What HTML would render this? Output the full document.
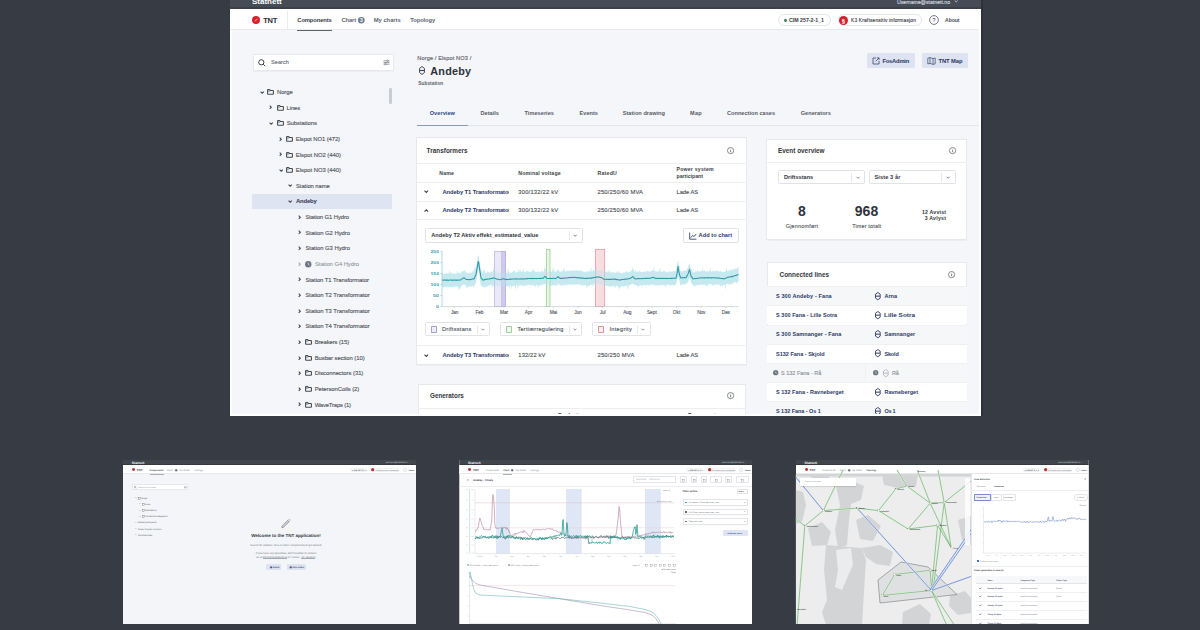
<!DOCTYPE html><html><head><meta charset="utf-8"><style>
html,body{margin:0;padding:0;}
body{width:1200px;height:630px;background:#373c44;position:relative;overflow:hidden;font-family:'Liberation Sans', sans-serif;}
.t{position:absolute;white-space:nowrap;line-height:1;}
.r{position:absolute;box-sizing:border-box;}
svg{overflow:visible}
</style></head><body>
<div class="r" style="left:981.00px;top:0.00px;width:2.00px;height:416.00px;background:#2d323a;"></div>
<div class="r" style="left:229.60px;top:0.00px;width:751.40px;height:416.00px;background:#ffffff;"></div>
<div style="position:absolute;left:0;top:0;width:979px;height:414px;overflow:hidden">
<div class="r" style="left:232.00px;top:8.70px;width:747.00px;height:405.30px;background:#f5f6f9;"></div>
</div>
<div class="r" style="left:229.60px;top:0.00px;width:751.40px;height:7.00px;background:#464c56;"></div>
<div class="r" style="left:229.60px;top:7.00px;width:751.40px;height:1.70px;background:#3c4149;"></div>
<div class="t" style="left:252.00px;top:-2.00px;font-size:8px;color:#ffffff;font-weight:700;">Statnett</div>
<div class="t" style="left:897.00px;top:0.00px;font-size:5.2px;color:#d8dbe0;font-weight:400;-webkit-text-stroke:0.13px #d8dbe0;letter-spacing:-0.021px;">Username@statnett.no</div>
<svg style="position:absolute;left:954.00px;top:0.00px;" width="4.4" height="3" viewBox="0 0 4.4 3"><path d="M0.7 0.5 L2.2 2 L3.7 0.5" fill="none" stroke="#d8dbe0" stroke-width="0.8"/></svg>
<div style="position:absolute;left:0;top:0;width:979px;height:414px;overflow:hidden">
<div class="r" style="left:229.60px;top:8.70px;width:751.40px;height:21.30px;background:#ffffff;border-bottom:0.6px solid #e9eaee"></div>
<svg style="position:absolute;left:252.00px;top:16.00px;" width="8" height="8" viewBox="0 0 8 8"><circle cx="4" cy="4" r="4" fill="#d9232e"/><path d="M3 5.2 L5.2 3" stroke="#fff" stroke-width="0.7"/></svg>
<div class="t" style="left:263.20px;top:17.00px;font-size:7.5px;color:#2a2e35;font-weight:700;letter-spacing:-0.198px;">TNT</div>
<div class="r" style="left:287.00px;top:11.00px;width:0.60px;height:19.00px;background:#ececef;"></div>
<div class="t" style="left:297.30px;top:18.00px;font-size:5.8px;color:#353a44;font-weight:700;letter-spacing:-0.104px;">Components</div>
<div class="r" style="left:297.00px;top:29.60px;width:35.00px;height:1.00px;background:#5c626c;"></div>
<div class="t" style="left:341.50px;top:18.00px;font-size:5.8px;color:#5e6470;font-weight:700;letter-spacing:-0.128px;">Chart</div>
<svg style="position:absolute;left:358.00px;top:16.70px;" width="6.6" height="6.6" viewBox="0 0 6.6 6.6"><circle cx="3.3" cy="3.3" r="3.3" fill="#6c7a8e"/><text x="3.3" y="5.2" font-size="5" fill="#fff" text-anchor="middle" font-family="Liberation Sans" font-weight="700">3</text></svg>
<div class="t" style="left:373.80px;top:18.00px;font-size:5.8px;color:#5e6470;font-weight:700;letter-spacing:-0.020px;">My charts</div>
<div class="t" style="left:410.30px;top:18.00px;font-size:5.8px;color:#5e6470;font-weight:700;letter-spacing:-0.107px;">Topology</div>
<div class="r" style="left:777.60px;top:14.00px;width:53.40px;height:12.00px;background:#ffffff;border:0.6px solid #e4e6ea;border-radius:6px"></div>
<svg style="position:absolute;left:783.50px;top:18.50px;" width="3" height="3" viewBox="0 0 3 3"><circle cx="1.5" cy="1.5" r="1.4" fill="#2f7a4f"/></svg>
<div class="t" style="left:789.00px;top:18.00px;font-size:5.2px;color:#343942;font-weight:700;letter-spacing:0.030px;">CIM 257-2-1_1</div>
<div class="r" style="left:837.60px;top:14.00px;width:84.90px;height:12.00px;background:#ffffff;border:0.6px solid #e4e6ea;border-radius:6px"></div>
<svg style="position:absolute;left:839.00px;top:15.50px;" width="9" height="9" viewBox="0 0 9 9"><circle cx="4.5" cy="4.5" r="4.5" fill="#d3202a"/><text x="4.5" y="6.6" font-size="6" fill="#fff" text-anchor="middle" font-family="Liberation Sans" font-weight="700">§</text></svg>
<div class="t" style="left:851.00px;top:19.00px;font-size:4.8px;color:#3b4049;font-weight:400;-webkit-text-stroke:0.13px #3b4049;letter-spacing:0.198px;">K3 Kraftsensitiv informasjon</div>
<svg style="position:absolute;left:929.00px;top:15.00px;" width="10" height="10" viewBox="0 0 10 10"><circle cx="5" cy="5" r="4.4" fill="none" stroke="#3f444c" stroke-width="0.7"/><text x="5" y="7" font-size="6" fill="#3f444c" text-anchor="middle" font-family="Liberation Sans">?</text></svg>
<div class="t" style="left:945.00px;top:18.00px;font-size:5.2px;color:#4a4f58;font-weight:700;letter-spacing:-0.097px;">About</div>
<div class="r" style="left:253.00px;top:54.00px;width:141.30px;height:16.70px;background:#ffffff;border:0.6px solid #e6e8ec;border-radius:1.5px;box-shadow:0 0.5px 1px rgba(0,0,0,0.04)"></div>
<svg style="position:absolute;left:258.00px;top:59.00px;" width="8" height="8" viewBox="0 0 8 8"><circle cx="3.3" cy="3.3" r="2.6" fill="none" stroke="#3c4149" stroke-width="1.0"/><path d="M5.2 5.2 L7.2 7.2" stroke="#3c4149" stroke-width="1.0"/></svg>
<div class="t" style="left:271.00px;top:60.00px;font-size:5.6px;color:#6b707a;font-weight:400;-webkit-text-stroke:0.13px #6b707a;letter-spacing:0.044px;">Search</div>
<svg style="position:absolute;left:382.50px;top:59.00px;" width="7" height="7" viewBox="0 0 7 7"><path d="M0.5 1.8H6.5M0.5 3.5H6.5M0.5 5.2H6.5" stroke="#555a63" stroke-width="0.6"/><circle cx="4.6" cy="1.8" r="0.8" fill="#fff" stroke="#555a63" stroke-width="0.5"/><circle cx="2.4" cy="5.2" r="0.8" fill="#fff" stroke="#555a63" stroke-width="0.5"/></svg>
<div class="r" style="left:389.30px;top:88.00px;width:2.50px;height:16.00px;background:#c9ccd2;border-radius:1.2px"></div>
<div class="r" style="left:252.40px;top:193.80px;width:139.30px;height:15.10px;background:#dfe4f3;"></div>
<svg style="position:absolute;left:259.50px;top:90.50px;" width="4.4" height="3" viewBox="0 0 4.4 3"><path d="M0.6 0.7 L2.2 2.3 L3.8 0.7" fill="none" stroke="#42474f" stroke-width="1.1"/></svg>
<svg style="position:absolute;left:267.20px;top:89.10px;" width="7" height="5.8" viewBox="0 0 7 5.8"><path d="M0.6 1.1 Q0.6 0.6 1.1 0.6 H2.6 L3.4 1.45 H5.9 Q6.4 1.45 6.4 1.95 V4.7 Q6.4 5.2 5.9 5.2 H1.1 Q0.6 5.2 0.6 4.7 Z" fill="none" stroke="#464b53" stroke-width="1.1" stroke-linejoin="round"/><path d="M0.7 2.3 H3.2" stroke="#464b53" stroke-width="0.5"/></svg>
<div class="t" style="left:277.00px;top:90.00px;font-size:5.9px;color:#50555d;font-weight:400;-webkit-text-stroke:0.13px #50555d;letter-spacing:-0.089px;">Norge</div>
<svg style="position:absolute;left:269.30px;top:105.43px;" width="3" height="4.4" viewBox="0 0 3 4.4"><path d="M0.7 0.6 L2.3 2.2 L0.7 3.8" fill="none" stroke="#42474f" stroke-width="1.1"/></svg>
<svg style="position:absolute;left:277.00px;top:104.73px;" width="7" height="5.8" viewBox="0 0 7 5.8"><path d="M0.6 1.1 Q0.6 0.6 1.1 0.6 H2.6 L3.4 1.45 H5.9 Q6.4 1.45 6.4 1.95 V4.7 Q6.4 5.2 5.9 5.2 H1.1 Q0.6 5.2 0.6 4.7 Z" fill="none" stroke="#464b53" stroke-width="1.1" stroke-linejoin="round"/><path d="M0.7 2.3 H3.2" stroke="#464b53" stroke-width="0.5"/></svg>
<div class="t" style="left:286.50px;top:106.00px;font-size:5.9px;color:#50555d;font-weight:400;-webkit-text-stroke:0.13px #50555d;letter-spacing:-0.099px;">Lines</div>
<svg style="position:absolute;left:268.80px;top:121.76px;" width="4.4" height="3" viewBox="0 0 4.4 3"><path d="M0.6 0.7 L2.2 2.3 L3.8 0.7" fill="none" stroke="#42474f" stroke-width="1.1"/></svg>
<svg style="position:absolute;left:277.00px;top:120.36px;" width="7" height="5.8" viewBox="0 0 7 5.8"><path d="M0.6 1.1 Q0.6 0.6 1.1 0.6 H2.6 L3.4 1.45 H5.9 Q6.4 1.45 6.4 1.95 V4.7 Q6.4 5.2 5.9 5.2 H1.1 Q0.6 5.2 0.6 4.7 Z" fill="none" stroke="#464b53" stroke-width="1.1" stroke-linejoin="round"/><path d="M0.7 2.3 H3.2" stroke="#464b53" stroke-width="0.5"/></svg>
<div class="t" style="left:286.70px;top:121.00px;font-size:5.9px;color:#50555d;font-weight:400;-webkit-text-stroke:0.13px #50555d;letter-spacing:-0.054px;">Substations</div>
<svg style="position:absolute;left:279.10px;top:136.69px;" width="3" height="4.4" viewBox="0 0 3 4.4"><path d="M0.7 0.6 L2.3 2.2 L0.7 3.8" fill="none" stroke="#42474f" stroke-width="1.1"/></svg>
<svg style="position:absolute;left:286.30px;top:135.99px;" width="7" height="5.8" viewBox="0 0 7 5.8"><path d="M0.6 1.1 Q0.6 0.6 1.1 0.6 H2.6 L3.4 1.45 H5.9 Q6.4 1.45 6.4 1.95 V4.7 Q6.4 5.2 5.9 5.2 H1.1 Q0.6 5.2 0.6 4.7 Z" fill="none" stroke="#464b53" stroke-width="1.1" stroke-linejoin="round"/><path d="M0.7 2.3 H3.2" stroke="#464b53" stroke-width="0.5"/></svg>
<div class="t" style="left:295.80px;top:137.00px;font-size:5.9px;color:#50555d;font-weight:400;-webkit-text-stroke:0.13px #50555d;letter-spacing:-0.082px;">Elspot NO1 (472)</div>
<svg style="position:absolute;left:279.10px;top:152.32px;" width="3" height="4.4" viewBox="0 0 3 4.4"><path d="M0.7 0.6 L2.3 2.2 L0.7 3.8" fill="none" stroke="#42474f" stroke-width="1.1"/></svg>
<svg style="position:absolute;left:286.30px;top:151.62px;" width="7" height="5.8" viewBox="0 0 7 5.8"><path d="M0.6 1.1 Q0.6 0.6 1.1 0.6 H2.6 L3.4 1.45 H5.9 Q6.4 1.45 6.4 1.95 V4.7 Q6.4 5.2 5.9 5.2 H1.1 Q0.6 5.2 0.6 4.7 Z" fill="none" stroke="#464b53" stroke-width="1.1" stroke-linejoin="round"/><path d="M0.7 2.3 H3.2" stroke="#464b53" stroke-width="0.5"/></svg>
<div class="t" style="left:295.80px;top:153.00px;font-size:5.9px;color:#50555d;font-weight:400;-webkit-text-stroke:0.13px #50555d;letter-spacing:-0.020px;">Elspot NO2 (440)</div>
<svg style="position:absolute;left:278.60px;top:168.65px;" width="4.4" height="3" viewBox="0 0 4.4 3"><path d="M0.6 0.7 L2.2 2.3 L3.8 0.7" fill="none" stroke="#42474f" stroke-width="1.1"/></svg>
<svg style="position:absolute;left:286.30px;top:167.25px;" width="7" height="5.8" viewBox="0 0 7 5.8"><path d="M0.6 1.1 Q0.6 0.6 1.1 0.6 H2.6 L3.4 1.45 H5.9 Q6.4 1.45 6.4 1.95 V4.7 Q6.4 5.2 5.9 5.2 H1.1 Q0.6 5.2 0.6 4.7 Z" fill="none" stroke="#464b53" stroke-width="1.1" stroke-linejoin="round"/><path d="M0.7 2.3 H3.2" stroke="#464b53" stroke-width="0.5"/></svg>
<div class="t" style="left:295.80px;top:168.00px;font-size:5.9px;color:#50555d;font-weight:400;-webkit-text-stroke:0.13px #50555d;letter-spacing:-0.020px;">Elspot NO3 (440)</div>
<svg style="position:absolute;left:288.30px;top:184.28px;" width="4.4" height="3" viewBox="0 0 4.4 3"><path d="M0.6 0.7 L2.2 2.3 L3.8 0.7" fill="none" stroke="#42474f" stroke-width="1.1"/></svg>
<div class="t" style="left:296.00px;top:184.00px;font-size:5.9px;color:#50555d;font-weight:400;-webkit-text-stroke:0.13px #50555d;letter-spacing:-0.077px;">Station name</div>
<svg style="position:absolute;left:288.30px;top:199.91px;" width="4.4" height="3" viewBox="0 0 4.4 3"><path d="M0.6 0.7 L2.2 2.3 L3.8 0.7" fill="none" stroke="#42474f" stroke-width="1.1"/></svg>
<div class="t" style="left:296.00px;top:199.00px;font-size:5.9px;color:#2c3550;font-weight:700;letter-spacing:-0.152px;">Andeby</div>
<svg style="position:absolute;left:298.40px;top:214.84px;" width="3" height="4.4" viewBox="0 0 3 4.4"><path d="M0.7 0.6 L2.3 2.2 L0.7 3.8" fill="none" stroke="#42474f" stroke-width="1.1"/></svg>
<div class="t" style="left:305.40px;top:215.00px;font-size:5.9px;color:#50555d;font-weight:400;-webkit-text-stroke:0.13px #50555d;letter-spacing:-0.099px;">Station G1 Hydro</div>
<svg style="position:absolute;left:298.40px;top:230.47px;" width="3" height="4.4" viewBox="0 0 3 4.4"><path d="M0.7 0.6 L2.3 2.2 L0.7 3.8" fill="none" stroke="#42474f" stroke-width="1.1"/></svg>
<div class="t" style="left:305.40px;top:231.00px;font-size:5.9px;color:#50555d;font-weight:400;-webkit-text-stroke:0.13px #50555d;letter-spacing:-0.037px;">Station G2 Hydro</div>
<svg style="position:absolute;left:298.40px;top:246.10px;" width="3" height="4.4" viewBox="0 0 3 4.4"><path d="M0.7 0.6 L2.3 2.2 L0.7 3.8" fill="none" stroke="#42474f" stroke-width="1.1"/></svg>
<div class="t" style="left:305.40px;top:246.00px;font-size:5.9px;color:#50555d;font-weight:400;-webkit-text-stroke:0.13px #50555d;letter-spacing:-0.037px;">Station G3 Hydro</div>
<svg style="position:absolute;left:298.40px;top:261.73px;" width="3" height="4.4" viewBox="0 0 3 4.4"><path d="M0.7 0.6 L2.3 2.2 L0.7 3.8" fill="none" stroke="#a3a7ae" stroke-width="1.1"/></svg>
<svg style="position:absolute;left:305.25px;top:260.68px;" width="6.5" height="6.5" viewBox="0 0 6.5 6.5"><circle cx="3.25" cy="3.25" r="3.2" fill="#6f7782"/><path d="M3.25 1.6V3.3L4.4 4.1" stroke="#fff" stroke-width="0.6" fill="none"/></svg>
<div class="t" style="left:315.00px;top:262.00px;font-size:5.9px;color:#9a9ea6;font-weight:400;-webkit-text-stroke:0.13px #9a9ea6;letter-spacing:-0.074px;">Station G4 Hydro</div>
<svg style="position:absolute;left:298.40px;top:277.36px;" width="3" height="4.4" viewBox="0 0 3 4.4"><path d="M0.7 0.6 L2.3 2.2 L0.7 3.8" fill="none" stroke="#42474f" stroke-width="1.1"/></svg>
<div class="t" style="left:305.40px;top:278.00px;font-size:5.9px;color:#50555d;font-weight:400;-webkit-text-stroke:0.13px #50555d;letter-spacing:-0.060px;">Station T1 Transformator</div>
<svg style="position:absolute;left:298.40px;top:292.99px;" width="3" height="4.4" viewBox="0 0 3 4.4"><path d="M0.7 0.6 L2.3 2.2 L0.7 3.8" fill="none" stroke="#42474f" stroke-width="1.1"/></svg>
<div class="t" style="left:305.40px;top:293.00px;font-size:5.9px;color:#50555d;font-weight:400;-webkit-text-stroke:0.13px #50555d;letter-spacing:-0.027px;">Station T2 Transformator</div>
<svg style="position:absolute;left:298.40px;top:308.62px;" width="3" height="4.4" viewBox="0 0 3 4.4"><path d="M0.7 0.6 L2.3 2.2 L0.7 3.8" fill="none" stroke="#42474f" stroke-width="1.1"/></svg>
<div class="t" style="left:305.40px;top:309.00px;font-size:5.9px;color:#50555d;font-weight:400;-webkit-text-stroke:0.13px #50555d;letter-spacing:-0.027px;">Station T3 Transformator</div>
<svg style="position:absolute;left:298.40px;top:324.25px;" width="3" height="4.4" viewBox="0 0 3 4.4"><path d="M0.7 0.6 L2.3 2.2 L0.7 3.8" fill="none" stroke="#42474f" stroke-width="1.1"/></svg>
<div class="t" style="left:305.40px;top:324.00px;font-size:5.9px;color:#50555d;font-weight:400;-webkit-text-stroke:0.13px #50555d;letter-spacing:-0.027px;">Station T4 Transformator</div>
<svg style="position:absolute;left:298.40px;top:339.88px;" width="3" height="4.4" viewBox="0 0 3 4.4"><path d="M0.7 0.6 L2.3 2.2 L0.7 3.8" fill="none" stroke="#42474f" stroke-width="1.1"/></svg>
<svg style="position:absolute;left:305.00px;top:339.18px;" width="7" height="5.8" viewBox="0 0 7 5.8"><path d="M0.6 1.1 Q0.6 0.6 1.1 0.6 H2.6 L3.4 1.45 H5.9 Q6.4 1.45 6.4 1.95 V4.7 Q6.4 5.2 5.9 5.2 H1.1 Q0.6 5.2 0.6 4.7 Z" fill="none" stroke="#464b53" stroke-width="1.1" stroke-linejoin="round"/><path d="M0.7 2.3 H3.2" stroke="#464b53" stroke-width="0.5"/></svg>
<div class="t" style="left:314.70px;top:340.00px;font-size:5.9px;color:#50555d;font-weight:400;-webkit-text-stroke:0.13px #50555d;letter-spacing:-0.107px;">Breakers (15)</div>
<svg style="position:absolute;left:298.40px;top:355.51px;" width="3" height="4.4" viewBox="0 0 3 4.4"><path d="M0.7 0.6 L2.3 2.2 L0.7 3.8" fill="none" stroke="#42474f" stroke-width="1.1"/></svg>
<svg style="position:absolute;left:305.00px;top:354.81px;" width="7" height="5.8" viewBox="0 0 7 5.8"><path d="M0.6 1.1 Q0.6 0.6 1.1 0.6 H2.6 L3.4 1.45 H5.9 Q6.4 1.45 6.4 1.95 V4.7 Q6.4 5.2 5.9 5.2 H1.1 Q0.6 5.2 0.6 4.7 Z" fill="none" stroke="#464b53" stroke-width="1.1" stroke-linejoin="round"/><path d="M0.7 2.3 H3.2" stroke="#464b53" stroke-width="0.5"/></svg>
<div class="t" style="left:314.70px;top:356.00px;font-size:5.9px;color:#50555d;font-weight:400;-webkit-text-stroke:0.13px #50555d;letter-spacing:-0.062px;">Busbar section (10)</div>
<svg style="position:absolute;left:298.40px;top:371.14px;" width="3" height="4.4" viewBox="0 0 3 4.4"><path d="M0.7 0.6 L2.3 2.2 L0.7 3.8" fill="none" stroke="#42474f" stroke-width="1.1"/></svg>
<svg style="position:absolute;left:305.00px;top:370.44px;" width="7" height="5.8" viewBox="0 0 7 5.8"><path d="M0.6 1.1 Q0.6 0.6 1.1 0.6 H2.6 L3.4 1.45 H5.9 Q6.4 1.45 6.4 1.95 V4.7 Q6.4 5.2 5.9 5.2 H1.1 Q0.6 5.2 0.6 4.7 Z" fill="none" stroke="#464b53" stroke-width="1.1" stroke-linejoin="round"/><path d="M0.7 2.3 H3.2" stroke="#464b53" stroke-width="0.5"/></svg>
<div class="t" style="left:314.70px;top:371.00px;font-size:5.9px;color:#50555d;font-weight:400;-webkit-text-stroke:0.13px #50555d;letter-spacing:-0.047px;">Disconnectors (31)</div>
<svg style="position:absolute;left:298.40px;top:386.77px;" width="3" height="4.4" viewBox="0 0 3 4.4"><path d="M0.7 0.6 L2.3 2.2 L0.7 3.8" fill="none" stroke="#42474f" stroke-width="1.1"/></svg>
<svg style="position:absolute;left:305.00px;top:386.07px;" width="7" height="5.8" viewBox="0 0 7 5.8"><path d="M0.6 1.1 Q0.6 0.6 1.1 0.6 H2.6 L3.4 1.45 H5.9 Q6.4 1.45 6.4 1.95 V4.7 Q6.4 5.2 5.9 5.2 H1.1 Q0.6 5.2 0.6 4.7 Z" fill="none" stroke="#464b53" stroke-width="1.1" stroke-linejoin="round"/><path d="M0.7 2.3 H3.2" stroke="#464b53" stroke-width="0.5"/></svg>
<div class="t" style="left:314.70px;top:387.00px;font-size:5.9px;color:#50555d;font-weight:400;-webkit-text-stroke:0.13px #50555d;letter-spacing:-0.060px;">PetersonCoils (2)</div>
<svg style="position:absolute;left:298.40px;top:402.40px;" width="3" height="4.4" viewBox="0 0 3 4.4"><path d="M0.7 0.6 L2.3 2.2 L0.7 3.8" fill="none" stroke="#42474f" stroke-width="1.1"/></svg>
<svg style="position:absolute;left:305.00px;top:401.70px;" width="7" height="5.8" viewBox="0 0 7 5.8"><path d="M0.6 1.1 Q0.6 0.6 1.1 0.6 H2.6 L3.4 1.45 H5.9 Q6.4 1.45 6.4 1.95 V4.7 Q6.4 5.2 5.9 5.2 H1.1 Q0.6 5.2 0.6 4.7 Z" fill="none" stroke="#464b53" stroke-width="1.1" stroke-linejoin="round"/><path d="M0.7 2.3 H3.2" stroke="#464b53" stroke-width="0.5"/></svg>
<div class="t" style="left:314.70px;top:403.00px;font-size:5.9px;color:#50555d;font-weight:400;-webkit-text-stroke:0.13px #50555d;letter-spacing:-0.178px;">WaveTraps (1)</div>
<div class="t" style="left:417.30px;top:56.00px;font-size:5.6px;color:#5b606a;font-weight:400;-webkit-text-stroke:0.13px #5b606a;letter-spacing:0.120px;">Norge / Elspot NO3 /</div>
<svg style="position:absolute;left:418.90px;top:66.20px;" width="6" height="9" viewBox="0 0 6 9"><path d="M3 0.55 L5.45 2.4 V6.6 L3 8.45 L0.55 6.6 V2.4 Z" fill="none" stroke="#3d424a" stroke-width="0.95" stroke-linejoin="round"/><path d="M0.9 4.5 H5.1" stroke="#3d424a" stroke-width="1.1"/></svg>
<div class="t" style="left:430.30px;top:66.00px;font-size:10.8px;color:#2f333b;font-weight:700;letter-spacing:0.234px;">Andeby</div>
<div class="t" style="left:418.30px;top:82.00px;font-size:4.8px;color:#5b606a;font-weight:700;letter-spacing:0.020px;">Substation</div>
<div class="r" style="left:866.50px;top:53.00px;width:48.50px;height:15.30px;background:#dde3f2;border-radius:1.5px"></div>
<svg style="position:absolute;left:872.00px;top:57.00px;" width="8" height="8" viewBox="0 0 8 8"><path d="M4.2 1 H1 V7 H7 V3.8" fill="none" stroke="#3a466a" stroke-width="0.8"/><path d="M3.6 4.4 L7 1 M5.2 0.9 H7.1 V2.8" fill="none" stroke="#3a466a" stroke-width="0.8"/></svg>
<div class="t" style="left:882.50px;top:59.00px;font-size:5.8px;color:#2a3660;font-weight:700;letter-spacing:-0.230px;">FosAdmin</div>
<div class="r" style="left:922.00px;top:53.00px;width:46.30px;height:15.30px;background:#dde3f2;border-radius:1.5px"></div>
<svg style="position:absolute;left:927.00px;top:57.00px;" width="9" height="8" viewBox="0 0 9 8"><path d="M0.8 1.2 L3 0.6 L6 1.6 L8.2 1 V6.8 L6 7.4 L3 6.4 L0.8 7 Z M3 0.6 V6.4 M6 1.6 V7.4" fill="none" stroke="#3a466a" stroke-width="0.7" stroke-linejoin="round"/></svg>
<div class="t" style="left:938.50px;top:59.00px;font-size:5.8px;color:#2a3660;font-weight:700;letter-spacing:-0.069px;">TNT Map</div>
<div class="r" style="left:417.00px;top:125.00px;width:562.00px;height:0.60px;background:#e4e6ea;"></div>
<div class="r" style="left:417.00px;top:124.80px;width:51.00px;height:1.20px;background:#8d9ab3;"></div>
<div class="t" style="left:429.70px;top:111.00px;font-size:5.6px;color:#2f4a86;font-weight:700;letter-spacing:0.051px;">Overview</div>
<div class="t" style="left:480.50px;top:111.00px;font-size:5.6px;color:#555b66;font-weight:700;letter-spacing:0.022px;">Details</div>
<div class="t" style="left:524.50px;top:111.00px;font-size:5.6px;color:#555b66;font-weight:700;letter-spacing:0.036px;">Timeseries</div>
<div class="t" style="left:579.50px;top:111.00px;font-size:5.6px;color:#555b66;font-weight:700;letter-spacing:0.026px;">Events</div>
<div class="t" style="left:622.70px;top:111.00px;font-size:5.6px;color:#555b66;font-weight:700;letter-spacing:0.023px;">Station drawing</div>
<div class="t" style="left:690.00px;top:111.00px;font-size:5.6px;color:#555b66;font-weight:700;letter-spacing:0.271px;">Map</div>
<div class="t" style="left:727.00px;top:111.00px;font-size:5.6px;color:#555b66;font-weight:700;letter-spacing:0.008px;">Connection cases</div>
<div class="t" style="left:800.70px;top:111.00px;font-size:5.6px;color:#555b66;font-weight:700;letter-spacing:0.044px;">Generators</div>
<div class="r" style="left:416.40px;top:137.30px;width:330.90px;height:227.40px;background:#ffffff;border:0.7px solid #e7e9ed;box-shadow:0 0.5px 1px rgba(20,30,50,0.04)"></div>
<div class="t" style="left:426.60px;top:148.00px;font-size:6.3px;color:#30343b;font-weight:700;letter-spacing:0.071px;">Transformers</div>
<svg style="position:absolute;left:727.00px;top:146.80px;" width="7.2" height="7.2" viewBox="0 0 7.2 7.2"><circle cx="3.6" cy="3.6" r="3.1" fill="none" stroke="#4a4f58" stroke-width="0.65"/><path d="M3.6 3.1 V5.3" stroke="#4a4f58" stroke-width="0.7"/><circle cx="3.6" cy="2.1" r="0.4" fill="#4a4f58"/></svg>
<div class="r" style="left:417.00px;top:162.50px;width:330.00px;height:0.60px;background:#eceef1;"></div>
<div class="t" style="left:439.20px;top:171.00px;font-size:5.2px;color:#3a3f48;font-weight:700;letter-spacing:0.215px;">Name</div>
<div class="t" style="left:518.30px;top:171.00px;font-size:5.2px;color:#3a3f48;font-weight:700;letter-spacing:0.161px;">Nominal voltage</div>
<div class="t" style="left:597.50px;top:171.00px;font-size:5.2px;color:#3a3f48;font-weight:700;letter-spacing:0.221px;">RatedU</div>
<div class="t" style="left:676.50px;top:167.00px;font-size:5.2px;color:#3a3f48;font-weight:700;letter-spacing:0.201px;">Power system</div>
<div class="t" style="left:676.50px;top:174.00px;font-size:5.2px;color:#3a3f48;font-weight:700;letter-spacing:-0.003px;">participant</div>
<div class="r" style="left:417.00px;top:182.30px;width:330.00px;height:0.60px;background:#eceef1;"></div>
<div class="r" style="left:417.00px;top:200.60px;width:330.00px;height:0.60px;background:#eceef1;"></div>
<div class="r" style="left:417.00px;top:219.30px;width:330.00px;height:0.60px;background:#eceef1;"></div>
<div class="r" style="left:417.00px;top:344.80px;width:330.00px;height:0.60px;background:#eceef1;"></div>
<svg style="position:absolute;left:424.30px;top:190.20px;" width="4.6" height="3.2" viewBox="0 0 4.6 3.2"><path d="M0.5 0.6 L2.3 2.4 L4.1 0.6" fill="none" stroke="#3f444c" stroke-width="1.05"/></svg>
<div class="r" style="left:0;top:0;width:509.3px;height:415px;overflow:hidden">
<div class="t" style="left:442.50px;top:190.00px;font-size:5.8px;color:#2b3866;font-weight:700;letter-spacing:-0.111px;">Andeby T1 Transformator</div>
</div>
<div class="t" style="left:518.30px;top:190.00px;font-size:5.8px;color:#4b5058;font-weight:400;-webkit-text-stroke:0.13px #4b5058;letter-spacing:0.201px;">300/132/22 kV</div>
<div class="t" style="left:597.50px;top:190.00px;font-size:5.8px;color:#4b5058;font-weight:400;-webkit-text-stroke:0.13px #4b5058;letter-spacing:0.210px;">250/250/60 MVA</div>
<div class="t" style="left:676.50px;top:190.00px;font-size:5.8px;color:#4b5058;font-weight:400;-webkit-text-stroke:0.13px #4b5058;letter-spacing:-0.060px;">Lade AS</div>
<svg style="position:absolute;left:424.30px;top:208.50px;" width="4.6" height="3.2" viewBox="0 0 4.6 3.2"><path d="M0.5 2.6 L2.3 0.8 L4.1 2.6" fill="none" stroke="#3f444c" stroke-width="1.05"/></svg>
<div class="r" style="left:0;top:0;width:509.3px;height:415px;overflow:hidden">
<div class="t" style="left:442.50px;top:208.00px;font-size:5.8px;color:#2b3866;font-weight:700;letter-spacing:-0.111px;">Andeby T2 Transformator</div>
</div>
<div class="t" style="left:518.30px;top:208.00px;font-size:5.8px;color:#4b5058;font-weight:400;-webkit-text-stroke:0.13px #4b5058;letter-spacing:0.201px;">300/132/22 kV</div>
<div class="t" style="left:597.50px;top:208.00px;font-size:5.8px;color:#4b5058;font-weight:400;-webkit-text-stroke:0.13px #4b5058;letter-spacing:0.210px;">250/250/60 MVA</div>
<div class="t" style="left:676.50px;top:208.00px;font-size:5.8px;color:#4b5058;font-weight:400;-webkit-text-stroke:0.13px #4b5058;letter-spacing:-0.060px;">Lade AS</div>
<svg style="position:absolute;left:424.30px;top:353.70px;" width="4.6" height="3.2" viewBox="0 0 4.6 3.2"><path d="M0.5 0.6 L2.3 2.4 L4.1 0.6" fill="none" stroke="#3f444c" stroke-width="1.05"/></svg>
<div class="r" style="left:0;top:0;width:509.3px;height:415px;overflow:hidden">
<div class="t" style="left:442.50px;top:353.00px;font-size:5.8px;color:#2b3866;font-weight:700;letter-spacing:-0.111px;">Andeby T3 Transformator</div>
</div>
<div class="t" style="left:518.30px;top:353.00px;font-size:5.8px;color:#4b5058;font-weight:400;-webkit-text-stroke:0.13px #4b5058;letter-spacing:0.121px;">132/22 kV</div>
<div class="t" style="left:597.50px;top:353.00px;font-size:5.8px;color:#4b5058;font-weight:400;-webkit-text-stroke:0.13px #4b5058;letter-spacing:0.209px;">250/250 MVA</div>
<div class="t" style="left:676.50px;top:353.00px;font-size:5.8px;color:#4b5058;font-weight:400;-webkit-text-stroke:0.13px #4b5058;letter-spacing:-0.060px;">Lade AS</div>
<div class="r" style="left:425.00px;top:227.70px;width:158.00px;height:15.30px;background:#ffffff;border:0.7px solid #dfe2e7;border-radius:1.5px"></div>
<div class="t" style="left:431.30px;top:233.00px;font-size:5.6px;color:#30353d;font-weight:700;letter-spacing:0.007px;">Andeby T2 Aktiv effekt_estimated_value</div>
<div class="r" style="left:568.50px;top:231.00px;width:0.50px;height:9.00px;background:#e6e8ec;"></div>
<svg style="position:absolute;left:572.80px;top:234.00px;" width="4.4" height="3" viewBox="0 0 4.4 3"><path d="M0.7 0.8 L2.2 2.3 L3.7 0.8" fill="none" stroke="#5a5f68" stroke-width="0.75"/></svg>
<div class="r" style="left:682.60px;top:227.70px;width:56.00px;height:15.30px;background:#ffffff;border:0.7px solid #dfe2e7;border-radius:1.5px"></div>
<svg style="position:absolute;left:688.50px;top:231.50px;" width="8" height="8" viewBox="0 0 8 8"><path d="M0.7 0.6 V7.2 H7.4" fill="none" stroke="#2b3866" stroke-width="0.85"/><path d="M1.8 5.6 L3.6 3.4 L5 4.6 L7.2 2" fill="none" stroke="#2b3866" stroke-width="0.85"/></svg>
<div class="t" style="left:698.60px;top:233.00px;font-size:5.6px;color:#2b3866;font-weight:700;letter-spacing:0.054px;">Add to chart</div>
<div class="r" style="left:417.50px;top:383.90px;width:328.00px;height:46.10px;background:#ffffff;border:0.7px solid #e7e9ed;box-shadow:0 0.5px 1px rgba(20,30,50,0.04)"></div>
<div class="t" style="left:430.00px;top:393.00px;font-size:6.3px;color:#30343b;font-weight:700;letter-spacing:0.029px;">Generators</div>
<svg style="position:absolute;left:726.50px;top:392.30px;" width="7.2" height="7.2" viewBox="0 0 7.2 7.2"><circle cx="3.6" cy="3.6" r="3.1" fill="none" stroke="#4a4f58" stroke-width="0.65"/><path d="M3.6 3.1 V5.3" stroke="#4a4f58" stroke-width="0.7"/><circle cx="3.6" cy="2.1" r="0.4" fill="#4a4f58"/></svg>
<div class="r" style="left:418.00px;top:407.50px;width:327.00px;height:0.60px;background:#eceef1;"></div>
<div class="t" style="left:558.00px;top:413.00px;font-size:5.2px;color:#3a3f48;font-weight:700;">Production</div>
<div class="t" style="left:688.00px;top:413.00px;font-size:5.2px;color:#3a3f48;font-weight:700;">Power system</div>
<div class="r" style="left:766.20px;top:139.30px;width:201.10px;height:101.10px;background:#ffffff;border:0.7px solid #e7e9ed;box-shadow:0 0.5px 1px rgba(20,30,50,0.04)"></div>
<div class="t" style="left:777.90px;top:148.00px;font-size:6.4px;color:#30343b;font-weight:700;letter-spacing:0.011px;">Event overview</div>
<svg style="position:absolute;left:949.00px;top:147.00px;" width="7.2" height="7.2" viewBox="0 0 7.2 7.2"><circle cx="3.6" cy="3.6" r="3.1" fill="none" stroke="#4a4f58" stroke-width="0.65"/><path d="M3.6 3.1 V5.3" stroke="#4a4f58" stroke-width="0.7"/><circle cx="3.6" cy="2.1" r="0.4" fill="#4a4f58"/></svg>
<div class="r" style="left:767.00px;top:162.40px;width:200.00px;height:0.60px;background:#eceef1;"></div>
<div class="r" style="left:778.20px;top:169.60px;width:86.80px;height:14.60px;background:#ffffff;border:0.7px solid #dfe2e7;border-radius:1.5px"></div>
<div class="t" style="left:784.00px;top:175.00px;font-size:5.6px;color:#30353d;font-weight:700;letter-spacing:-0.003px;">Driftsstans</div>
<div class="r" style="left:851.30px;top:172.50px;width:0.50px;height:9.00px;background:#e6e8ec;"></div>
<svg style="position:absolute;left:855.60px;top:175.90px;" width="4.4" height="3" viewBox="0 0 4.4 3"><path d="M0.7 0.8 L2.2 2.3 L3.7 0.8" fill="none" stroke="#5a5f68" stroke-width="0.75"/></svg>
<div class="r" style="left:868.50px;top:169.60px;width:87.30px;height:14.60px;background:#ffffff;border:0.7px solid #dfe2e7;border-radius:1.5px"></div>
<div class="t" style="left:874.50px;top:175.00px;font-size:5.6px;color:#30353d;font-weight:700;letter-spacing:0.111px;">Siste 3 år</div>
<div class="r" style="left:941.30px;top:172.50px;width:0.50px;height:9.00px;background:#e6e8ec;"></div>
<svg style="position:absolute;left:945.60px;top:175.90px;" width="4.4" height="3" viewBox="0 0 4.4 3"><path d="M0.7 0.8 L2.2 2.3 L3.7 0.8" fill="none" stroke="#5a5f68" stroke-width="0.75"/></svg>
<div class="t" style="left:601.65px;width:400px;text-align:center;top:204.00px;font-size:14px;color:#2f333b;font-weight:700;letter-spacing:-0.497px;">8</div>
<div class="t" style="left:602.00px;width:400px;text-align:center;top:224.00px;font-size:5.4px;color:#555a63;font-weight:400;-webkit-text-stroke:0.13px #555a63;letter-spacing:0.230px;">Gjennomført</div>
<div class="t" style="left:666.50px;width:400px;text-align:center;top:204.00px;font-size:14px;color:#2f333b;font-weight:700;letter-spacing:0.080px;">968</div>
<div class="t" style="left:666.70px;width:400px;text-align:center;top:224.00px;font-size:5.4px;color:#555a63;font-weight:400;-webkit-text-stroke:0.13px #555a63;letter-spacing:0.195px;">Timer totalt</div>
<div class="t" style="left:546.20px;width:400px;text-align:right;top:210.00px;font-size:5.2px;color:#2f333b;font-weight:700;letter-spacing:0.199px;">12 Avvist</div>
<div class="t" style="left:546.20px;width:400px;text-align:right;top:216.00px;font-size:5.2px;color:#2f333b;font-weight:700;letter-spacing:0.248px;">3 Avlyst</div>
<div class="r" style="left:766.50px;top:261.50px;width:200.50px;height:168.50px;background:#ffffff;border:0.7px solid #e7e9ed;box-shadow:0 0.5px 1px rgba(20,30,50,0.04)"></div>
<div class="t" style="left:779.50px;top:272.00px;font-size:6.4px;color:#30343b;font-weight:700;letter-spacing:0.016px;">Connected lines</div>
<svg style="position:absolute;left:948.00px;top:270.50px;" width="7.2" height="7.2" viewBox="0 0 7.2 7.2"><circle cx="3.6" cy="3.6" r="3.1" fill="none" stroke="#4a4f58" stroke-width="0.65"/><path d="M3.6 3.1 V5.3" stroke="#4a4f58" stroke-width="0.7"/><circle cx="3.6" cy="2.1" r="0.4" fill="#4a4f58"/></svg>
<div class="r" style="left:767.00px;top:286.20px;width:199.50px;height:19.15px;background:#f6f7f9;border-top:0.6px solid #eef0f3"></div>
<div class="t" style="left:776.00px;top:294.00px;font-size:5.5px;color:#2b3866;font-weight:700;letter-spacing:0.116px;">S 300 Andeby - Fana</div>
<svg style="position:absolute;left:874.90px;top:292.00px;" width="5.7" height="8.3" viewBox="0 0 5.7 8.3"><path d="M2.85 0.5 L5.2 2.2 V6.1 L2.85 7.8 L0.5 6.1 V2.2 Z" fill="none" stroke="#2b3660" stroke-width="0.9" stroke-linejoin="round"/><path d="M0.8 4.15 H4.9" stroke="#2b3660" stroke-width="1.0"/></svg>
<div class="t" style="left:884.40px;top:294.00px;font-size:5.5px;color:#2b3866;font-weight:700;letter-spacing:0.042px;">Arna</div>
<div class="r" style="left:767.00px;top:305.35px;width:199.50px;height:19.15px;background:#ffffff;border-top:0.6px solid #eef0f3"></div>
<div class="t" style="left:776.00px;top:313.00px;font-size:5.5px;color:#2b3866;font-weight:700;letter-spacing:0.041px;">S 300 Fana - Lille Sotra</div>
<svg style="position:absolute;left:874.90px;top:311.15px;" width="5.7" height="8.3" viewBox="0 0 5.7 8.3"><path d="M2.85 0.5 L5.2 2.2 V6.1 L2.85 7.8 L0.5 6.1 V2.2 Z" fill="none" stroke="#2b3660" stroke-width="0.9" stroke-linejoin="round"/><path d="M0.8 4.15 H4.9" stroke="#2b3660" stroke-width="1.0"/></svg>
<div class="t" style="left:884.40px;top:313.00px;font-size:5.5px;color:#2b3866;font-weight:700;transform:scaleX(1.1657);transform-origin:0 0;">Lille Sotra</div>
<div class="r" style="left:767.00px;top:324.50px;width:199.50px;height:19.15px;background:#f6f7f9;border-top:0.6px solid #eef0f3"></div>
<div class="t" style="left:776.00px;top:332.00px;font-size:5.5px;color:#2b3866;font-weight:700;letter-spacing:0.082px;">S 300 Samnanger - Fana</div>
<svg style="position:absolute;left:874.90px;top:330.30px;" width="5.7" height="8.3" viewBox="0 0 5.7 8.3"><path d="M2.85 0.5 L5.2 2.2 V6.1 L2.85 7.8 L0.5 6.1 V2.2 Z" fill="none" stroke="#2b3660" stroke-width="0.9" stroke-linejoin="round"/><path d="M0.8 4.15 H4.9" stroke="#2b3660" stroke-width="1.0"/></svg>
<div class="t" style="left:884.40px;top:332.00px;font-size:5.5px;color:#2b3866;font-weight:700;letter-spacing:0.115px;">Samnanger</div>
<div class="r" style="left:767.00px;top:343.65px;width:199.50px;height:19.15px;background:#ffffff;border-top:0.6px solid #eef0f3"></div>
<div class="t" style="left:776.00px;top:352.00px;font-size:5.5px;color:#2b3866;font-weight:700;letter-spacing:0.005px;">S132 Fana - Skjold</div>
<svg style="position:absolute;left:874.90px;top:349.45px;" width="5.7" height="8.3" viewBox="0 0 5.7 8.3"><path d="M2.85 0.5 L5.2 2.2 V6.1 L2.85 7.8 L0.5 6.1 V2.2 Z" fill="none" stroke="#2b3660" stroke-width="0.9" stroke-linejoin="round"/><path d="M0.8 4.15 H4.9" stroke="#2b3660" stroke-width="1.0"/></svg>
<div class="t" style="left:884.40px;top:352.00px;font-size:5.5px;color:#2b3866;font-weight:700;letter-spacing:-0.137px;">Skold</div>
<div class="r" style="left:767.00px;top:362.80px;width:199.50px;height:19.15px;background:#f6f7f9;border-top:0.6px solid #eef0f3"></div>
<svg style="position:absolute;left:773.30px;top:370.05px;" width="5.4" height="5.4" viewBox="0 0 5.4 5.4"><circle cx="2.7" cy="2.7" r="2.65" fill="#6f7782"/><path d="M2.7 1.3V2.8L3.7 3.5" stroke="#fff" stroke-width="0.55" fill="none"/></svg>
<div class="t" style="left:781.00px;top:371.00px;font-size:5.5px;color:#8d929a;font-weight:400;-webkit-text-stroke:0.13px #8d929a;letter-spacing:-0.004px;">S 132 Fana - Rå</div>
<div class="r" style="left:865.10px;top:363.80px;width:0.50px;height:17.00px;background:#eef0f3;"></div>
<svg style="position:absolute;left:873.00px;top:370.05px;" width="5.4" height="5.4" viewBox="0 0 5.4 5.4"><circle cx="2.7" cy="2.7" r="2.65" fill="#6f7782"/><path d="M2.7 1.3V2.8L3.7 3.5" stroke="#fff" stroke-width="0.55" fill="none"/></svg>
<svg style="position:absolute;left:883.00px;top:368.60px;" width="5.7" height="8.3" viewBox="0 0 5.7 8.3"><path d="M2.85 0.5 L5.2 2.2 V6.1 L2.85 7.8 L0.5 6.1 V2.2 Z" fill="none" stroke="#a3a7ae" stroke-width="0.7" stroke-linejoin="round"/><path d="M0.8 4.15 H4.9" stroke="#a3a7ae" stroke-width="0.8"/></svg>
<div class="t" style="left:892.00px;top:371.00px;font-size:5.5px;color:#8d929a;font-weight:400;-webkit-text-stroke:0.13px #8d929a;letter-spacing:-0.166px;">Rå</div>
<div class="r" style="left:767.00px;top:381.95px;width:199.50px;height:19.15px;background:#ffffff;border-top:0.6px solid #eef0f3"></div>
<div class="t" style="left:776.00px;top:390.00px;font-size:5.5px;color:#2b3866;font-weight:700;letter-spacing:0.027px;">S 132 Fana - Ravneberget</div>
<svg style="position:absolute;left:874.90px;top:387.75px;" width="5.7" height="8.3" viewBox="0 0 5.7 8.3"><path d="M2.85 0.5 L5.2 2.2 V6.1 L2.85 7.8 L0.5 6.1 V2.2 Z" fill="none" stroke="#2b3660" stroke-width="0.9" stroke-linejoin="round"/><path d="M0.8 4.15 H4.9" stroke="#2b3660" stroke-width="1.0"/></svg>
<div class="t" style="left:884.40px;top:390.00px;font-size:5.5px;color:#2b3866;font-weight:700;letter-spacing:0.025px;">Ravneberget</div>
<div class="r" style="left:767.00px;top:401.10px;width:199.50px;height:19.15px;background:#f6f7f9;border-top:0.6px solid #eef0f3"></div>
<div class="t" style="left:776.00px;top:409.00px;font-size:5.5px;color:#2b3866;font-weight:700;letter-spacing:-0.039px;">S 132 Fana - Os 1</div>
<svg style="position:absolute;left:874.90px;top:406.90px;" width="5.7" height="8.3" viewBox="0 0 5.7 8.3"><path d="M2.85 0.5 L5.2 2.2 V6.1 L2.85 7.8 L0.5 6.1 V2.2 Z" fill="none" stroke="#2b3660" stroke-width="0.9" stroke-linejoin="round"/><path d="M0.8 4.15 H4.9" stroke="#2b3660" stroke-width="1.0"/></svg>
<div class="t" style="left:884.40px;top:409.00px;font-size:5.5px;color:#2b3866;font-weight:700;letter-spacing:-0.259px;">Os 1</div>
<svg style="position:absolute;left:0;top:0" width="981" height="415" viewBox="0 0 981 415"><path d="M442.0 273.9 L442.5 270.0 L443.0 273.8 L443.5 273.7 L444.0 273.9 L444.5 273.8 L445.0 273.5 L445.5 273.9 L446.0 273.3 L446.5 272.8 L447.0 273.7 L447.5 273.2 L448.0 273.5 L448.5 273.6 L449.0 272.6 L449.5 269.5 L450.0 273.9 L450.5 273.6 L451.0 272.1 L451.5 273.1 L452.0 273.9 L452.5 273.8 L453.0 272.6 L453.5 273.9 L454.0 273.4 L454.5 274.1 L455.0 273.6 L455.5 273.9 L456.0 273.8 L456.5 274.0 L457.0 270.0 L457.5 274.1 L458.0 273.1 L458.5 272.6 L459.0 273.0 L459.5 272.6 L460.0 273.3 L460.5 273.6 L461.0 273.4 L461.5 271.6 L462.0 271.5 L462.5 271.4 L463.0 271.3 L463.5 271.4 L464.0 270.6 L464.5 271.1 L465.0 270.0 L465.5 272.3 L466.0 273.3 L466.5 272.4 L467.0 272.1 L467.5 273.2 L468.0 273.3 L468.5 273.0 L469.0 273.5 L469.5 273.1 L470.0 272.5 L470.5 271.5 L471.0 273.2 L471.5 273.1 L472.0 272.4 L472.5 271.3 L473.0 271.0 L473.5 272.9 L474.0 267.8 L474.5 270.9 L475.0 266.2 L475.5 269.2 L476.0 267.3 L476.5 265.1 L477.0 262.2 L477.5 259.3 L478.0 255.9 L478.5 255.1 L479.0 258.3 L479.5 261.5 L480.0 264.8 L480.5 267.7 L481.0 270.8 L481.5 271.1 L482.0 271.5 L482.5 272.6 L483.0 273.9 L483.5 271.3 L484.0 269.6 L484.5 269.6 L485.0 272.7 L485.5 272.7 L486.0 272.9 L486.5 273.2 L487.0 272.0 L487.5 272.1 L488.0 271.1 L488.5 272.8 L489.0 271.6 L489.5 273.0 L490.0 272.7 L490.5 272.4 L491.0 271.6 L491.5 271.1 L492.0 272.4 L492.5 272.0 L493.0 271.0 L493.5 267.7 L494.0 270.8 L494.5 269.7 L495.0 271.9 L495.5 271.6 L496.0 271.6 L496.5 268.4 L497.0 273.0 L497.5 272.9 L498.0 272.7 L498.5 272.3 L499.0 272.9 L499.5 272.4 L500.0 273.7 L500.5 272.0 L501.0 272.4 L501.5 273.1 L502.0 272.7 L502.5 272.9 L503.0 272.5 L503.5 272.0 L504.0 271.8 L504.5 272.8 L505.0 272.8 L505.5 272.7 L506.0 271.9 L506.5 273.5 L507.0 272.7 L507.5 273.2 L508.0 268.1 L508.5 270.9 L509.0 272.2 L509.5 273.1 L510.0 272.9 L510.5 272.4 L511.0 273.1 L511.5 272.7 L512.0 272.5 L512.5 271.4 L513.0 272.8 L513.5 270.5 L514.0 271.7 L514.5 270.2 L515.0 271.2 L515.5 272.6 L516.0 272.5 L516.5 272.9 L517.0 272.3 L517.5 271.9 L518.0 272.6 L518.5 267.9 L519.0 272.2 L519.5 272.2 L520.0 268.6 L520.5 272.1 L521.0 270.3 L521.5 272.3 L522.0 272.0 L522.5 271.9 L523.0 268.9 L523.5 270.1 L524.0 271.8 L524.5 271.7 L525.0 272.5 L525.5 272.4 L526.0 271.5 L526.5 270.7 L527.0 272.2 L527.5 270.7 L528.0 271.3 L528.5 271.8 L529.0 271.4 L529.5 272.1 L530.0 271.7 L530.5 272.0 L531.0 271.6 L531.5 271.2 L532.0 272.1 L532.5 269.8 L533.0 270.3 L533.5 267.4 L534.0 271.1 L534.5 271.7 L535.0 271.6 L535.5 272.0 L536.0 271.6 L536.5 272.0 L537.0 272.2 L537.5 272.4 L538.0 271.2 L538.5 272.1 L539.0 271.3 L539.5 272.1 L540.0 272.4 L540.5 272.4 L541.0 272.2 L541.5 270.6 L542.0 271.9 L542.5 270.5 L543.0 271.9 L543.5 271.6 L544.0 271.2 L544.5 266.2 L545.0 269.1 L545.5 269.3 L546.0 270.5 L546.5 269.9 L547.0 271.0 L547.5 272.2 L548.0 270.4 L548.5 272.4 L549.0 270.1 L549.5 272.3 L550.0 272.2 L550.5 271.6 L551.0 271.2 L551.5 272.0 L552.0 271.7 L552.5 270.1 L553.0 266.7 L553.5 272.2 L554.0 272.2 L554.5 267.8 L555.0 272.4 L555.5 271.9 L556.0 271.7 L556.5 271.6 L557.0 270.7 L557.5 270.2 L558.0 269.8 L558.5 269.7 L559.0 270.8 L559.5 271.6 L560.0 272.3 L560.5 271.9 L561.0 271.8 L561.5 270.8 L562.0 270.0 L562.5 272.1 L563.0 271.6 L563.5 267.5 L564.0 271.8 L564.5 267.9 L565.0 270.4 L565.5 271.9 L566.0 271.3 L566.5 271.9 L567.0 270.8 L567.5 271.2 L568.0 270.2 L568.5 271.1 L569.0 271.6 L569.5 271.0 L570.0 269.9 L570.5 270.9 L571.0 271.0 L571.5 270.7 L572.0 270.9 L572.5 270.5 L573.0 269.7 L573.5 270.8 L574.0 270.8 L574.5 271.2 L575.0 270.6 L575.5 270.5 L576.0 270.9 L576.5 270.0 L577.0 271.1 L577.5 270.0 L578.0 271.0 L578.5 270.4 L579.0 270.6 L579.5 271.5 L580.0 270.5 L580.5 270.7 L581.0 269.9 L581.5 271.1 L582.0 271.7 L582.5 271.8 L583.0 271.0 L583.5 272.1 L584.0 271.6 L584.5 272.3 L585.0 272.0 L585.5 272.6 L586.0 271.3 L586.5 271.7 L587.0 271.3 L587.5 272.3 L588.0 272.3 L588.5 271.3 L589.0 271.2 L589.5 270.7 L590.0 271.4 L590.5 272.1 L591.0 266.0 L591.5 271.7 L592.0 271.5 L592.5 271.6 L593.0 270.5 L593.5 270.2 L594.0 269.7 L594.5 270.8 L595.0 270.5 L595.5 269.7 L596.0 270.0 L596.5 266.3 L597.0 269.8 L597.5 270.2 L598.0 270.6 L598.5 270.5 L599.0 270.6 L599.5 270.9 L600.0 269.8 L600.5 271.3 L601.0 270.5 L601.5 271.7 L602.0 268.1 L602.5 270.5 L603.0 272.6 L603.5 272.5 L604.0 272.1 L604.5 266.6 L605.0 273.2 L605.5 271.5 L606.0 271.8 L606.5 272.1 L607.0 271.5 L607.5 272.2 L608.0 271.3 L608.5 272.3 L609.0 269.1 L609.5 272.7 L610.0 272.5 L610.5 271.7 L611.0 271.5 L611.5 273.0 L612.0 273.3 L612.5 272.3 L613.0 272.3 L613.5 272.7 L614.0 272.3 L614.5 273.3 L615.0 272.5 L615.5 272.7 L616.0 273.3 L616.5 271.0 L617.0 273.3 L617.5 273.0 L618.0 271.7 L618.5 271.7 L619.0 270.5 L619.5 272.9 L620.0 273.6 L620.5 273.7 L621.0 272.3 L621.5 273.2 L622.0 273.7 L622.5 273.1 L623.0 272.8 L623.5 272.2 L624.0 273.0 L624.5 272.0 L625.0 272.9 L625.5 272.2 L626.0 271.0 L626.5 273.0 L627.0 270.6 L627.5 272.8 L628.0 272.6 L628.5 271.7 L629.0 272.3 L629.5 272.0 L630.0 272.6 L630.5 271.0 L631.0 272.0 L631.5 269.9 L632.0 270.8 L632.5 266.6 L633.0 269.5 L633.5 269.2 L634.0 269.7 L634.5 272.2 L635.0 272.7 L635.5 268.8 L636.0 271.7 L636.5 271.6 L637.0 272.7 L637.5 271.6 L638.0 271.6 L638.5 271.6 L639.0 272.7 L639.5 270.4 L640.0 270.2 L640.5 271.9 L641.0 272.0 L641.5 272.0 L642.0 272.1 L642.5 271.9 L643.0 271.7 L643.5 271.5 L644.0 271.9 L644.5 271.4 L645.0 271.7 L645.5 270.8 L646.0 272.1 L646.5 271.4 L647.0 271.2 L647.5 270.5 L648.0 271.3 L648.5 271.8 L649.0 271.3 L649.5 271.1 L650.0 271.9 L650.5 272.0 L651.0 270.9 L651.5 271.1 L652.0 270.6 L652.5 269.4 L653.0 270.5 L653.5 271.1 L654.0 265.6 L654.5 271.4 L655.0 270.8 L655.5 271.1 L656.0 271.6 L656.5 271.4 L657.0 271.5 L657.5 271.6 L658.0 271.1 L658.5 271.7 L659.0 272.2 L659.5 269.7 L660.0 267.9 L660.5 271.2 L661.0 272.3 L661.5 272.0 L662.0 271.9 L662.5 271.2 L663.0 272.2 L663.5 271.1 L664.0 270.3 L664.5 271.9 L665.0 271.5 L665.5 270.8 L666.0 272.3 L666.5 272.3 L667.0 271.6 L667.5 272.2 L668.0 272.0 L668.5 272.2 L669.0 271.7 L669.5 271.7 L670.0 270.4 L670.5 272.4 L671.0 271.2 L671.5 271.9 L672.0 272.1 L672.5 271.9 L673.0 271.6 L673.5 271.3 L674.0 271.1 L674.5 271.3 L675.0 270.6 L675.5 271.4 L676.0 271.8 L676.5 268.3 L677.0 263.5 L677.5 264.2 L678.0 259.9 L678.5 262.9 L679.0 265.8 L679.5 266.2 L680.0 270.2 L680.5 271.4 L681.0 271.0 L681.5 271.2 L682.0 271.2 L682.5 271.5 L683.0 271.2 L683.5 270.2 L684.0 270.9 L684.5 270.7 L685.0 271.0 L685.5 269.7 L686.0 271.0 L686.5 270.7 L687.0 269.8 L687.5 268.1 L688.0 267.4 L688.5 265.9 L689.0 264.5 L689.5 263.0 L690.0 265.1 L690.5 267.2 L691.0 268.4 L691.5 270.0 L692.0 270.1 L692.5 271.9 L693.0 272.6 L693.5 272.8 L694.0 272.4 L694.5 271.7 L695.0 272.3 L695.5 272.2 L696.0 270.6 L696.5 272.1 L697.0 271.2 L697.5 270.4 L698.0 270.9 L698.5 271.5 L699.0 271.1 L699.5 271.6 L700.0 271.8 L700.5 271.8 L701.0 270.4 L701.5 271.9 L702.0 270.6 L702.5 267.7 L703.0 271.8 L703.5 271.0 L704.0 271.1 L704.5 270.1 L705.0 271.9 L705.5 271.3 L706.0 271.5 L706.5 271.8 L707.0 271.5 L707.5 271.0 L708.0 271.6 L708.5 271.6 L709.0 271.3 L709.5 270.8 L710.0 271.6 L710.5 267.6 L711.0 271.7 L711.5 271.7 L712.0 271.7 L712.5 271.8 L713.0 270.8 L713.5 269.7 L714.0 271.7 L714.5 271.5 L715.0 270.8 L715.5 271.4 L716.0 271.0 L716.5 271.0 L717.0 270.7 L717.5 270.4 L718.0 270.9 L718.5 271.9 L719.0 271.6 L719.5 271.6 L720.0 271.4 L720.5 271.1 L721.0 271.6 L721.5 271.6 L722.0 271.9 L722.5 272.6 L723.0 271.4 L723.5 272.3 L724.0 271.5 L724.5 272.1 L725.0 272.4 L725.5 272.1 L726.0 270.5 L726.5 267.9 L727.0 270.5 L727.5 271.2 L728.0 271.2 L728.5 271.1 L729.0 270.1 L729.5 270.5 L730.0 269.0 L730.5 270.1 L731.0 270.8 L731.5 269.4 L732.0 270.7 L732.5 270.3 L733.0 268.4 L733.5 268.8 L734.0 270.0 L734.5 269.8 L735.0 269.6 L735.5 267.4 L736.0 269.4 L736.5 269.1 L737.0 268.3 L737.5 267.5 L738.0 268.1 L738.5 265.9 L738.5 281.9 L738.0 281.8 L737.5 282.0 L737.0 281.9 L736.5 284.5 L736.0 281.6 L735.5 281.8 L735.0 282.1 L734.5 282.8 L734.0 282.2 L733.5 282.6 L733.0 283.3 L732.5 283.3 L732.0 284.6 L731.5 283.9 L731.0 284.3 L730.5 282.9 L730.0 284.2 L729.5 284.8 L729.0 285.2 L728.5 283.8 L728.0 283.4 L727.5 283.8 L727.0 284.1 L726.5 283.8 L726.0 284.2 L725.5 290.3 L725.0 285.3 L724.5 284.6 L724.0 285.1 L723.5 284.7 L723.0 285.8 L722.5 285.8 L722.0 285.5 L721.5 285.4 L721.0 285.9 L720.5 285.3 L720.0 286.2 L719.5 284.3 L719.0 284.4 L718.5 284.4 L718.0 284.4 L717.5 285.1 L717.0 284.5 L716.5 284.0 L716.0 284.1 L715.5 285.9 L715.0 283.8 L714.5 284.6 L714.0 285.0 L713.5 285.2 L713.0 284.8 L712.5 285.4 L712.0 285.1 L711.5 284.1 L711.0 283.9 L710.5 284.5 L710.0 283.9 L709.5 284.6 L709.0 283.8 L708.5 284.6 L708.0 284.3 L707.5 288.0 L707.0 285.4 L706.5 285.3 L706.0 284.9 L705.5 285.7 L705.0 284.1 L704.5 284.6 L704.0 285.4 L703.5 284.8 L703.0 284.7 L702.5 283.9 L702.0 284.2 L701.5 285.5 L701.0 284.4 L700.5 284.2 L700.0 285.3 L699.5 284.8 L699.0 284.9 L698.5 285.1 L698.0 285.0 L697.5 284.9 L697.0 284.6 L696.5 285.0 L696.0 286.6 L695.5 285.0 L695.0 285.6 L694.5 285.6 L694.0 286.2 L693.5 285.9 L693.0 284.9 L692.5 284.2 L692.0 283.3 L691.5 283.2 L691.0 283.2 L690.5 280.1 L690.0 279.3 L689.5 277.3 L689.0 278.8 L688.5 280.2 L688.0 283.7 L687.5 282.3 L687.0 281.9 L686.5 283.3 L686.0 284.0 L685.5 284.3 L685.0 285.1 L684.5 284.7 L684.0 284.1 L683.5 283.7 L683.0 284.0 L682.5 284.5 L682.0 285.6 L681.5 284.2 L681.0 284.5 L680.5 285.2 L680.0 284.1 L679.5 280.5 L679.0 280.1 L678.5 277.1 L678.0 276.6 L677.5 278.5 L677.0 280.7 L676.5 282.2 L676.0 284.6 L675.5 284.4 L675.0 284.4 L674.5 285.8 L674.0 285.4 L673.5 284.3 L673.0 285.6 L672.5 284.6 L672.0 286.1 L671.5 284.6 L671.0 285.1 L670.5 284.8 L670.0 286.2 L669.5 284.5 L669.0 284.8 L668.5 284.8 L668.0 285.0 L667.5 284.7 L667.0 284.5 L666.5 284.3 L666.0 285.1 L665.5 287.0 L665.0 286.5 L664.5 284.3 L664.0 285.1 L663.5 285.2 L663.0 285.3 L662.5 284.5 L662.0 284.7 L661.5 284.8 L661.0 285.9 L660.5 284.7 L660.0 285.9 L659.5 284.5 L659.0 285.0 L658.5 284.8 L658.0 285.4 L657.5 286.4 L657.0 284.3 L656.5 285.6 L656.0 284.9 L655.5 285.7 L655.0 284.1 L654.5 285.4 L654.0 284.7 L653.5 284.6 L653.0 284.4 L652.5 284.6 L652.0 284.4 L651.5 284.8 L651.0 284.3 L650.5 284.1 L650.0 285.8 L649.5 284.3 L649.0 285.5 L648.5 285.9 L648.0 284.6 L647.5 284.4 L647.0 284.7 L646.5 285.3 L646.0 285.0 L645.5 285.6 L645.0 285.6 L644.5 284.5 L644.0 284.5 L643.5 285.7 L643.0 284.7 L642.5 285.0 L642.0 285.1 L641.5 288.8 L641.0 284.6 L640.5 284.9 L640.0 285.2 L639.5 285.4 L639.0 285.6 L638.5 286.7 L638.0 286.9 L637.5 285.5 L637.0 285.2 L636.5 285.2 L636.0 285.3 L635.5 285.0 L635.0 285.2 L634.5 284.4 L634.0 284.5 L633.5 283.9 L633.0 283.0 L632.5 283.9 L632.0 283.8 L631.5 283.7 L631.0 284.2 L630.5 284.3 L630.0 285.3 L629.5 285.0 L629.0 284.9 L628.5 285.2 L628.0 289.3 L627.5 288.5 L627.0 285.0 L626.5 285.0 L626.0 285.9 L625.5 286.1 L625.0 285.9 L624.5 286.6 L624.0 285.8 L623.5 286.4 L623.0 286.4 L622.5 286.0 L622.0 285.8 L621.5 286.3 L621.0 286.7 L620.5 285.9 L620.0 287.5 L619.5 287.7 L619.0 290.0 L618.5 286.2 L618.0 287.5 L617.5 285.9 L617.0 285.6 L616.5 285.4 L616.0 286.5 L615.5 286.1 L615.0 289.3 L614.5 286.4 L614.0 286.0 L613.5 285.9 L613.0 286.1 L612.5 285.3 L612.0 287.0 L611.5 286.5 L611.0 285.8 L610.5 286.2 L610.0 287.2 L609.5 286.1 L609.0 286.0 L608.5 286.4 L608.0 285.5 L607.5 285.8 L607.0 285.9 L606.5 286.0 L606.0 285.8 L605.5 285.6 L605.0 285.6 L604.5 285.2 L604.0 286.4 L603.5 285.4 L603.0 285.4 L602.5 289.7 L602.0 284.2 L601.5 284.2 L601.0 283.5 L600.5 283.9 L600.0 285.2 L599.5 283.5 L599.0 283.9 L598.5 283.0 L598.0 283.5 L597.5 284.0 L597.0 283.7 L596.5 283.9 L596.0 284.6 L595.5 283.7 L595.0 283.3 L594.5 283.8 L594.0 283.7 L593.5 284.7 L593.0 287.2 L592.5 284.7 L592.0 283.9 L591.5 284.9 L591.0 284.5 L590.5 284.6 L590.0 284.4 L589.5 285.9 L589.0 286.2 L588.5 285.4 L588.0 286.2 L587.5 284.8 L587.0 289.5 L586.5 286.4 L586.0 285.2 L585.5 284.6 L585.0 285.0 L584.5 284.9 L584.0 286.2 L583.5 284.7 L583.0 285.6 L582.5 284.5 L582.0 284.8 L581.5 285.2 L581.0 286.2 L580.5 284.3 L580.0 284.0 L579.5 285.0 L579.0 284.1 L578.5 283.9 L578.0 284.4 L577.5 284.2 L577.0 285.0 L576.5 284.5 L576.0 283.8 L575.5 284.4 L575.0 284.2 L574.5 284.8 L574.0 284.7 L573.5 285.2 L573.0 283.6 L572.5 284.0 L572.0 285.4 L571.5 284.0 L571.0 284.5 L570.5 284.7 L570.0 283.9 L569.5 285.2 L569.0 283.8 L568.5 284.6 L568.0 284.7 L567.5 284.2 L567.0 285.5 L566.5 285.8 L566.0 283.9 L565.5 284.2 L565.0 284.7 L564.5 284.9 L564.0 285.7 L563.5 284.5 L563.0 284.8 L562.5 285.3 L562.0 285.5 L561.5 285.2 L561.0 285.9 L560.5 284.6 L560.0 284.5 L559.5 284.2 L559.0 285.4 L558.5 284.4 L558.0 283.0 L557.5 282.9 L557.0 287.0 L556.5 284.1 L556.0 286.3 L555.5 284.4 L555.0 285.5 L554.5 284.7 L554.0 284.9 L553.5 284.8 L553.0 285.0 L552.5 285.6 L552.0 285.3 L551.5 285.9 L551.0 285.2 L550.5 286.0 L550.0 285.8 L549.5 285.3 L549.0 284.5 L548.5 284.9 L548.0 286.7 L547.5 284.3 L547.0 284.4 L546.5 284.6 L546.0 284.3 L545.5 283.9 L545.0 284.5 L544.5 283.8 L544.0 283.9 L543.5 283.9 L543.0 284.7 L542.5 285.4 L542.0 284.5 L541.5 284.7 L541.0 284.4 L540.5 285.2 L540.0 286.3 L539.5 285.9 L539.0 285.1 L538.5 285.5 L538.0 288.3 L537.5 285.0 L537.0 285.0 L536.5 284.6 L536.0 284.9 L535.5 287.2 L535.0 285.3 L534.5 285.0 L534.0 286.3 L533.5 285.1 L533.0 284.6 L532.5 285.0 L532.0 285.8 L531.5 285.3 L531.0 285.4 L530.5 284.9 L530.0 284.6 L529.5 284.6 L529.0 285.4 L528.5 284.7 L528.0 284.8 L527.5 285.5 L527.0 284.6 L526.5 285.4 L526.0 286.5 L525.5 284.7 L525.0 285.1 L524.5 285.9 L524.0 285.4 L523.5 287.1 L523.0 285.1 L522.5 284.8 L522.0 286.4 L521.5 285.4 L521.0 285.5 L520.5 285.0 L520.0 285.6 L519.5 286.3 L519.0 285.2 L518.5 284.9 L518.0 289.3 L517.5 286.0 L517.0 285.0 L516.5 285.1 L516.0 285.8 L515.5 289.4 L515.0 286.3 L514.5 285.1 L514.0 287.2 L513.5 285.6 L513.0 285.7 L512.5 285.7 L512.0 286.0 L511.5 289.8 L511.0 285.3 L510.5 285.2 L510.0 286.3 L509.5 289.3 L509.0 286.5 L508.5 285.8 L508.0 285.6 L507.5 286.9 L507.0 285.5 L506.5 287.3 L506.0 285.8 L505.5 290.8 L505.0 285.7 L504.5 285.5 L504.0 285.5 L503.5 286.8 L503.0 285.0 L502.5 287.8 L502.0 285.5 L501.5 285.6 L501.0 285.4 L500.5 285.5 L500.0 286.0 L499.5 287.2 L499.0 285.5 L498.5 286.0 L498.0 286.2 L497.5 286.0 L497.0 285.7 L496.5 285.8 L496.0 284.8 L495.5 288.3 L495.0 284.5 L494.5 284.5 L494.0 286.5 L493.5 286.5 L493.0 284.2 L492.5 285.0 L492.0 288.8 L491.5 284.7 L491.0 284.6 L490.5 284.7 L490.0 285.1 L489.5 285.4 L489.0 285.4 L488.5 285.6 L488.0 286.1 L487.5 287.1 L487.0 286.1 L486.5 285.4 L486.0 287.4 L485.5 286.5 L485.0 289.6 L484.5 286.0 L484.0 286.7 L483.5 287.3 L483.0 287.3 L482.5 286.7 L482.0 285.8 L481.5 285.3 L481.0 286.8 L480.5 282.7 L480.0 279.1 L479.5 275.8 L479.0 272.6 L478.5 269.4 L478.0 270.1 L477.5 273.6 L477.0 276.5 L476.5 279.4 L476.0 282.6 L475.5 283.8 L475.0 283.2 L474.5 286.6 L474.0 285.2 L473.5 288.7 L473.0 285.1 L472.5 285.6 L472.0 286.6 L471.5 286.8 L471.0 285.9 L470.5 286.3 L470.0 286.0 L469.5 286.6 L469.0 286.8 L468.5 286.6 L468.0 286.8 L467.5 287.3 L467.0 288.8 L466.5 287.3 L466.0 286.3 L465.5 284.8 L465.0 284.9 L464.5 284.2 L464.0 285.3 L463.5 284.4 L463.0 284.4 L462.5 285.3 L462.0 285.6 L461.5 285.8 L461.0 286.2 L460.5 288.8 L460.0 286.2 L459.5 289.8 L459.0 289.0 L458.5 287.9 L458.0 287.4 L457.5 286.3 L457.0 286.7 L456.5 286.5 L456.0 286.5 L455.5 286.5 L455.0 286.1 L454.5 286.2 L454.0 286.8 L453.5 287.6 L453.0 286.6 L452.5 287.2 L452.0 286.8 L451.5 287.5 L451.0 286.8 L450.5 287.8 L450.0 286.6 L449.5 287.3 L449.0 286.7 L448.5 287.5 L448.0 286.7 L447.5 287.7 L447.0 286.1 L446.5 288.3 L446.0 286.3 L445.5 286.6 L445.0 286.9 L444.5 286.8 L444.0 286.1 L443.5 287.9 L443.0 286.3 L442.5 287.3 L442.0 286.6 Z" fill="#d0eef2" /><rect x="494.6" y="251.7" width="10.9" height="54.8" fill="#ebe9f8" stroke="#aaa4d8" stroke-width="0.6"/><rect x="501.8" y="251.7" width="3.7" height="54.8" fill="#cfcbee" stroke="#aaa4d8" stroke-width="0.5"/><rect x="546.4" y="249.6" width="3.6" height="56.9" fill="#e9f6e6" stroke="#93c98c" stroke-width="0.7"/><rect x="595.5" y="249.6" width="9.2" height="56.9" fill="#f9dde0" stroke="#d98f98" stroke-width="0.7"/><path d="M442.0 273.9 L442.5 270.0 L443.0 273.8 L443.5 273.7 L444.0 273.9 L444.5 273.8 L445.0 273.5 L445.5 273.9 L446.0 273.3 L446.5 272.8 L447.0 273.7 L447.5 273.2 L448.0 273.5 L448.5 273.6 L449.0 272.6 L449.5 269.5 L450.0 273.9 L450.5 273.6 L451.0 272.1 L451.5 273.1 L452.0 273.9 L452.5 273.8 L453.0 272.6 L453.5 273.9 L454.0 273.4 L454.5 274.1 L455.0 273.6 L455.5 273.9 L456.0 273.8 L456.5 274.0 L457.0 270.0 L457.5 274.1 L458.0 273.1 L458.5 272.6 L459.0 273.0 L459.5 272.6 L460.0 273.3 L460.5 273.6 L461.0 273.4 L461.5 271.6 L462.0 271.5 L462.5 271.4 L463.0 271.3 L463.5 271.4 L464.0 270.6 L464.5 271.1 L465.0 270.0 L465.5 272.3 L466.0 273.3 L466.5 272.4 L467.0 272.1 L467.5 273.2 L468.0 273.3 L468.5 273.0 L469.0 273.5 L469.5 273.1 L470.0 272.5 L470.5 271.5 L471.0 273.2 L471.5 273.1 L472.0 272.4 L472.5 271.3 L473.0 271.0 L473.5 272.9 L474.0 267.8 L474.5 270.9 L475.0 266.2 L475.5 269.2 L476.0 267.3 L476.5 265.1 L477.0 262.2 L477.5 259.3 L478.0 255.9 L478.5 255.1 L479.0 258.3 L479.5 261.5 L480.0 264.8 L480.5 267.7 L481.0 270.8 L481.5 271.1 L482.0 271.5 L482.5 272.6 L483.0 273.9 L483.5 271.3 L484.0 269.6 L484.5 269.6 L485.0 272.7 L485.5 272.7 L486.0 272.9 L486.5 273.2 L487.0 272.0 L487.5 272.1 L488.0 271.1 L488.5 272.8 L489.0 271.6 L489.5 273.0 L490.0 272.7 L490.5 272.4 L491.0 271.6 L491.5 271.1 L492.0 272.4 L492.5 272.0 L493.0 271.0 L493.5 267.7 L494.0 270.8 L494.5 269.7 L495.0 271.9 L495.5 271.6 L496.0 271.6 L496.5 268.4 L497.0 273.0 L497.5 272.9 L498.0 272.7 L498.5 272.3 L499.0 272.9 L499.5 272.4 L500.0 273.7 L500.5 272.0 L501.0 272.4 L501.5 273.1 L502.0 272.7 L502.5 272.9 L503.0 272.5 L503.5 272.0 L504.0 271.8 L504.5 272.8 L505.0 272.8 L505.5 272.7 L506.0 271.9 L506.5 273.5 L507.0 272.7 L507.5 273.2 L508.0 268.1 L508.5 270.9 L509.0 272.2 L509.5 273.1 L510.0 272.9 L510.5 272.4 L511.0 273.1 L511.5 272.7 L512.0 272.5 L512.5 271.4 L513.0 272.8 L513.5 270.5 L514.0 271.7 L514.5 270.2 L515.0 271.2 L515.5 272.6 L516.0 272.5 L516.5 272.9 L517.0 272.3 L517.5 271.9 L518.0 272.6 L518.5 267.9 L519.0 272.2 L519.5 272.2 L520.0 268.6 L520.5 272.1 L521.0 270.3 L521.5 272.3 L522.0 272.0 L522.5 271.9 L523.0 268.9 L523.5 270.1 L524.0 271.8 L524.5 271.7 L525.0 272.5 L525.5 272.4 L526.0 271.5 L526.5 270.7 L527.0 272.2 L527.5 270.7 L528.0 271.3 L528.5 271.8 L529.0 271.4 L529.5 272.1 L530.0 271.7 L530.5 272.0 L531.0 271.6 L531.5 271.2 L532.0 272.1 L532.5 269.8 L533.0 270.3 L533.5 267.4 L534.0 271.1 L534.5 271.7 L535.0 271.6 L535.5 272.0 L536.0 271.6 L536.5 272.0 L537.0 272.2 L537.5 272.4 L538.0 271.2 L538.5 272.1 L539.0 271.3 L539.5 272.1 L540.0 272.4 L540.5 272.4 L541.0 272.2 L541.5 270.6 L542.0 271.9 L542.5 270.5 L543.0 271.9 L543.5 271.6 L544.0 271.2 L544.5 266.2 L545.0 269.1 L545.5 269.3 L546.0 270.5 L546.5 269.9 L547.0 271.0 L547.5 272.2 L548.0 270.4 L548.5 272.4 L549.0 270.1 L549.5 272.3 L550.0 272.2 L550.5 271.6 L551.0 271.2 L551.5 272.0 L552.0 271.7 L552.5 270.1 L553.0 266.7 L553.5 272.2 L554.0 272.2 L554.5 267.8 L555.0 272.4 L555.5 271.9 L556.0 271.7 L556.5 271.6 L557.0 270.7 L557.5 270.2 L558.0 269.8 L558.5 269.7 L559.0 270.8 L559.5 271.6 L560.0 272.3 L560.5 271.9 L561.0 271.8 L561.5 270.8 L562.0 270.0 L562.5 272.1 L563.0 271.6 L563.5 267.5 L564.0 271.8 L564.5 267.9 L565.0 270.4 L565.5 271.9 L566.0 271.3 L566.5 271.9 L567.0 270.8 L567.5 271.2 L568.0 270.2 L568.5 271.1 L569.0 271.6 L569.5 271.0 L570.0 269.9 L570.5 270.9 L571.0 271.0 L571.5 270.7 L572.0 270.9 L572.5 270.5 L573.0 269.7 L573.5 270.8 L574.0 270.8 L574.5 271.2 L575.0 270.6 L575.5 270.5 L576.0 270.9 L576.5 270.0 L577.0 271.1 L577.5 270.0 L578.0 271.0 L578.5 270.4 L579.0 270.6 L579.5 271.5 L580.0 270.5 L580.5 270.7 L581.0 269.9 L581.5 271.1 L582.0 271.7 L582.5 271.8 L583.0 271.0 L583.5 272.1 L584.0 271.6 L584.5 272.3 L585.0 272.0 L585.5 272.6 L586.0 271.3 L586.5 271.7 L587.0 271.3 L587.5 272.3 L588.0 272.3 L588.5 271.3 L589.0 271.2 L589.5 270.7 L590.0 271.4 L590.5 272.1 L591.0 266.0 L591.5 271.7 L592.0 271.5 L592.5 271.6 L593.0 270.5 L593.5 270.2 L594.0 269.7 L594.5 270.8 L595.0 270.5 L595.5 269.7 L596.0 270.0 L596.5 266.3 L597.0 269.8 L597.5 270.2 L598.0 270.6 L598.5 270.5 L599.0 270.6 L599.5 270.9 L600.0 269.8 L600.5 271.3 L601.0 270.5 L601.5 271.7 L602.0 268.1 L602.5 270.5 L603.0 272.6 L603.5 272.5 L604.0 272.1 L604.5 266.6 L605.0 273.2 L605.5 271.5 L606.0 271.8 L606.5 272.1 L607.0 271.5 L607.5 272.2 L608.0 271.3 L608.5 272.3 L609.0 269.1 L609.5 272.7 L610.0 272.5 L610.5 271.7 L611.0 271.5 L611.5 273.0 L612.0 273.3 L612.5 272.3 L613.0 272.3 L613.5 272.7 L614.0 272.3 L614.5 273.3 L615.0 272.5 L615.5 272.7 L616.0 273.3 L616.5 271.0 L617.0 273.3 L617.5 273.0 L618.0 271.7 L618.5 271.7 L619.0 270.5 L619.5 272.9 L620.0 273.6 L620.5 273.7 L621.0 272.3 L621.5 273.2 L622.0 273.7 L622.5 273.1 L623.0 272.8 L623.5 272.2 L624.0 273.0 L624.5 272.0 L625.0 272.9 L625.5 272.2 L626.0 271.0 L626.5 273.0 L627.0 270.6 L627.5 272.8 L628.0 272.6 L628.5 271.7 L629.0 272.3 L629.5 272.0 L630.0 272.6 L630.5 271.0 L631.0 272.0 L631.5 269.9 L632.0 270.8 L632.5 266.6 L633.0 269.5 L633.5 269.2 L634.0 269.7 L634.5 272.2 L635.0 272.7 L635.5 268.8 L636.0 271.7 L636.5 271.6 L637.0 272.7 L637.5 271.6 L638.0 271.6 L638.5 271.6 L639.0 272.7 L639.5 270.4 L640.0 270.2 L640.5 271.9 L641.0 272.0 L641.5 272.0 L642.0 272.1 L642.5 271.9 L643.0 271.7 L643.5 271.5 L644.0 271.9 L644.5 271.4 L645.0 271.7 L645.5 270.8 L646.0 272.1 L646.5 271.4 L647.0 271.2 L647.5 270.5 L648.0 271.3 L648.5 271.8 L649.0 271.3 L649.5 271.1 L650.0 271.9 L650.5 272.0 L651.0 270.9 L651.5 271.1 L652.0 270.6 L652.5 269.4 L653.0 270.5 L653.5 271.1 L654.0 265.6 L654.5 271.4 L655.0 270.8 L655.5 271.1 L656.0 271.6 L656.5 271.4 L657.0 271.5 L657.5 271.6 L658.0 271.1 L658.5 271.7 L659.0 272.2 L659.5 269.7 L660.0 267.9 L660.5 271.2 L661.0 272.3 L661.5 272.0 L662.0 271.9 L662.5 271.2 L663.0 272.2 L663.5 271.1 L664.0 270.3 L664.5 271.9 L665.0 271.5 L665.5 270.8 L666.0 272.3 L666.5 272.3 L667.0 271.6 L667.5 272.2 L668.0 272.0 L668.5 272.2 L669.0 271.7 L669.5 271.7 L670.0 270.4 L670.5 272.4 L671.0 271.2 L671.5 271.9 L672.0 272.1 L672.5 271.9 L673.0 271.6 L673.5 271.3 L674.0 271.1 L674.5 271.3 L675.0 270.6 L675.5 271.4 L676.0 271.8 L676.5 268.3 L677.0 263.5 L677.5 264.2 L678.0 259.9 L678.5 262.9 L679.0 265.8 L679.5 266.2 L680.0 270.2 L680.5 271.4 L681.0 271.0 L681.5 271.2 L682.0 271.2 L682.5 271.5 L683.0 271.2 L683.5 270.2 L684.0 270.9 L684.5 270.7 L685.0 271.0 L685.5 269.7 L686.0 271.0 L686.5 270.7 L687.0 269.8 L687.5 268.1 L688.0 267.4 L688.5 265.9 L689.0 264.5 L689.5 263.0 L690.0 265.1 L690.5 267.2 L691.0 268.4 L691.5 270.0 L692.0 270.1 L692.5 271.9 L693.0 272.6 L693.5 272.8 L694.0 272.4 L694.5 271.7 L695.0 272.3 L695.5 272.2 L696.0 270.6 L696.5 272.1 L697.0 271.2 L697.5 270.4 L698.0 270.9 L698.5 271.5 L699.0 271.1 L699.5 271.6 L700.0 271.8 L700.5 271.8 L701.0 270.4 L701.5 271.9 L702.0 270.6 L702.5 267.7 L703.0 271.8 L703.5 271.0 L704.0 271.1 L704.5 270.1 L705.0 271.9 L705.5 271.3 L706.0 271.5 L706.5 271.8 L707.0 271.5 L707.5 271.0 L708.0 271.6 L708.5 271.6 L709.0 271.3 L709.5 270.8 L710.0 271.6 L710.5 267.6 L711.0 271.7 L711.5 271.7 L712.0 271.7 L712.5 271.8 L713.0 270.8 L713.5 269.7 L714.0 271.7 L714.5 271.5 L715.0 270.8 L715.5 271.4 L716.0 271.0 L716.5 271.0 L717.0 270.7 L717.5 270.4 L718.0 270.9 L718.5 271.9 L719.0 271.6 L719.5 271.6 L720.0 271.4 L720.5 271.1 L721.0 271.6 L721.5 271.6 L722.0 271.9 L722.5 272.6 L723.0 271.4 L723.5 272.3 L724.0 271.5 L724.5 272.1 L725.0 272.4 L725.5 272.1 L726.0 270.5 L726.5 267.9 L727.0 270.5 L727.5 271.2 L728.0 271.2 L728.5 271.1 L729.0 270.1 L729.5 270.5 L730.0 269.0 L730.5 270.1 L731.0 270.8 L731.5 269.4 L732.0 270.7 L732.5 270.3 L733.0 268.4 L733.5 268.8 L734.0 270.0 L734.5 269.8 L735.0 269.6 L735.5 267.4 L736.0 269.4 L736.5 269.1 L737.0 268.3 L737.5 267.5 L738.0 268.1 L738.5 265.9 L738.5 281.9 L738.0 281.8 L737.5 282.0 L737.0 281.9 L736.5 284.5 L736.0 281.6 L735.5 281.8 L735.0 282.1 L734.5 282.8 L734.0 282.2 L733.5 282.6 L733.0 283.3 L732.5 283.3 L732.0 284.6 L731.5 283.9 L731.0 284.3 L730.5 282.9 L730.0 284.2 L729.5 284.8 L729.0 285.2 L728.5 283.8 L728.0 283.4 L727.5 283.8 L727.0 284.1 L726.5 283.8 L726.0 284.2 L725.5 290.3 L725.0 285.3 L724.5 284.6 L724.0 285.1 L723.5 284.7 L723.0 285.8 L722.5 285.8 L722.0 285.5 L721.5 285.4 L721.0 285.9 L720.5 285.3 L720.0 286.2 L719.5 284.3 L719.0 284.4 L718.5 284.4 L718.0 284.4 L717.5 285.1 L717.0 284.5 L716.5 284.0 L716.0 284.1 L715.5 285.9 L715.0 283.8 L714.5 284.6 L714.0 285.0 L713.5 285.2 L713.0 284.8 L712.5 285.4 L712.0 285.1 L711.5 284.1 L711.0 283.9 L710.5 284.5 L710.0 283.9 L709.5 284.6 L709.0 283.8 L708.5 284.6 L708.0 284.3 L707.5 288.0 L707.0 285.4 L706.5 285.3 L706.0 284.9 L705.5 285.7 L705.0 284.1 L704.5 284.6 L704.0 285.4 L703.5 284.8 L703.0 284.7 L702.5 283.9 L702.0 284.2 L701.5 285.5 L701.0 284.4 L700.5 284.2 L700.0 285.3 L699.5 284.8 L699.0 284.9 L698.5 285.1 L698.0 285.0 L697.5 284.9 L697.0 284.6 L696.5 285.0 L696.0 286.6 L695.5 285.0 L695.0 285.6 L694.5 285.6 L694.0 286.2 L693.5 285.9 L693.0 284.9 L692.5 284.2 L692.0 283.3 L691.5 283.2 L691.0 283.2 L690.5 280.1 L690.0 279.3 L689.5 277.3 L689.0 278.8 L688.5 280.2 L688.0 283.7 L687.5 282.3 L687.0 281.9 L686.5 283.3 L686.0 284.0 L685.5 284.3 L685.0 285.1 L684.5 284.7 L684.0 284.1 L683.5 283.7 L683.0 284.0 L682.5 284.5 L682.0 285.6 L681.5 284.2 L681.0 284.5 L680.5 285.2 L680.0 284.1 L679.5 280.5 L679.0 280.1 L678.5 277.1 L678.0 276.6 L677.5 278.5 L677.0 280.7 L676.5 282.2 L676.0 284.6 L675.5 284.4 L675.0 284.4 L674.5 285.8 L674.0 285.4 L673.5 284.3 L673.0 285.6 L672.5 284.6 L672.0 286.1 L671.5 284.6 L671.0 285.1 L670.5 284.8 L670.0 286.2 L669.5 284.5 L669.0 284.8 L668.5 284.8 L668.0 285.0 L667.5 284.7 L667.0 284.5 L666.5 284.3 L666.0 285.1 L665.5 287.0 L665.0 286.5 L664.5 284.3 L664.0 285.1 L663.5 285.2 L663.0 285.3 L662.5 284.5 L662.0 284.7 L661.5 284.8 L661.0 285.9 L660.5 284.7 L660.0 285.9 L659.5 284.5 L659.0 285.0 L658.5 284.8 L658.0 285.4 L657.5 286.4 L657.0 284.3 L656.5 285.6 L656.0 284.9 L655.5 285.7 L655.0 284.1 L654.5 285.4 L654.0 284.7 L653.5 284.6 L653.0 284.4 L652.5 284.6 L652.0 284.4 L651.5 284.8 L651.0 284.3 L650.5 284.1 L650.0 285.8 L649.5 284.3 L649.0 285.5 L648.5 285.9 L648.0 284.6 L647.5 284.4 L647.0 284.7 L646.5 285.3 L646.0 285.0 L645.5 285.6 L645.0 285.6 L644.5 284.5 L644.0 284.5 L643.5 285.7 L643.0 284.7 L642.5 285.0 L642.0 285.1 L641.5 288.8 L641.0 284.6 L640.5 284.9 L640.0 285.2 L639.5 285.4 L639.0 285.6 L638.5 286.7 L638.0 286.9 L637.5 285.5 L637.0 285.2 L636.5 285.2 L636.0 285.3 L635.5 285.0 L635.0 285.2 L634.5 284.4 L634.0 284.5 L633.5 283.9 L633.0 283.0 L632.5 283.9 L632.0 283.8 L631.5 283.7 L631.0 284.2 L630.5 284.3 L630.0 285.3 L629.5 285.0 L629.0 284.9 L628.5 285.2 L628.0 289.3 L627.5 288.5 L627.0 285.0 L626.5 285.0 L626.0 285.9 L625.5 286.1 L625.0 285.9 L624.5 286.6 L624.0 285.8 L623.5 286.4 L623.0 286.4 L622.5 286.0 L622.0 285.8 L621.5 286.3 L621.0 286.7 L620.5 285.9 L620.0 287.5 L619.5 287.7 L619.0 290.0 L618.5 286.2 L618.0 287.5 L617.5 285.9 L617.0 285.6 L616.5 285.4 L616.0 286.5 L615.5 286.1 L615.0 289.3 L614.5 286.4 L614.0 286.0 L613.5 285.9 L613.0 286.1 L612.5 285.3 L612.0 287.0 L611.5 286.5 L611.0 285.8 L610.5 286.2 L610.0 287.2 L609.5 286.1 L609.0 286.0 L608.5 286.4 L608.0 285.5 L607.5 285.8 L607.0 285.9 L606.5 286.0 L606.0 285.8 L605.5 285.6 L605.0 285.6 L604.5 285.2 L604.0 286.4 L603.5 285.4 L603.0 285.4 L602.5 289.7 L602.0 284.2 L601.5 284.2 L601.0 283.5 L600.5 283.9 L600.0 285.2 L599.5 283.5 L599.0 283.9 L598.5 283.0 L598.0 283.5 L597.5 284.0 L597.0 283.7 L596.5 283.9 L596.0 284.6 L595.5 283.7 L595.0 283.3 L594.5 283.8 L594.0 283.7 L593.5 284.7 L593.0 287.2 L592.5 284.7 L592.0 283.9 L591.5 284.9 L591.0 284.5 L590.5 284.6 L590.0 284.4 L589.5 285.9 L589.0 286.2 L588.5 285.4 L588.0 286.2 L587.5 284.8 L587.0 289.5 L586.5 286.4 L586.0 285.2 L585.5 284.6 L585.0 285.0 L584.5 284.9 L584.0 286.2 L583.5 284.7 L583.0 285.6 L582.5 284.5 L582.0 284.8 L581.5 285.2 L581.0 286.2 L580.5 284.3 L580.0 284.0 L579.5 285.0 L579.0 284.1 L578.5 283.9 L578.0 284.4 L577.5 284.2 L577.0 285.0 L576.5 284.5 L576.0 283.8 L575.5 284.4 L575.0 284.2 L574.5 284.8 L574.0 284.7 L573.5 285.2 L573.0 283.6 L572.5 284.0 L572.0 285.4 L571.5 284.0 L571.0 284.5 L570.5 284.7 L570.0 283.9 L569.5 285.2 L569.0 283.8 L568.5 284.6 L568.0 284.7 L567.5 284.2 L567.0 285.5 L566.5 285.8 L566.0 283.9 L565.5 284.2 L565.0 284.7 L564.5 284.9 L564.0 285.7 L563.5 284.5 L563.0 284.8 L562.5 285.3 L562.0 285.5 L561.5 285.2 L561.0 285.9 L560.5 284.6 L560.0 284.5 L559.5 284.2 L559.0 285.4 L558.5 284.4 L558.0 283.0 L557.5 282.9 L557.0 287.0 L556.5 284.1 L556.0 286.3 L555.5 284.4 L555.0 285.5 L554.5 284.7 L554.0 284.9 L553.5 284.8 L553.0 285.0 L552.5 285.6 L552.0 285.3 L551.5 285.9 L551.0 285.2 L550.5 286.0 L550.0 285.8 L549.5 285.3 L549.0 284.5 L548.5 284.9 L548.0 286.7 L547.5 284.3 L547.0 284.4 L546.5 284.6 L546.0 284.3 L545.5 283.9 L545.0 284.5 L544.5 283.8 L544.0 283.9 L543.5 283.9 L543.0 284.7 L542.5 285.4 L542.0 284.5 L541.5 284.7 L541.0 284.4 L540.5 285.2 L540.0 286.3 L539.5 285.9 L539.0 285.1 L538.5 285.5 L538.0 288.3 L537.5 285.0 L537.0 285.0 L536.5 284.6 L536.0 284.9 L535.5 287.2 L535.0 285.3 L534.5 285.0 L534.0 286.3 L533.5 285.1 L533.0 284.6 L532.5 285.0 L532.0 285.8 L531.5 285.3 L531.0 285.4 L530.5 284.9 L530.0 284.6 L529.5 284.6 L529.0 285.4 L528.5 284.7 L528.0 284.8 L527.5 285.5 L527.0 284.6 L526.5 285.4 L526.0 286.5 L525.5 284.7 L525.0 285.1 L524.5 285.9 L524.0 285.4 L523.5 287.1 L523.0 285.1 L522.5 284.8 L522.0 286.4 L521.5 285.4 L521.0 285.5 L520.5 285.0 L520.0 285.6 L519.5 286.3 L519.0 285.2 L518.5 284.9 L518.0 289.3 L517.5 286.0 L517.0 285.0 L516.5 285.1 L516.0 285.8 L515.5 289.4 L515.0 286.3 L514.5 285.1 L514.0 287.2 L513.5 285.6 L513.0 285.7 L512.5 285.7 L512.0 286.0 L511.5 289.8 L511.0 285.3 L510.5 285.2 L510.0 286.3 L509.5 289.3 L509.0 286.5 L508.5 285.8 L508.0 285.6 L507.5 286.9 L507.0 285.5 L506.5 287.3 L506.0 285.8 L505.5 290.8 L505.0 285.7 L504.5 285.5 L504.0 285.5 L503.5 286.8 L503.0 285.0 L502.5 287.8 L502.0 285.5 L501.5 285.6 L501.0 285.4 L500.5 285.5 L500.0 286.0 L499.5 287.2 L499.0 285.5 L498.5 286.0 L498.0 286.2 L497.5 286.0 L497.0 285.7 L496.5 285.8 L496.0 284.8 L495.5 288.3 L495.0 284.5 L494.5 284.5 L494.0 286.5 L493.5 286.5 L493.0 284.2 L492.5 285.0 L492.0 288.8 L491.5 284.7 L491.0 284.6 L490.5 284.7 L490.0 285.1 L489.5 285.4 L489.0 285.4 L488.5 285.6 L488.0 286.1 L487.5 287.1 L487.0 286.1 L486.5 285.4 L486.0 287.4 L485.5 286.5 L485.0 289.6 L484.5 286.0 L484.0 286.7 L483.5 287.3 L483.0 287.3 L482.5 286.7 L482.0 285.8 L481.5 285.3 L481.0 286.8 L480.5 282.7 L480.0 279.1 L479.5 275.8 L479.0 272.6 L478.5 269.4 L478.0 270.1 L477.5 273.6 L477.0 276.5 L476.5 279.4 L476.0 282.6 L475.5 283.8 L475.0 283.2 L474.5 286.6 L474.0 285.2 L473.5 288.7 L473.0 285.1 L472.5 285.6 L472.0 286.6 L471.5 286.8 L471.0 285.9 L470.5 286.3 L470.0 286.0 L469.5 286.6 L469.0 286.8 L468.5 286.6 L468.0 286.8 L467.5 287.3 L467.0 288.8 L466.5 287.3 L466.0 286.3 L465.5 284.8 L465.0 284.9 L464.5 284.2 L464.0 285.3 L463.5 284.4 L463.0 284.4 L462.5 285.3 L462.0 285.6 L461.5 285.8 L461.0 286.2 L460.5 288.8 L460.0 286.2 L459.5 289.8 L459.0 289.0 L458.5 287.9 L458.0 287.4 L457.5 286.3 L457.0 286.7 L456.5 286.5 L456.0 286.5 L455.5 286.5 L455.0 286.1 L454.5 286.2 L454.0 286.8 L453.5 287.6 L453.0 286.6 L452.5 287.2 L452.0 286.8 L451.5 287.5 L451.0 286.8 L450.5 287.8 L450.0 286.6 L449.5 287.3 L449.0 286.7 L448.5 287.5 L448.0 286.7 L447.5 287.7 L447.0 286.1 L446.5 288.3 L446.0 286.3 L445.5 286.6 L445.0 286.9 L444.5 286.8 L444.0 286.1 L443.5 287.9 L443.0 286.3 L442.5 287.3 L442.0 286.6 Z" fill="#b8e3ea" opacity="0.45"/><path d="M442.0 280.3 L442.5 280.1 L443.0 280.1 L443.5 280.3 L444.0 280.1 L444.5 280.0 L445.0 280.1 L445.5 280.3 L446.0 280.1 L446.5 280.2 L447.0 280.1 L447.5 280.1 L448.0 280.3 L448.5 280.4 L449.0 280.1 L449.5 280.0 L450.0 280.1 L450.5 280.0 L451.0 280.2 L451.5 280.0 L452.0 280.2 L452.5 280.1 L453.0 280.2 L453.5 280.3 L454.0 280.1 L454.5 280.1 L455.0 279.9 L455.5 280.2 L456.0 280.3 L456.5 280.1 L457.0 280.2 L457.5 280.2 L458.0 280.1 L458.5 280.2 L459.0 280.1 L459.5 280.0 L460.0 280.0 L460.5 279.9 L461.0 279.7 L461.5 279.3 L462.0 278.8 L462.5 278.4 L463.0 278.3 L463.5 278.0 L464.0 277.8 L464.5 278.1 L465.0 278.5 L465.5 278.8 L466.0 279.3 L466.5 279.4 L467.0 279.4 L467.5 279.4 L468.0 279.7 L468.5 279.5 L469.0 279.5 L469.5 279.7 L470.0 279.8 L470.5 279.6 L471.0 279.4 L471.5 279.3 L472.0 279.1 L472.5 278.9 L473.0 279.1 L473.5 278.8 L474.0 278.9 L474.5 277.7 L475.0 276.8 L475.5 275.6 L476.0 274.6 L476.5 271.8 L477.0 268.6 L477.5 265.8 L478.0 262.4 L478.5 261.6 L479.0 264.9 L479.5 268.1 L480.0 271.3 L480.5 274.7 L481.0 278.0 L481.5 278.4 L482.0 278.9 L482.5 279.7 L483.0 280.2 L483.5 280.0 L484.0 280.0 L484.5 279.6 L485.0 279.6 L485.5 279.5 L486.0 279.2 L486.5 279.4 L487.0 279.1 L487.5 279.1 L488.0 279.0 L488.5 278.9 L489.0 278.9 L489.5 279.1 L490.0 278.8 L490.5 278.8 L491.0 278.6 L491.5 278.5 L492.0 278.3 L492.5 278.4 L493.0 278.1 L493.5 278.1 L494.0 277.9 L494.5 278.0 L495.0 278.3 L495.5 278.4 L496.0 278.8 L496.5 278.9 L497.0 279.2 L497.5 279.3 L498.0 279.2 L498.5 279.2 L499.0 279.4 L499.5 279.8 L500.0 279.7 L500.5 279.5 L501.0 279.3 L501.5 279.2 L502.0 279.1 L502.5 279.0 L503.0 278.6 L503.5 278.9 L504.0 278.8 L504.5 279.1 L505.0 279.3 L505.5 279.4 L506.0 279.5 L506.5 279.3 L507.0 279.6 L507.5 279.4 L508.0 279.3 L508.5 279.4 L509.0 279.4 L509.5 279.2 L510.0 279.1 L510.5 279.1 L511.0 279.2 L511.5 279.3 L512.0 279.0 L512.5 279.0 L513.0 279.1 L513.5 279.0 L514.0 278.9 L514.5 279.0 L515.0 278.9 L515.5 278.7 L516.0 278.9 L516.5 278.8 L517.0 278.9 L517.5 278.9 L518.0 279.1 L518.5 278.9 L519.0 278.9 L519.5 278.9 L520.0 278.7 L520.5 278.9 L521.0 278.9 L521.5 278.8 L522.0 278.9 L522.5 278.8 L523.0 278.9 L523.5 279.0 L524.0 278.7 L524.5 278.9 L525.0 278.8 L525.5 278.8 L526.0 279.0 L526.5 278.7 L527.0 278.6 L527.5 278.6 L528.0 278.6 L528.5 278.5 L529.0 278.6 L529.5 278.5 L530.0 278.6 L530.5 278.7 L531.0 278.5 L531.5 278.5 L532.0 278.3 L532.5 278.5 L533.0 278.7 L533.5 278.5 L534.0 278.6 L534.5 278.5 L535.0 278.5 L535.5 278.6 L536.0 278.5 L536.5 278.6 L537.0 278.6 L537.5 278.4 L538.0 278.4 L538.5 278.5 L539.0 278.6 L539.5 278.4 L540.0 278.5 L540.5 278.3 L541.0 278.4 L541.5 278.4 L542.0 278.4 L542.5 278.1 L543.0 278.3 L543.5 278.0 L544.0 277.4 L544.5 276.9 L545.0 276.3 L545.5 276.8 L546.0 277.1 L546.5 278.0 L547.0 278.5 L547.5 278.4 L548.0 278.4 L548.5 278.4 L549.0 278.4 L549.5 278.4 L550.0 278.5 L550.5 278.2 L551.0 278.5 L551.5 278.4 L552.0 278.4 L552.5 278.4 L553.0 278.3 L553.5 278.2 L554.0 278.2 L554.5 278.6 L555.0 278.4 L555.5 278.4 L556.0 278.5 L556.5 278.0 L557.0 277.4 L557.5 277.2 L558.0 276.5 L558.5 277.2 L559.0 277.5 L559.5 277.7 L560.0 278.4 L560.5 278.3 L561.0 278.5 L561.5 278.5 L562.0 278.2 L562.5 278.4 L563.0 278.2 L563.5 278.0 L564.0 278.0 L564.5 278.2 L565.0 278.1 L565.5 278.0 L566.0 277.8 L566.5 277.9 L567.0 277.9 L567.5 278.0 L568.0 277.9 L568.5 277.7 L569.0 277.6 L569.5 277.5 L570.0 277.7 L570.5 277.4 L571.0 277.5 L571.5 277.6 L572.0 277.5 L572.5 277.4 L573.0 277.3 L573.5 277.4 L574.0 277.3 L574.5 277.2 L575.0 277.6 L575.5 277.5 L576.0 277.5 L576.5 277.7 L577.0 277.6 L577.5 277.7 L578.0 277.7 L578.5 277.9 L579.0 277.7 L579.5 277.8 L580.0 278.2 L580.5 277.8 L581.0 278.1 L581.5 278.1 L582.0 278.0 L582.5 278.0 L583.0 278.4 L583.5 278.1 L584.0 278.4 L584.5 278.5 L585.0 278.3 L585.5 278.5 L586.0 278.4 L586.5 278.5 L587.0 278.2 L587.5 278.5 L588.0 278.2 L588.5 278.1 L589.0 278.2 L589.5 278.3 L590.0 278.2 L590.5 278.1 L591.0 278.1 L591.5 278.1 L592.0 277.7 L592.5 278.0 L593.0 277.7 L593.5 277.4 L594.0 277.6 L594.5 277.5 L595.0 277.5 L595.5 277.2 L596.0 277.1 L596.5 277.1 L597.0 276.9 L597.5 277.0 L598.0 276.8 L598.5 276.9 L599.0 277.2 L599.5 277.1 L600.0 277.2 L600.5 277.5 L601.0 277.4 L601.5 277.8 L602.0 277.9 L602.5 278.3 L603.0 278.5 L603.5 279.2 L604.0 279.3 L604.5 279.3 L605.0 279.2 L605.5 279.3 L606.0 279.4 L606.5 279.4 L607.0 279.0 L607.5 279.5 L608.0 279.5 L608.5 279.2 L609.0 279.4 L609.5 279.5 L610.0 279.2 L610.5 279.5 L611.0 279.2 L611.5 279.4 L612.0 279.1 L612.5 279.3 L613.0 279.2 L613.5 279.1 L614.0 279.2 L614.5 279.2 L615.0 278.9 L615.5 279.4 L616.0 279.3 L616.5 279.4 L617.0 279.8 L617.5 279.6 L618.0 279.8 L618.5 279.8 L619.0 279.8 L619.5 280.0 L620.0 279.9 L620.5 280.1 L621.0 279.8 L621.5 279.7 L622.0 279.4 L622.5 279.3 L623.0 279.4 L623.5 279.4 L624.0 279.4 L624.5 279.2 L625.0 279.2 L625.5 279.0 L626.0 279.2 L626.5 279.0 L627.0 279.0 L627.5 279.0 L628.0 278.8 L628.5 278.7 L629.0 278.8 L629.5 278.7 L630.0 278.6 L630.5 278.2 L631.0 277.8 L631.5 277.6 L632.0 277.3 L632.5 276.9 L633.0 276.5 L633.5 277.0 L634.0 277.9 L634.5 278.3 L635.0 278.8 L635.5 278.9 L636.0 278.7 L636.5 278.7 L637.0 278.9 L637.5 278.6 L638.0 278.6 L638.5 278.5 L639.0 278.6 L639.5 278.8 L640.0 278.7 L640.5 278.6 L641.0 278.4 L641.5 278.8 L642.0 278.8 L642.5 278.6 L643.0 278.4 L643.5 278.5 L644.0 278.5 L644.5 278.3 L645.0 278.3 L645.5 278.3 L646.0 278.5 L646.5 278.3 L647.0 278.4 L647.5 278.2 L648.0 278.2 L648.5 278.3 L649.0 278.2 L649.5 278.4 L650.0 278.2 L650.5 278.2 L651.0 278.0 L651.5 277.7 L652.0 277.5 L652.5 277.4 L653.0 277.2 L653.5 277.7 L654.0 277.8 L654.5 277.9 L655.0 278.1 L655.5 278.0 L656.0 278.6 L656.5 278.4 L657.0 278.3 L657.5 278.4 L658.0 278.3 L658.5 278.3 L659.0 278.6 L659.5 278.4 L660.0 278.3 L660.5 278.5 L661.0 278.5 L661.5 278.3 L662.0 278.5 L662.5 278.4 L663.0 278.2 L663.5 278.4 L664.0 278.5 L664.5 278.4 L665.0 278.6 L665.5 278.4 L666.0 278.6 L666.5 278.3 L667.0 278.5 L667.5 278.4 L668.0 278.4 L668.5 278.5 L669.0 278.6 L669.5 278.4 L670.0 278.4 L670.5 278.3 L671.0 278.4 L671.5 278.3 L672.0 278.4 L672.5 278.2 L673.0 278.3 L673.5 278.2 L674.0 278.1 L674.5 278.4 L675.0 278.3 L675.5 278.3 L676.0 278.2 L676.5 276.0 L677.0 273.8 L677.5 270.9 L678.0 266.4 L678.5 269.4 L679.0 272.3 L679.5 274.6 L680.0 276.0 L680.5 277.8 L681.0 277.9 L681.5 277.8 L682.0 277.6 L682.5 277.8 L683.0 277.8 L683.5 277.7 L684.0 277.6 L684.5 277.6 L685.0 277.7 L685.5 277.7 L686.0 277.8 L686.5 276.7 L687.0 275.7 L687.5 275.0 L688.0 273.9 L688.5 272.7 L689.0 271.0 L689.5 269.5 L690.0 271.7 L690.5 273.8 L691.0 275.9 L691.5 276.7 L692.0 277.3 L692.5 278.1 L693.0 278.8 L693.5 278.9 L694.0 278.8 L694.5 278.8 L695.0 278.6 L695.5 278.4 L696.0 278.4 L696.5 278.5 L697.0 278.5 L697.5 278.3 L698.0 278.3 L698.5 278.2 L699.0 278.1 L699.5 278.0 L700.0 278.0 L700.5 277.9 L701.0 277.8 L701.5 277.8 L702.0 277.9 L702.5 277.8 L703.0 277.8 L703.5 278.0 L704.0 278.0 L704.5 277.8 L705.0 278.1 L705.5 277.7 L706.0 277.8 L706.5 277.7 L707.0 277.8 L707.5 278.0 L708.0 277.8 L708.5 277.6 L709.0 277.7 L709.5 277.8 L710.0 277.9 L710.5 277.7 L711.0 277.7 L711.5 277.9 L712.0 277.7 L712.5 277.8 L713.0 277.7 L713.5 277.8 L714.0 277.9 L714.5 277.7 L715.0 277.8 L715.5 277.8 L716.0 277.9 L716.5 278.0 L717.0 278.2 L717.5 277.8 L718.0 278.0 L718.5 278.0 L719.0 278.1 L719.5 278.4 L720.0 278.1 L720.5 278.4 L721.0 278.4 L721.5 278.4 L722.0 278.5 L722.5 278.6 L723.0 278.6 L723.5 278.8 L724.0 278.9 L724.5 278.7 L725.0 278.5 L725.5 278.3 L726.0 278.0 L726.5 277.9 L727.0 277.6 L727.5 277.4 L728.0 277.2 L728.5 277.3 L729.0 277.0 L729.5 276.9 L730.0 277.0 L730.5 276.8 L731.0 276.8 L731.5 276.5 L732.0 276.9 L732.5 276.3 L733.0 276.5 L733.5 276.2 L734.0 275.8 L734.5 275.7 L735.0 275.8 L735.5 275.6 L736.0 275.5 L736.5 275.2 L737.0 275.0 L737.5 274.8 L738.0 274.7 L738.5 274.8" fill="none" stroke="#3197a5" stroke-width="1.05" stroke-linejoin="round"/><path d="M442 251.3 V306.6" fill="none" stroke="#8ccbd4" stroke-width="0.7"/><path d="M442 306.6 H738.5" fill="none" stroke="#b9c0c8" stroke-width="0.6"/><path d="M440.3 306.5 H442" stroke="#8fb9c4" stroke-width="0.5"/><path d="M440.3 295.5 H442" stroke="#8fb9c4" stroke-width="0.5"/><path d="M440.3 284.5 H442" stroke="#8fb9c4" stroke-width="0.5"/><path d="M440.3 273.6 H442" stroke="#8fb9c4" stroke-width="0.5"/><path d="M440.3 262.6 H442" stroke="#8fb9c4" stroke-width="0.5"/><path d="M440.3 251.6 H442" stroke="#8fb9c4" stroke-width="0.5"/><path d="M454.7 306.6 V308" stroke="#b0bac4" stroke-width="0.5"/><path d="M479.3 306.6 V308" stroke="#b0bac4" stroke-width="0.5"/><path d="M504.0 306.6 V308" stroke="#b0bac4" stroke-width="0.5"/><path d="M528.6 306.6 V308" stroke="#b0bac4" stroke-width="0.5"/><path d="M553.3 306.6 V308" stroke="#b0bac4" stroke-width="0.5"/><path d="M578.0 306.6 V308" stroke="#b0bac4" stroke-width="0.5"/><path d="M602.6 306.6 V308" stroke="#b0bac4" stroke-width="0.5"/><path d="M627.2 306.6 V308" stroke="#b0bac4" stroke-width="0.5"/><path d="M651.9 306.6 V308" stroke="#b0bac4" stroke-width="0.5"/><path d="M676.5 306.6 V308" stroke="#b0bac4" stroke-width="0.5"/><path d="M701.2 306.6 V308" stroke="#b0bac4" stroke-width="0.5"/><path d="M725.8 306.6 V308" stroke="#b0bac4" stroke-width="0.5"/></svg>
<div class="t" style="left:39.20px;width:400px;text-align:right;top:306.00px;font-size:3.8px;color:#3a9fb0;font-weight:700;transform:scaleX(1.4118);transform-origin:100% 0;">0</div>
<div class="t" style="left:39.20px;width:400px;text-align:right;top:295.00px;font-size:3.8px;color:#3a9fb0;font-weight:700;transform:scaleX(1.4170);transform-origin:100% 0;">50</div>
<div class="t" style="left:39.20px;width:400px;text-align:right;top:284.00px;font-size:3.8px;color:#3a9fb0;font-weight:700;transform:scaleX(1.3399);transform-origin:100% 0;">100</div>
<div class="t" style="left:39.20px;width:400px;text-align:right;top:273.00px;font-size:3.8px;color:#3a9fb0;font-weight:700;transform:scaleX(1.3399);transform-origin:100% 0;">150</div>
<div class="t" style="left:39.20px;width:400px;text-align:right;top:262.00px;font-size:3.8px;color:#3a9fb0;font-weight:700;transform:scaleX(1.3399);transform-origin:100% 0;">200</div>
<div class="t" style="left:39.20px;width:400px;text-align:right;top:251.00px;font-size:3.8px;color:#3a9fb0;font-weight:700;transform:scaleX(1.3399);transform-origin:100% 0;">250</div>
<div class="t" style="left:254.70px;width:400px;text-align:center;top:311.00px;font-size:4.8px;color:#5a6068;font-weight:400;-webkit-text-stroke:0.13px #5a6068;letter-spacing:-0.045px;">Jan</div>
<div class="t" style="left:279.35px;width:400px;text-align:center;top:311.00px;font-size:4.8px;color:#5a6068;font-weight:400;-webkit-text-stroke:0.13px #5a6068;letter-spacing:-0.227px;">Feb</div>
<div class="t" style="left:304.00px;width:400px;text-align:center;top:311.00px;font-size:4.8px;color:#5a6068;font-weight:400;-webkit-text-stroke:0.13px #5a6068;letter-spacing:-0.089px;">Mar</div>
<div class="t" style="left:328.65px;width:400px;text-align:center;top:311.00px;font-size:4.8px;color:#5a6068;font-weight:400;-webkit-text-stroke:0.13px #5a6068;letter-spacing:0.044px;">Apr</div>
<div class="t" style="left:353.30px;width:400px;text-align:center;top:311.00px;font-size:4.8px;color:#5a6068;font-weight:400;-webkit-text-stroke:0.13px #5a6068;letter-spacing:-0.245px;">Mai</div>
<div class="t" style="left:377.95px;width:400px;text-align:center;top:311.00px;font-size:4.8px;color:#5a6068;font-weight:400;-webkit-text-stroke:0.13px #5a6068;letter-spacing:-0.045px;">Jun</div>
<div class="t" style="left:402.60px;width:400px;text-align:center;top:311.00px;font-size:4.8px;color:#5a6068;font-weight:400;-webkit-text-stroke:0.13px #5a6068;letter-spacing:-0.214px;">Jul</div>
<div class="t" style="left:427.25px;width:400px;text-align:center;top:311.00px;font-size:4.8px;color:#5a6068;font-weight:400;-webkit-text-stroke:0.13px #5a6068;letter-spacing:-0.182px;">Aug</div>
<div class="t" style="left:451.90px;width:400px;text-align:center;top:311.00px;font-size:4.8px;color:#5a6068;font-weight:400;-webkit-text-stroke:0.13px #5a6068;letter-spacing:0.031px;">Sept</div>
<div class="t" style="left:476.55px;width:400px;text-align:center;top:311.00px;font-size:4.8px;color:#5a6068;font-weight:400;-webkit-text-stroke:0.13px #5a6068;letter-spacing:0.010px;">Okt</div>
<div class="t" style="left:501.20px;width:400px;text-align:center;top:311.00px;font-size:4.8px;color:#5a6068;font-weight:400;-webkit-text-stroke:0.13px #5a6068;letter-spacing:-0.177px;">Nov</div>
<div class="t" style="left:525.85px;width:400px;text-align:center;top:311.00px;font-size:4.8px;color:#5a6068;font-weight:400;-webkit-text-stroke:0.13px #5a6068;letter-spacing:-0.177px;">Des</div>
<div class="r" style="left:425.40px;top:321.60px;width:65.00px;height:14.80px;background:#ffffff;border:0.7px solid #e1e3e8;border-radius:1.5px"></div>
<div class="r" style="left:431.00px;top:326.20px;width:6.40px;height:6.40px;background:#eeedfa;border:0.7px solid #a49fd6;border-radius:0.8px"></div>
<div class="t" style="left:442.00px;top:327.00px;font-size:5.6px;color:#50555e;font-weight:400;-webkit-text-stroke:0.13px #50555e;letter-spacing:0.280px;">Driftsstans</div>
<div class="r" style="left:476.50px;top:325.50px;width:0.50px;height:8.00px;background:#e6e8ec;"></div>
<svg style="position:absolute;left:481.00px;top:328.10px;" width="4" height="3" viewBox="0 0 4 3"><path d="M0.6 0.8 L2 2.2 L3.4 0.8" fill="none" stroke="#5a5f68" stroke-width="0.7"/></svg>
<div class="r" style="left:500.40px;top:321.60px;width:82.00px;height:14.80px;background:#ffffff;border:0.7px solid #e1e3e8;border-radius:1.5px"></div>
<div class="r" style="left:506.00px;top:326.20px;width:6.40px;height:6.40px;background:#eef8ec;border:0.7px solid #9fd19a;border-radius:0.8px"></div>
<div class="t" style="left:517.50px;top:327.00px;font-size:5.6px;color:#50555e;font-weight:400;-webkit-text-stroke:0.13px #50555e;letter-spacing:0.219px;">Tertiærregulering</div>
<div class="r" style="left:568.60px;top:325.50px;width:0.50px;height:8.00px;background:#e6e8ec;"></div>
<svg style="position:absolute;left:573.00px;top:328.10px;" width="4" height="3" viewBox="0 0 4 3"><path d="M0.6 0.8 L2 2.2 L3.4 0.8" fill="none" stroke="#5a5f68" stroke-width="0.7"/></svg>
<div class="r" style="left:592.40px;top:321.60px;width:59.00px;height:14.80px;background:#ffffff;border:0.7px solid #e1e3e8;border-radius:1.5px"></div>
<div class="r" style="left:598.00px;top:326.20px;width:6.40px;height:6.40px;background:#fdeef0;border:0.7px solid #e0939b;border-radius:0.8px"></div>
<div class="t" style="left:609.50px;top:327.00px;font-size:5.6px;color:#50555e;font-weight:400;-webkit-text-stroke:0.13px #50555e;letter-spacing:0.288px;">Integrity</div>
<div class="r" style="left:637.00px;top:325.50px;width:0.50px;height:8.00px;background:#e6e8ec;"></div>
<svg style="position:absolute;left:641.00px;top:328.10px;" width="4" height="3" viewBox="0 0 4 3"><path d="M0.6 0.8 L2 2.2 L3.4 0.8" fill="none" stroke="#5a5f68" stroke-width="0.7"/></svg>
</div>
<div style="position:absolute;left:0;top:0;width:1200px;height:630px;overflow:hidden;text-rendering:geometricPrecision;clip-path:inset(459.5px 784.0px 6.0px 123.0px)">
<div class="r" style="left:123.00px;top:459.50px;width:293.00px;height:164.50px;background:#f4f5f8;"></div>
<div class="r" style="left:123.00px;top:459.50px;width:293.00px;height:4.60px;background:#40464e;"></div>
<div class="r" style="left:123.00px;top:464.10px;width:293.00px;height:1.20px;background:#343940;"></div>
<div class="t" style="left:131.80px;top:462.00px;font-size:3.4px;color:#f2f3f5;font-weight:700;">Statnett</div>
<div class="t" style="left:10.00px;width:400px;text-align:right;top:462.00px;font-size:2.2px;color:#c9ccd2;font-weight:400;">username@statnett.no &#8964;</div>
<div class="r" style="left:123.00px;top:465.30px;width:293.00px;height:8.40px;background:#ffffff;border-bottom:0.4px solid #e6e8ec"></div>
<svg style="position:absolute;left:131.90px;top:468.40px;" width="3.2" height="3.2" viewBox="0 0 3.2 3.2"><circle cx="1.6" cy="1.6" r="1.5" fill="#b8323a"/></svg>
<div class="t" style="left:136.60px;top:469.00px;font-size:3.1px;color:#3a3e45;font-weight:700;">TNT</div>
<div class="t" style="left:149.50px;top:470.00px;font-size:2.3px;color:#3b4049;font-weight:700;">Components</div>
<div class="t" style="left:167.00px;top:470.00px;font-size:2.3px;color:#7a7f88;font-weight:400;">Chart</div>
<div class="t" style="left:179.50px;top:470.00px;font-size:2.3px;color:#7a7f88;font-weight:400;">My charts</div>
<div class="t" style="left:193.50px;top:470.00px;font-size:2.3px;color:#7a7f88;font-weight:400;">Topology</div>
<div class="r" style="left:149.50px;top:473.60px;width:14.00px;height:0.40px;background:#a9aeb5;"></div>
<svg style="position:absolute;left:175.00px;top:468.80px;" width="2.4" height="2.4" viewBox="0 0 2.4 2.4"><circle cx="1.2" cy="1.2" r="1.2" fill="#707b8c"/></svg>
<div class="r" style="left:350.00px;top:467.80px;width:16.00px;height:4.50px;background:#ffffff;border:0.3px solid #f0f1f3;border-radius:2px"></div>
<div class="t" style="left:352.00px;top:471.00px;font-size:1.9px;color:#40454e;font-weight:700;">&#9679; CIM 257-2-1_1</div>
<div class="r" style="left:371.00px;top:467.80px;width:28.00px;height:4.50px;background:#ffffff;border:0.3px solid #f0f1f3;border-radius:2px"></div>
<svg style="position:absolute;left:371.40px;top:468.40px;" width="3.4" height="3.4" viewBox="0 0 3.4 3.4"><circle cx="1.7" cy="1.7" r="1.6" fill="#b8323a"/></svg>
<div class="t" style="left:375.40px;top:471.00px;font-size:1.9px;color:#555a63;font-weight:400;">K3 Kraftsensitiv informasjon</div>
<svg style="position:absolute;left:403.00px;top:468.20px;" width="3.8" height="3.8" viewBox="0 0 3.8 3.8"><circle cx="1.9" cy="1.9" r="1.6" fill="none" stroke="#9a9fa6" stroke-width="0.3"/></svg>
<div class="t" style="left:408.50px;top:470.00px;font-size:2.0px;color:#555a63;font-weight:700;">About</div>
<div class="r" style="left:132.00px;top:484.10px;width:55.50px;height:5.60px;background:#ffffff;border:0.4px solid #e6e8ec;border-radius:0.6px"></div>
<svg style="position:absolute;left:134.20px;top:485.70px;" width="2.6" height="2.6" viewBox="0 0 2.6 2.6"><circle cx="1.1" cy="1.1" r="0.9" fill="none" stroke="#555" stroke-width="0.35"/><path d="M1.8 1.8L2.5 2.5" stroke="#555" stroke-width="0.35"/></svg>
<div class="t" style="left:138.00px;top:487.00px;font-size:2.1px;color:#8a8f98;font-weight:400;">Search for an asset</div>
<svg style="position:absolute;left:183.50px;top:485.70px;" width="2.6" height="2.6" viewBox="0 0 2.6 2.6"><path d="M0.2 0.7H2.4M0.2 1.3H2.4M0.2 1.9H2.4" stroke="#555" stroke-width="0.3"/></svg>
<svg style="position:absolute;left:135.20px;top:497.20px;" width="1.6" height="1.6" viewBox="0 0 1.6 1.6"><path d="M0.3 0.4L0.8 1L1.3 0.4" fill="none" stroke="#6a6f78" stroke-width="0.35"/></svg>
<svg style="position:absolute;left:137.50px;top:496.70px;" width="3" height="2.6" viewBox="0 0 3 2.6"><rect x="0.2" y="0.2" width="2.6" height="2.2" fill="none" stroke="#5b6068" stroke-width="0.35"/></svg>
<div class="t" style="left:141.20px;top:498.00px;font-size:2.2px;color:#50555e;font-weight:400;">Norge</div>
<svg style="position:absolute;left:138.70px;top:503.35px;" width="1.6" height="1.6" viewBox="0 0 1.6 1.6"><path d="M0.3 0.4L0.8 1L1.3 0.4" fill="none" stroke="#6a6f78" stroke-width="0.35"/></svg>
<svg style="position:absolute;left:141.50px;top:502.85px;" width="3" height="2.6" viewBox="0 0 3 2.6"><rect x="0.2" y="0.2" width="2.6" height="2.2" fill="none" stroke="#5b6068" stroke-width="0.35"/></svg>
<div class="t" style="left:145.20px;top:504.00px;font-size:2.2px;color:#50555e;font-weight:400;">Lines</div>
<svg style="position:absolute;left:138.70px;top:509.50px;" width="1.6" height="1.6" viewBox="0 0 1.6 1.6"><path d="M0.3 0.4L0.8 1L1.3 0.4" fill="none" stroke="#6a6f78" stroke-width="0.35"/></svg>
<svg style="position:absolute;left:141.50px;top:509.00px;" width="3" height="2.6" viewBox="0 0 3 2.6"><rect x="0.2" y="0.2" width="2.6" height="2.2" fill="none" stroke="#5b6068" stroke-width="0.35"/></svg>
<div class="t" style="left:145.20px;top:510.00px;font-size:2.2px;color:#50555e;font-weight:400;">Substations</div>
<svg style="position:absolute;left:138.70px;top:515.65px;" width="1.6" height="1.6" viewBox="0 0 1.6 1.6"><path d="M0.3 0.4L0.8 1L1.3 0.4" fill="none" stroke="#6a6f78" stroke-width="0.35"/></svg>
<svg style="position:absolute;left:141.50px;top:515.15px;" width="3" height="2.6" viewBox="0 0 3 2.6"><rect x="0.2" y="0.2" width="2.6" height="2.2" fill="none" stroke="#5b6068" stroke-width="0.35"/></svg>
<div class="t" style="left:145.20px;top:516.00px;font-size:2.2px;color:#50555e;font-weight:400;">VirtualACLineSegment</div>
<svg style="position:absolute;left:135.20px;top:521.80px;" width="1.6" height="1.6" viewBox="0 0 1.6 1.6"><path d="M0.3 0.4L0.8 1L1.3 0.4" fill="none" stroke="#6a6f78" stroke-width="0.35"/></svg>
<div class="t" style="left:138.00px;top:522.00px;font-size:2.2px;color:#50555e;font-weight:400;">Market participants</div>
<svg style="position:absolute;left:135.20px;top:527.95px;" width="1.6" height="1.6" viewBox="0 0 1.6 1.6"><path d="M0.3 0.4L0.8 1L1.3 0.4" fill="none" stroke="#6a6f78" stroke-width="0.35"/></svg>
<div class="t" style="left:138.00px;top:529.00px;font-size:2.2px;color:#50555e;font-weight:400;">Power transfer corridors</div>
<svg style="position:absolute;left:135.20px;top:534.10px;" width="1.6" height="1.6" viewBox="0 0 1.6 1.6"><path d="M0.3 0.4L0.8 1L1.3 0.4" fill="none" stroke="#6a6f78" stroke-width="0.35"/></svg>
<div class="t" style="left:138.00px;top:535.00px;font-size:2.2px;color:#50555e;font-weight:400;">Workflow Data</div>
<svg style="position:absolute;left:281.00px;top:517.90px;" width="10" height="10" viewBox="0 0 10 10"><path d="M1.2 8.2 L6.8 2.6 L7.9 3.7 L2.3 9.3 Q1.5 9.9 0.9 9.3 Q0.4 8.8 1.2 8.2 Z" fill="none" stroke="#4a4f57" stroke-width="0.7" stroke-linejoin="round"/><path d="M6.8 2.6 L8.4 1 L9.4 2 L7.9 3.7" fill="none" stroke="#9aa0a8" stroke-width="0.6"/></svg>
<div class="t" style="left:86.00px;width:400px;text-align:center;top:534.00px;font-size:4.5px;color:#33373f;font-weight:700;">Welcome to the TNT application!</div>
<div class="t" style="left:86.00px;width:400px;text-align:center;top:545.00px;font-size:2.7px;color:#6b7079;font-weight:400;">Search for stations, lines or other components to get started.</div>
<div class="t" style="left:86.00px;width:400px;text-align:center;top:553.00px;font-size:2.7px;color:#6b7079;font-weight:400;">If you have any questions, don't hesitate to contact</div>
<div class="t" style="left:86.00px;width:400px;text-align:center;top:557.00px;font-size:2.7px;color:#6b7079;font-weight:400;">us at tnt-help@statnett.no or Teams: TNT Brukere</div>
<div class="r" style="left:263.30px;top:558.30px;width:23.70px;height:0.40px;background:#a4aab3;"></div>
<div class="r" style="left:301.00px;top:558.30px;width:14.00px;height:0.40px;background:#a4aab3;"></div>
<div class="r" style="left:266.00px;top:564.00px;width:15.30px;height:5.60px;background:#dde3f2;border-radius:0.6px"></div>
<div class="t" style="left:270.00px;top:567.00px;font-size:2.3px;color:#34406a;font-weight:700;">&#9639; About</div>
<div class="r" style="left:286.50px;top:564.00px;width:19.50px;height:5.60px;background:#dde3f2;border-radius:0.6px"></div>
<div class="t" style="left:289.50px;top:567.00px;font-size:2.3px;color:#34406a;font-weight:700;">&#9639; Intro video</div>
</div>
<div style="position:absolute;left:0;top:0;width:1200px;height:630px;overflow:hidden;text-rendering:geometricPrecision;clip-path:inset(459.5px 447.70000000000005px 6.0px 459.3px)">
<div class="r" style="left:459.30px;top:459.50px;width:293.00px;height:164.50px;background:#ffffff;"></div>
<div class="r" style="left:459.30px;top:459.50px;width:293.00px;height:4.60px;background:#40464e;"></div>
<div class="r" style="left:459.30px;top:464.10px;width:293.00px;height:1.20px;background:#343940;"></div>
<div class="t" style="left:468.10px;top:462.00px;font-size:3.4px;color:#f2f3f5;font-weight:700;">Statnett</div>
<div class="t" style="left:346.30px;width:400px;text-align:right;top:462.00px;font-size:2.2px;color:#c9ccd2;font-weight:400;">username@statnett.no &#8964;</div>
<div class="r" style="left:459.30px;top:465.30px;width:293.00px;height:8.40px;background:#ffffff;border-bottom:0.4px solid #e6e8ec"></div>
<svg style="position:absolute;left:468.20px;top:468.40px;" width="3.2" height="3.2" viewBox="0 0 3.2 3.2"><circle cx="1.6" cy="1.6" r="1.5" fill="#b8323a"/></svg>
<div class="t" style="left:472.90px;top:469.00px;font-size:3.1px;color:#3a3e45;font-weight:700;">TNT</div>
<div class="t" style="left:485.80px;top:470.00px;font-size:2.3px;color:#7a7f88;font-weight:400;">Components</div>
<div class="t" style="left:503.30px;top:470.00px;font-size:2.3px;color:#3b4049;font-weight:700;">Chart</div>
<div class="t" style="left:515.80px;top:470.00px;font-size:2.3px;color:#7a7f88;font-weight:400;">My charts</div>
<div class="t" style="left:529.80px;top:470.00px;font-size:2.3px;color:#7a7f88;font-weight:400;">Topology</div>
<div class="r" style="left:502.80px;top:473.60px;width:9.00px;height:0.40px;background:#a9aeb5;"></div>
<svg style="position:absolute;left:511.30px;top:468.80px;" width="2.4" height="2.4" viewBox="0 0 2.4 2.4"><circle cx="1.2" cy="1.2" r="1.2" fill="#707b8c"/></svg>
<div class="r" style="left:686.30px;top:467.80px;width:16.00px;height:4.50px;background:#ffffff;border:0.3px solid #f0f1f3;border-radius:2px"></div>
<div class="t" style="left:688.30px;top:471.00px;font-size:1.9px;color:#40454e;font-weight:700;">&#9679; CIM 257-2-1_1</div>
<div class="r" style="left:707.30px;top:467.80px;width:28.00px;height:4.50px;background:#ffffff;border:0.3px solid #f0f1f3;border-radius:2px"></div>
<svg style="position:absolute;left:707.70px;top:468.40px;" width="3.4" height="3.4" viewBox="0 0 3.4 3.4"><circle cx="1.7" cy="1.7" r="1.6" fill="#b8323a"/></svg>
<div class="t" style="left:711.70px;top:471.00px;font-size:1.9px;color:#555a63;font-weight:400;">K3 Kraftsensitiv informasjon</div>
<svg style="position:absolute;left:739.30px;top:468.20px;" width="3.8" height="3.8" viewBox="0 0 3.8 3.8"><circle cx="1.9" cy="1.9" r="1.6" fill="none" stroke="#9a9fa6" stroke-width="0.3"/></svg>
<div class="t" style="left:744.80px;top:470.00px;font-size:2.0px;color:#555a63;font-weight:700;">About</div>
<svg style="position:absolute;left:464.50px;top:476.70px;" width="6" height="6" viewBox="0 0 6 6"><circle cx="3" cy="3" r="2.8" fill="#fff" stroke="#e3e5e9" stroke-width="0.4"/><path d="M3.8 3H2.2M2.8 2.3L2.1 3L2.8 3.7" fill="none" stroke="#555" stroke-width="0.35"/></svg>
<div class="t" style="left:473.00px;top:480.00px;font-size:2.6px;color:#30343b;font-weight:700;">Andeby - Tiltvdy</div>
<div class="r" style="left:632.80px;top:476.20px;width:43.00px;height:7.20px;background:#ffffff;border:0.4px solid #e3e5e9;border-radius:0.8px"></div>
<div class="t" style="left:636.00px;top:479.00px;font-size:2.0px;color:#8a8f98;font-weight:400;">2023-01-01  &#8594;  2023-12-31</div>
<div class="r" style="left:680.30px;top:476.20px;width:6.50px;height:7.20px;background:#ffffff;border:0.4px solid #e3e5e9;border-radius:0.8px"></div>
<svg style="position:absolute;left:682.35px;top:478.60px;" width="2.4" height="2.4" viewBox="0 0 2.4 2.4"><rect x="0.2" y="0.2" width="2" height="2" fill="none" stroke="#666" stroke-width="0.3"/></svg>
<div class="r" style="left:690.80px;top:476.20px;width:6.50px;height:7.20px;background:#ffffff;border:0.4px solid #e3e5e9;border-radius:0.8px"></div>
<svg style="position:absolute;left:692.85px;top:478.60px;" width="2.4" height="2.4" viewBox="0 0 2.4 2.4"><rect x="0.2" y="0.2" width="2" height="2" fill="none" stroke="#666" stroke-width="0.3"/></svg>
<div class="r" style="left:700.50px;top:476.20px;width:6.50px;height:7.20px;background:#ffffff;border:0.4px solid #e3e5e9;border-radius:0.8px"></div>
<svg style="position:absolute;left:702.55px;top:478.60px;" width="2.4" height="2.4" viewBox="0 0 2.4 2.4"><rect x="0.2" y="0.2" width="2" height="2" fill="none" stroke="#666" stroke-width="0.3"/></svg>
<div class="r" style="left:710.00px;top:476.20px;width:12.00px;height:7.20px;background:#ffffff;border:0.4px solid #e3e5e9;border-radius:0.8px"></div>
<svg style="position:absolute;left:714.80px;top:478.60px;" width="2.4" height="2.4" viewBox="0 0 2.4 2.4"><rect x="0.2" y="0.2" width="2" height="2" fill="none" stroke="#666" stroke-width="0.3"/></svg>
<div class="r" style="left:724.50px;top:476.20px;width:7.00px;height:7.20px;background:#ffffff;border:0.4px solid #e3e5e9;border-radius:0.8px"></div>
<svg style="position:absolute;left:726.80px;top:478.60px;" width="2.4" height="2.4" viewBox="0 0 2.4 2.4"><rect x="0.2" y="0.2" width="2" height="2" fill="none" stroke="#666" stroke-width="0.3"/></svg>
<div class="r" style="left:735.50px;top:476.20px;width:13.00px;height:7.20px;background:#ffffff;border:0.4px solid #e3e5e9;border-radius:0.8px"></div>
<svg style="position:absolute;left:740.80px;top:478.60px;" width="2.4" height="2.4" viewBox="0 0 2.4 2.4"><rect x="0.2" y="0.2" width="2" height="2" fill="none" stroke="#666" stroke-width="0.3"/></svg>
<div class="r" style="left:459.30px;top:485.50px;width:293.00px;height:0.40px;background:#eceef1;"></div>
<svg style="position:absolute;left:0;top:0" width="1200" height="630" viewBox="0 0 1200 630"><rect x="496" y="489" width="14" height="64.6" fill="#dfe6f6"/><rect x="566" y="489" width="15.700000000000045" height="64.6" fill="#dfe6f6"/><rect x="645" y="489" width="15.799999999999955" height="64.6" fill="#dfe6f6"/><path d="M475 489 V553.6 H674.4" fill="none" stroke="#c5cbd2" stroke-width="0.4"/><path d="M469.6 489 V553.6" fill="none" stroke="#7cc3cc" stroke-width="0.4"/><path d="M475 502.8 H674.4" stroke="#d9b8c2" stroke-width="0.45"/><path d="M475 527.8 H674.4" stroke="#ebc9cf" stroke-width="0.45"/><path d="M466 489.7 H468" stroke="#9ccfd5" stroke-width="0.4"/><path d="M471.5 489.7 H473.5" stroke="#d9b0bd" stroke-width="0.4"/><path d="M466 500 H468" stroke="#9ccfd5" stroke-width="0.4"/><path d="M471.5 500 H473.5" stroke="#d9b0bd" stroke-width="0.4"/><path d="M466 510 H468" stroke="#9ccfd5" stroke-width="0.4"/><path d="M471.5 510 H473.5" stroke="#d9b0bd" stroke-width="0.4"/><path d="M466 519 H468" stroke="#9ccfd5" stroke-width="0.4"/><path d="M471.5 519 H473.5" stroke="#d9b0bd" stroke-width="0.4"/><path d="M466 527.8 H468" stroke="#9ccfd5" stroke-width="0.4"/><path d="M471.5 527.8 H473.5" stroke="#d9b0bd" stroke-width="0.4"/><path d="M466 536.5 H468" stroke="#9ccfd5" stroke-width="0.4"/><path d="M471.5 536.5 H473.5" stroke="#d9b0bd" stroke-width="0.4"/><path d="M466 545 H468" stroke="#9ccfd5" stroke-width="0.4"/><path d="M471.5 545 H473.5" stroke="#d9b0bd" stroke-width="0.4"/><path d="M466 553 H468" stroke="#9ccfd5" stroke-width="0.4"/><path d="M471.5 553 H473.5" stroke="#d9b0bd" stroke-width="0.4"/><path d="M475.0 532.0 L475.6 531.8 L476.2 529.9 L476.8 530.1 L477.4 528.7 L478.0 527.9 L478.6 525.6 L479.2 521.5 L479.8 518.1 L480.4 519.0 L481.0 521.6 L481.6 523.4 L482.2 525.8 L482.8 526.5 L483.4 528.3 L484.0 529.8 L484.6 529.3 L485.2 529.2 L485.8 529.2 L486.4 529.9 L487.0 529.9 L487.6 529.8 L488.2 530.0 L488.8 529.3 L489.4 530.0 L490.0 530.1 L490.6 527.4 L491.2 523.6 L491.8 520.8 L492.4 500.0 L493.0 494.6 L493.6 498.9 L494.2 505.3 L494.8 523.1 L495.4 526.9 L496.0 528.4 L496.6 528.2 L497.2 527.8 L497.8 528.2 L498.4 528.3 L499.0 528.5 L499.6 527.9 L500.2 527.7 L500.8 527.7 L501.4 527.5 L502.0 528.0 L502.6 527.6 L503.2 528.5 L503.8 527.1 L504.4 527.5 L505.0 527.5 L505.6 527.2 L506.2 529.4 L506.8 527.4 L507.4 528.7 L508.0 528.7 L508.6 531.2 L509.2 530.8 L509.8 533.7 L510.4 534.2 L511.0 535.9 L511.6 535.4 L512.2 535.8 L512.8 534.6 L513.4 534.9 L514.0 534.8 L514.6 535.3 L515.2 532.9 L515.8 534.6 L516.4 534.1 L517.0 533.1 L517.6 533.2 L518.2 532.6 L518.8 533.4 L519.4 532.4 L520.0 531.9 L520.6 531.9 L521.2 531.9 L521.8 531.9 L522.4 531.6 L523.0 533.0 L523.6 531.0 L524.2 530.2 L524.8 531.9 L525.4 531.9 L526.0 532.2 L526.6 532.6 L527.2 533.4 L527.8 534.4 L528.4 535.5 L529.0 535.5 L529.6 536.3 L530.2 537.5 L530.8 535.4 L531.4 533.2 L532.0 533.5 L532.6 531.3 L533.2 529.7 L533.8 529.4 L534.4 530.1 L535.0 529.5 L535.6 529.3 L536.2 529.2 L536.8 529.5 L537.4 530.3 L538.0 529.5 L538.6 528.9 L539.2 530.0 L539.8 529.6 L540.4 530.0 L541.0 530.1 L541.6 529.4 L542.2 529.4 L542.8 529.4 L543.4 528.8 L544.0 529.7 L544.6 530.0 L545.2 529.4 L545.8 529.1 L546.4 529.1 L547.0 528.8 L547.6 528.7 L548.2 528.9 L548.8 528.6 L549.4 528.8 L550.0 528.2 L550.6 529.4 L551.2 529.4 L551.8 529.0 L552.4 528.7 L553.0 530.0 L553.6 530.8 L554.2 530.0 L554.8 530.4 L555.4 530.5 L556.0 531.3 L556.6 530.8 L557.2 531.9 L557.8 531.5 L558.4 532.4 L559.0 532.1 L559.6 532.2 L560.2 531.8 L560.8 532.5 L561.4 532.9 L562.0 533.6 L562.6 533.6 L563.2 533.4 L563.8 534.1 L564.4 534.7 L565.0 534.4 L565.6 534.6 L566.2 534.9 L566.8 535.8 L567.4 536.0 L568.0 535.5 L568.6 536.5 L569.2 536.4 L569.8 536.5 L570.4 537.8 L571.0 537.9 L571.6 537.4 L572.2 538.0 L572.8 538.3 L573.4 537.7 L574.0 537.9 L574.6 538.3 L575.2 537.1 L575.8 538.2 L576.4 538.4 L577.0 538.3 L577.6 537.3 L578.2 538.2 L578.8 537.6 L579.4 538.3 L580.0 538.3 L580.6 538.1 L581.2 537.6 L581.8 537.7 L582.4 538.4 L583.0 537.6 L583.6 538.2 L584.2 538.3 L584.8 537.9 L585.4 539.2 L586.0 538.0 L586.6 539.1 L587.2 537.0 L587.8 536.9 L588.4 538.5 L589.0 538.3 L589.6 537.8 L590.2 538.0 L590.8 537.0 L591.4 537.5 L592.0 537.3 L592.6 537.6 L593.2 538.1 L593.8 537.6 L594.4 537.7 L595.0 537.2 L595.6 537.2 L596.2 537.4 L596.8 537.2 L597.4 537.9 L598.0 536.8 L598.6 538.1 L599.2 536.6 L599.8 537.5 L600.4 536.6 L601.0 537.8 L601.6 537.0 L602.2 537.1 L602.8 537.2 L603.4 536.5 L604.0 536.2 L604.6 535.7 L605.2 537.3 L605.8 536.3 L606.4 536.3 L607.0 536.5 L607.6 537.5 L608.2 535.6 L608.8 536.6 L609.4 536.2 L610.0 536.6 L610.6 535.4 L611.2 536.1 L611.8 536.7 L612.4 537.0 L613.0 537.0 L613.6 535.7 L614.2 536.1 L614.8 536.0 L615.4 535.3 L616.0 535.3 L616.6 531.3 L617.2 526.0 L617.8 520.8 L618.4 516.4 L619.0 506.4 L619.6 507.6 L620.2 518.0 L620.8 524.3 L621.4 530.9 L622.0 537.1 L622.6 537.1 L623.2 537.1 L623.8 537.9 L624.4 536.7 L625.0 537.3 L625.6 537.1 L626.2 536.6 L626.8 537.1 L627.4 536.3 L628.0 537.2 L628.6 536.2 L629.2 536.4 L629.8 536.7 L630.4 536.9 L631.0 537.0 L631.6 536.9 L632.2 536.3 L632.8 535.9 L633.4 536.6 L634.0 536.5 L634.6 535.8 L635.2 536.8 L635.8 536.3 L636.4 535.7 L637.0 536.4 L637.6 535.5 L638.2 535.7 L638.8 536.3 L639.4 535.3 L640.0 536.0 L640.6 535.1 L641.2 536.0 L641.8 535.1 L642.4 535.4 L643.0 534.3 L643.6 534.7 L644.2 535.2 L644.8 534.8 L645.4 533.5 L646.0 534.7 L646.6 534.5 L647.2 533.7 L647.8 534.4 L648.4 533.0 L649.0 533.3 L649.6 533.7 L650.2 533.6 L650.8 533.6 L651.4 532.3 L652.0 531.9 L652.6 532.9 L653.2 532.0 L653.8 532.6 L654.4 531.9 L655.0 533.0 L655.6 532.8 L656.2 532.7 L656.8 532.3 L657.4 532.3 L658.0 532.1 L658.6 532.3 L659.2 532.2 L659.8 532.2 L660.4 531.8 L661.0 533.0 L661.6 532.3 L662.2 532.9 L662.8 532.9 L663.4 531.8 L664.0 531.4 L664.6 533.0 L665.2 532.2 L665.8 532.5 L666.4 532.3 L667.0 532.6 L667.6 531.9 L668.2 532.5 L668.8 532.4 L669.4 532.7 L670.0 531.5 L670.6 533.2 L671.2 533.0 L671.8 532.0 L672.4 532.5 L673.0 532.9 L673.6 533.3" fill="none" stroke="#b98fa8" stroke-width="0.7"/><path d="M475.0 538.0 L475.6 538.9 L476.2 538.0 L476.8 537.2 L477.4 537.4 L478.0 538.4 L478.6 537.4 L479.2 538.4 L479.8 538.5 L480.4 538.2 L481.0 538.5 L481.6 537.6 L482.2 537.7 L482.8 537.3 L483.4 537.2 L484.0 536.5 L484.6 537.2 L485.2 536.8 L485.8 536.6 L486.4 537.6 L487.0 537.8 L487.6 537.3 L488.2 538.4 L488.8 538.1 L489.4 538.2 L490.0 537.0 L490.6 536.3 L491.2 537.7 L491.8 537.5 L492.4 537.8 L493.0 537.6 L493.6 538.1 L494.2 537.0 L494.8 537.7 L495.4 536.6 L496.0 535.5 L496.6 536.8 L497.2 538.2 L497.8 535.9 L498.4 537.8 L499.0 536.6 L499.6 536.7 L500.2 537.0 L500.8 537.2 L501.4 536.4 L502.0 537.2 L502.6 537.5 L503.2 537.8 L503.8 536.7 L504.4 538.4 L505.0 538.7 L505.6 539.1 L506.2 536.5 L506.8 537.6 L507.4 536.2 L508.0 537.8 L508.6 538.0 L509.2 536.8 L509.8 536.5 L510.4 537.8 L511.0 538.2 L511.6 537.2 L512.2 537.6 L512.8 536.1 L513.4 537.4 L514.0 538.0 L514.6 538.1 L515.2 539.1 L515.8 537.3 L516.4 536.5 L517.0 538.4 L517.6 537.8 L518.2 538.4 L518.8 538.8 L519.4 538.7 L520.0 539.3 L520.6 539.3 L521.2 537.2 L521.8 538.4 L522.4 539.9 L523.0 538.2 L523.6 539.3 L524.2 538.6 L524.8 538.4 L525.4 539.8 L526.0 539.5 L526.6 538.6 L527.2 539.4 L527.8 537.9 L528.4 538.4 L529.0 539.6 L529.6 539.0 L530.2 538.2 L530.8 539.3 L531.4 539.2 L532.0 539.8 L532.6 539.6 L533.2 538.7 L533.8 538.5 L534.4 538.8 L535.0 538.7 L535.6 539.8 L536.2 539.9 L536.8 539.7 L537.4 539.0 L538.0 538.6 L538.6 539.3 L539.2 538.4 L539.8 538.8 L540.4 537.5 L541.0 538.3 L541.6 539.6 L542.2 537.9 L542.8 537.5 L543.4 538.4 L544.0 539.7 L544.6 539.5 L545.2 538.2 L545.8 538.1 L546.4 538.4 L547.0 537.8 L547.6 538.4 L548.2 538.2 L548.8 537.3 L549.4 537.9 L550.0 538.2 L550.6 537.7 L551.2 537.5 L551.8 538.9 L552.4 539.6 L553.0 538.0 L553.6 537.9 L554.2 538.5 L554.8 538.0 L555.4 537.6 L556.0 539.1 L556.6 537.4 L557.2 537.6 L557.8 537.6 L558.4 537.4 L559.0 537.9 L559.6 538.4 L560.2 539.0 L560.8 538.4 L561.4 538.0 L562.0 537.1 L562.6 537.9 L563.2 537.3 L563.8 537.8 L564.4 538.6 L565.0 538.0 L565.6 537.7 L566.2 537.3 L566.8 537.8 L567.4 537.9 L568.0 537.2 L568.6 537.4 L569.2 538.4 L569.8 536.6 L570.4 537.4 L571.0 536.9 L571.6 538.8 L572.2 538.1 L572.8 538.0 L573.4 537.9 L574.0 537.9 L574.6 537.8 L575.2 536.5 L575.8 537.8 L576.4 538.0 L577.0 536.6 L577.6 538.1 L578.2 538.0 L578.8 536.5 L579.4 537.2 L580.0 537.3 L580.6 537.1 L581.2 537.7 L581.8 536.6 L582.4 537.3 L583.0 537.6 L583.6 537.9 L584.2 537.4 L584.8 537.2 L585.4 537.8 L586.0 536.0 L586.6 538.0 L587.2 537.1 L587.8 536.4 L588.4 537.0 L589.0 536.0 L589.6 535.8 L590.2 537.0 L590.8 536.7 L591.4 537.7 L592.0 536.6 L592.6 536.3 L593.2 536.5 L593.8 538.4 L594.4 537.2 L595.0 536.7 L595.6 536.4 L596.2 536.3 L596.8 537.0 L597.4 537.4 L598.0 537.9 L598.6 537.8 L599.2 537.2 L599.8 536.5 L600.4 536.4 L601.0 535.4 L601.6 536.3 L602.2 537.3 L602.8 536.8 L603.4 537.3 L604.0 536.2 L604.6 537.7 L605.2 537.3 L605.8 537.2 L606.4 537.4 L607.0 535.6 L607.6 536.8 L608.2 536.6 L608.8 538.5 L609.4 537.1 L610.0 536.9 L610.6 537.9 L611.2 536.5 L611.8 538.3 L612.4 536.8 L613.0 537.3 L613.6 536.7 L614.2 537.9 L614.8 535.8 L615.4 537.9 L616.0 536.8 L616.6 537.4 L617.2 536.6 L617.8 537.6 L618.4 537.6 L619.0 537.9 L619.6 537.7 L620.2 537.9 L620.8 538.2 L621.4 537.3 L622.0 536.7 L622.6 536.7 L623.2 538.1 L623.8 537.3 L624.4 538.3 L625.0 537.7 L625.6 536.9 L626.2 538.3 L626.8 539.0 L627.4 537.6 L628.0 537.0 L628.6 537.1 L629.2 538.4 L629.8 537.3 L630.4 537.5 L631.0 538.3 L631.6 537.8 L632.2 537.9 L632.8 537.4 L633.4 537.4 L634.0 538.0 L634.6 538.0 L635.2 538.3 L635.8 537.5 L636.4 538.2 L637.0 538.3 L637.6 538.0 L638.2 538.4 L638.8 538.7 L639.4 538.1 L640.0 538.1 L640.6 537.3 L641.2 538.2 L641.8 537.8 L642.4 537.6 L643.0 537.2 L643.6 538.2 L644.2 539.5 L644.8 538.0 L645.4 537.7 L646.0 538.0 L646.6 537.2 L647.2 537.6 L647.8 537.1 L648.4 537.1 L649.0 537.6 L649.6 537.6 L650.2 537.3 L650.8 536.8 L651.4 537.5 L652.0 536.5 L652.6 537.8 L653.2 537.0 L653.8 537.2 L654.4 537.7 L655.0 537.5 L655.6 536.2 L656.2 536.9 L656.8 537.3 L657.4 536.2 L658.0 535.3 L658.6 536.9 L659.2 536.8 L659.8 537.1 L660.4 536.9 L661.0 536.9 L661.6 536.9 L662.2 537.7 L662.8 537.0 L663.4 537.0 L664.0 536.3 L664.6 537.3 L665.2 536.4 L665.8 537.0 L666.4 535.0 L667.0 536.6 L667.6 536.3 L668.2 536.0 L668.8 537.2 L669.4 536.6 L670.0 536.1 L670.6 535.8 L671.2 537.5 L671.8 536.7 L672.4 536.6 L673.0 535.5 L673.6 536.9" fill="none" stroke="#3f6f68" stroke-width="0.7"/><path d="M475.0 537.3 L475.6 537.0 L476.2 537.3 L476.8 536.6 L477.4 538.2 L478.0 537.3 L478.6 538.2 L479.2 537.1 L479.8 536.7 L480.4 537.0 L481.0 536.6 L481.6 535.5 L482.2 536.1 L482.8 536.8 L483.4 536.5 L484.0 536.2 L484.6 537.2 L485.2 537.0 L485.8 537.6 L486.4 537.9 L487.0 537.7 L487.6 537.5 L488.2 536.5 L488.8 537.5 L489.4 537.0 L490.0 536.8 L490.6 536.9 L491.2 537.8 L491.8 535.6 L492.4 535.2 L493.0 536.5 L493.6 535.8 L494.2 537.4 L494.8 536.3 L495.4 536.9 L496.0 538.0 L496.6 538.3 L497.2 538.2 L497.8 538.0 L498.4 537.5 L499.0 537.1 L499.6 537.0 L500.2 536.9 L500.8 533.8 L501.4 530.7 L502.0 528.2 L502.6 532.1 L503.2 535.9 L503.8 536.9 L504.4 536.8 L505.0 537.0 L505.6 538.2 L506.2 536.7 L506.8 537.3 L507.4 535.5 L508.0 536.8 L508.6 535.4 L509.2 535.5 L509.8 535.7 L510.4 536.0 L511.0 536.3 L511.6 536.5 L512.2 536.6 L512.8 536.3 L513.4 538.2 L514.0 537.0 L514.6 537.3 L515.2 538.2 L515.8 537.7 L516.4 537.6 L517.0 537.6 L517.6 538.6 L518.2 537.0 L518.8 537.2 L519.4 538.0 L520.0 536.8 L520.6 537.6 L521.2 538.7 L521.8 537.8 L522.4 538.2 L523.0 538.6 L523.6 537.5 L524.2 538.4 L524.8 537.9 L525.4 537.6 L526.0 538.1 L526.6 538.3 L527.2 538.1 L527.8 538.0 L528.4 539.0 L529.0 539.1 L529.6 538.8 L530.2 538.5 L530.8 537.9 L531.4 538.1 L532.0 537.9 L532.6 538.8 L533.2 539.2 L533.8 539.2 L534.4 538.7 L535.0 538.5 L535.6 538.9 L536.2 538.9 L536.8 539.2 L537.4 539.7 L538.0 538.5 L538.6 540.2 L539.2 537.7 L539.8 537.9 L540.4 538.0 L541.0 538.2 L541.6 538.5 L542.2 539.8 L542.8 538.0 L543.4 539.0 L544.0 538.0 L544.6 538.2 L545.2 537.4 L545.8 539.2 L546.4 537.7 L547.0 537.2 L547.6 538.8 L548.2 537.5 L548.8 537.5 L549.4 537.0 L550.0 536.5 L550.6 536.0 L551.2 536.7 L551.8 537.6 L552.4 536.8 L553.0 536.3 L553.6 536.9 L554.2 535.6 L554.8 536.9 L555.4 535.9 L556.0 535.2 L556.6 535.9 L557.2 535.7 L557.8 535.0 L558.4 535.2 L559.0 535.4 L559.6 535.5 L560.2 534.0 L560.8 532.8 L561.4 535.4 L562.0 533.8 L562.6 522.4 L563.2 519.5 L563.8 531.5 L564.4 536.6 L565.0 535.3 L565.6 535.9 L566.2 531.7 L566.8 522.5 L567.4 525.1 L568.0 536.7 L568.6 536.8 L569.2 535.3 L569.8 535.9 L570.4 536.4 L571.0 536.0 L571.6 535.9 L572.2 536.5 L572.8 536.5 L573.4 535.6 L574.0 535.9 L574.6 536.4 L575.2 536.1 L575.8 536.1 L576.4 535.3 L577.0 537.0 L577.6 535.9 L578.2 536.2 L578.8 536.0 L579.4 536.0 L580.0 536.1 L580.6 535.5 L581.2 536.2 L581.8 536.7 L582.4 536.2 L583.0 536.4 L583.6 536.3 L584.2 536.0 L584.8 537.1 L585.4 535.6 L586.0 536.2 L586.6 536.6 L587.2 536.2 L587.8 535.4 L588.4 541.0 L589.0 543.9 L589.6 542.4 L590.2 543.0 L590.8 543.3 L591.4 543.1 L592.0 541.9 L592.6 541.9 L593.2 542.9 L593.8 542.5 L594.4 542.8 L595.0 543.1 L595.6 543.1 L596.2 542.2 L596.8 542.0 L597.4 543.6 L598.0 542.6 L598.6 542.3 L599.2 541.8 L599.8 543.3 L600.4 542.2 L601.0 542.4 L601.6 543.4 L602.2 543.2 L602.8 543.3 L603.4 542.2 L604.0 541.3 L604.6 542.4 L605.2 542.8 L605.8 542.6 L606.4 543.5 L607.0 543.2 L607.6 542.4 L608.2 543.3 L608.8 542.9 L609.4 542.7 L610.0 543.7 L610.6 536.0 L611.2 537.7 L611.8 537.8 L612.4 536.0 L613.0 537.2 L613.6 537.3 L614.2 536.8 L614.8 537.3 L615.4 537.2 L616.0 537.8 L616.6 537.5 L617.2 536.6 L617.8 538.7 L618.4 538.6 L619.0 537.7 L619.6 538.8 L620.2 539.5 L620.8 537.5 L621.4 538.3 L622.0 538.3 L622.6 539.0 L623.2 538.6 L623.8 538.0 L624.4 539.7 L625.0 538.8 L625.6 539.3 L626.2 540.0 L626.8 538.0 L627.4 538.1 L628.0 538.7 L628.6 537.9 L629.2 538.1 L629.8 537.6 L630.4 539.1 L631.0 537.7 L631.6 537.3 L632.2 536.3 L632.8 534.0 L633.4 530.4 L634.0 528.8 L634.6 527.0 L635.2 526.7 L635.8 534.6 L636.4 532.1 L637.0 524.7 L637.6 533.7 L638.2 537.4 L638.8 537.1 L639.4 536.4 L640.0 536.9 L640.6 536.6 L641.2 536.7 L641.8 536.8 L642.4 538.1 L643.0 537.4 L643.6 537.6 L644.2 537.3 L644.8 538.1 L645.4 536.0 L646.0 535.6 L646.6 536.4 L647.2 536.4 L647.8 536.2 L648.4 535.8 L649.0 536.5 L649.6 537.1 L650.2 536.1 L650.8 535.9 L651.4 536.8 L652.0 535.9 L652.6 535.9 L653.2 536.3 L653.8 534.8 L654.4 537.3 L655.0 536.1 L655.6 536.5 L656.2 536.4 L656.8 536.5 L657.4 535.5 L658.0 537.4 L658.6 536.7 L659.2 536.6 L659.8 538.3 L660.4 535.7 L661.0 536.9 L661.6 536.4 L662.2 535.6 L662.8 537.7 L663.4 535.6 L664.0 536.7 L664.6 536.6 L665.2 536.7 L665.8 536.1 L666.4 537.5 L667.0 536.9 L667.6 536.0 L668.2 536.0 L668.8 537.0 L669.4 536.1 L670.0 537.1 L670.6 537.1 L671.2 536.5 L671.8 535.8 L672.4 536.2 L673.0 537.2 L673.6 536.7" fill="none" stroke="#2a9a90" stroke-width="0.8"/><path d="M592 543.5 V535" stroke="#2fa39a" stroke-width="0.4"/><path d="M469.5 571 V623.6 H676" fill="none" stroke="#c5cbd2" stroke-width="0.4"/><path d="M469.5 585.6 H676" stroke="#ebc9cf" stroke-width="0.45"/><path d="M467.5 573 H469.5" stroke="#c5cbd2" stroke-width="0.35"/><path d="M467.5 585.6 H469.5" stroke="#c5cbd2" stroke-width="0.35"/><path d="M467.5 596 H469.5" stroke="#c5cbd2" stroke-width="0.35"/><path d="M467.5 606 H469.5" stroke="#c5cbd2" stroke-width="0.35"/><path d="M467.5 616 H469.5" stroke="#c5cbd2" stroke-width="0.35"/><path d="M469.6 576.0 L472.0 580.0 L476.0 583.5 L480.0 585.0 L520.0 592.0 L559.0 598.6 L600.0 605.5 L630.0 610.0 L645.0 612.5 L652.0 615.0 L656.0 618.5 L659.0 624.0" fill="none" stroke="#9b86a6" stroke-width="0.55"/><path d="M470.0 572.0 L471.0 576.0 L472.5 584.0 L474.0 590.0 L476.0 593.5 L480.0 595.0 L500.0 596.0 L530.0 597.3 L559.0 598.6 L600.0 603.0 L630.0 606.5 L645.0 609.5 L652.0 612.0 L656.0 615.5 L659.0 619.5 L661.0 624.0" fill="none" stroke="#5fb2ad" stroke-width="0.55"/><path d="M470 572 V578" stroke="#5fb2ad" stroke-width="0.5"/></svg>
<div class="t" style="left:663.00px;top:490.00px;font-size:2.0px;color:#6b7079;font-weight:400;">Zoom &#9906;</div>
<div class="t" style="left:657.00px;top:502.00px;font-size:1.8px;color:#7a7f88;font-weight:400;">&#9632; Threshold_value</div>
<div class="t" style="left:280.00px;width:400px;text-align:center;top:557.00px;font-size:1.7px;color:#8a8f98;font-weight:400;">2023-01</div>
<div class="t" style="left:296.10px;width:400px;text-align:center;top:557.00px;font-size:1.7px;color:#8a8f98;font-weight:400;">Feb</div>
<div class="t" style="left:312.20px;width:400px;text-align:center;top:557.00px;font-size:1.7px;color:#8a8f98;font-weight:400;">Mar</div>
<div class="t" style="left:328.30px;width:400px;text-align:center;top:557.00px;font-size:1.7px;color:#8a8f98;font-weight:400;">Apr</div>
<div class="t" style="left:344.40px;width:400px;text-align:center;top:557.00px;font-size:1.7px;color:#8a8f98;font-weight:400;">Mai</div>
<div class="t" style="left:360.50px;width:400px;text-align:center;top:557.00px;font-size:1.7px;color:#8a8f98;font-weight:400;">Jun</div>
<div class="t" style="left:376.60px;width:400px;text-align:center;top:557.00px;font-size:1.7px;color:#8a8f98;font-weight:400;">Jul</div>
<div class="t" style="left:392.70px;width:400px;text-align:center;top:557.00px;font-size:1.7px;color:#8a8f98;font-weight:400;">Aug</div>
<div class="t" style="left:408.80px;width:400px;text-align:center;top:557.00px;font-size:1.7px;color:#8a8f98;font-weight:400;">Sep</div>
<div class="t" style="left:424.90px;width:400px;text-align:center;top:557.00px;font-size:1.7px;color:#8a8f98;font-weight:400;">Okt</div>
<div class="t" style="left:441.00px;width:400px;text-align:center;top:557.00px;font-size:1.7px;color:#8a8f98;font-weight:400;">Nov</div>
<div class="t" style="left:457.10px;width:400px;text-align:center;top:557.00px;font-size:1.7px;color:#8a8f98;font-weight:400;">Des</div>
<div class="t" style="left:473.20px;width:400px;text-align:center;top:557.00px;font-size:1.7px;color:#8a8f98;font-weight:400;">2024</div>
<svg style="position:absolute;left:467.00px;top:564.30px;" width="2" height="2" viewBox="0 0 2 2"><circle cx="1" cy="1" r="0.8" fill="#2fa39a"/></svg>
<div class="t" style="left:469.50px;top:566.00px;font-size:1.9px;color:#6b7079;font-weight:400;">0193 Andeby - Tiltvdy, Aktiv power</div>
<svg style="position:absolute;left:508.00px;top:564.30px;" width="2" height="2" viewBox="0 0 2 2"><circle cx="1" cy="1" r="0.8" fill="#4d5f7a"/></svg>
<div class="t" style="left:510.50px;top:566.00px;font-size:1.9px;color:#6b7079;font-weight:400;">0193 Tiltvdy - Andeby, Aktiv power</div>
<div class="t" style="left:632.50px;top:565.00px;font-size:2.0px;color:#6b7079;font-weight:400;">Zoom &#9906;</div>
<svg style="position:absolute;left:645.00px;top:564.00px;" width="2.4" height="2.4" viewBox="0 0 2.4 2.4"><rect x="0.2" y="0.2" width="2" height="2" fill="none" stroke="#777" stroke-width="0.3"/></svg>
<svg style="position:absolute;left:649.60px;top:564.00px;" width="2.4" height="2.4" viewBox="0 0 2.4 2.4"><rect x="0.2" y="0.2" width="2" height="2" fill="none" stroke="#777" stroke-width="0.3"/></svg>
<svg style="position:absolute;left:654.20px;top:564.00px;" width="2.4" height="2.4" viewBox="0 0 2.4 2.4"><rect x="0.2" y="0.2" width="2" height="2" fill="none" stroke="#777" stroke-width="0.3"/></svg>
<svg style="position:absolute;left:658.80px;top:564.00px;" width="2.4" height="2.4" viewBox="0 0 2.4 2.4"><rect x="0.2" y="0.2" width="2" height="2" fill="none" stroke="#777" stroke-width="0.3"/></svg>
<svg style="position:absolute;left:663.40px;top:564.00px;" width="2.4" height="2.4" viewBox="0 0 2.4 2.4"><rect x="0.2" y="0.2" width="2" height="2" fill="none" stroke="#777" stroke-width="0.3"/></svg>
<svg style="position:absolute;left:668.00px;top:564.00px;" width="2.4" height="2.4" viewBox="0 0 2.4 2.4"><rect x="0.2" y="0.2" width="2" height="2" fill="none" stroke="#777" stroke-width="0.3"/></svg>
<svg style="position:absolute;left:672.60px;top:564.00px;" width="2.4" height="2.4" viewBox="0 0 2.4 2.4"><rect x="0.2" y="0.2" width="2" height="2" fill="none" stroke="#777" stroke-width="0.3"/></svg>
<div class="t" style="left:276.00px;width:400px;text-align:right;top:570.00px;font-size:1.8px;color:#555a63;font-weight:400;">&#9632; Threshold value</div>
<div class="t" style="left:276.00px;width:400px;text-align:right;top:573.00px;font-size:1.8px;color:#555a63;font-weight:400;">&#8211; Tiltvdy</div>
<div class="t" style="left:682.50px;top:491.00px;font-size:2.7px;color:#30343b;font-weight:700;">Time series</div>
<div class="r" style="left:736.50px;top:488.80px;width:11.80px;height:5.20px;background:#ffffff;border:0.4px solid #e3e5e9;border-radius:0.8px"></div>
<div class="t" style="left:738.50px;top:492.00px;font-size:1.9px;color:#40454e;font-weight:700;">Hide &#9656;</div>
<div class="r" style="left:683.00px;top:499.00px;width:65.30px;height:6.60px;background:#ffffff;border:0.4px solid #e3e5e9;border-radius:0.8px;box-shadow:0 0.3px 0.6px rgba(0,0,0,0.05)"></div>
<div class="r" style="left:685.20px;top:501.60px;width:1.40px;height:1.40px;background:#2fa39a;"></div>
<div class="t" style="left:688.80px;top:503.00px;font-size:1.7px;color:#50555e;font-weight:400;">0193 Andeby - Tiltvdy, Aktiv power_value</div>
<svg style="position:absolute;left:744.00px;top:501.60px;" width="1.6" height="1.2" viewBox="0 0 1.6 1.2"><path d="M0.2 0.2L0.8 0.9L1.4 0.2" fill="none" stroke="#555" stroke-width="0.3"/></svg>
<div class="r" style="left:683.00px;top:508.70px;width:65.30px;height:6.60px;background:#ffffff;border:0.4px solid #e3e5e9;border-radius:0.8px;box-shadow:0 0.3px 0.6px rgba(0,0,0,0.05)"></div>
<div class="r" style="left:685.20px;top:511.30px;width:1.40px;height:1.40px;background:#6e5b7f;"></div>
<div class="t" style="left:688.80px;top:513.00px;font-size:1.7px;color:#50555e;font-weight:400;">0193 Tiltvdy - Andeby, Aktiv power_value</div>
<svg style="position:absolute;left:744.00px;top:511.30px;" width="1.6" height="1.2" viewBox="0 0 1.6 1.2"><path d="M0.2 0.2L0.8 0.9L1.4 0.2" fill="none" stroke="#555" stroke-width="0.3"/></svg>
<div class="r" style="left:683.00px;top:518.40px;width:65.30px;height:6.60px;background:#ffffff;border:0.4px solid #e3e5e9;border-radius:0.8px;box-shadow:0 0.3px 0.6px rgba(0,0,0,0.05)"></div>
<div class="r" style="left:685.20px;top:521.00px;width:1.40px;height:1.40px;background:#6b7079;"></div>
<div class="t" style="left:688.80px;top:522.00px;font-size:1.7px;color:#50555e;font-weight:400;">Tiltvdy aktiv power</div>
<svg style="position:absolute;left:744.00px;top:521.00px;" width="1.6" height="1.2" viewBox="0 0 1.6 1.2"><path d="M0.2 0.2L0.8 0.9L1.4 0.2" fill="none" stroke="#555" stroke-width="0.3"/></svg>
<div class="r" style="left:723.00px;top:530.00px;width:25.30px;height:6.20px;background:#dfe5f5;border-radius:0.8px"></div>
<div class="t" style="left:726.50px;top:534.00px;font-size:1.9px;color:#34406a;font-weight:700;">+ Add time series</div>
</div>
<div style="position:absolute;left:0;top:0;width:1200px;height:630px;overflow:hidden;text-rendering:geometricPrecision;clip-path:inset(459.5px 111.40000000000009px 6.0px 795.7px)">
<div class="r" style="left:795.70px;top:459.50px;width:292.90px;height:164.50px;background:#ffffff;"></div>
<div class="r" style="left:795.70px;top:459.50px;width:292.90px;height:4.60px;background:#40464e;"></div>
<div class="r" style="left:795.70px;top:464.10px;width:292.90px;height:1.20px;background:#343940;"></div>
<div class="t" style="left:804.50px;top:462.00px;font-size:3.4px;color:#f2f3f5;font-weight:700;">Statnett</div>
<div class="t" style="left:682.60px;width:400px;text-align:right;top:462.00px;font-size:2.2px;color:#c9ccd2;font-weight:400;">username@statnett.no &#8964;</div>
<div class="r" style="left:795.70px;top:465.30px;width:292.90px;height:8.40px;background:#ffffff;border-bottom:0.4px solid #e6e8ec"></div>
<svg style="position:absolute;left:804.60px;top:468.40px;" width="3.2" height="3.2" viewBox="0 0 3.2 3.2"><circle cx="1.6" cy="1.6" r="1.5" fill="#b8323a"/></svg>
<div class="t" style="left:809.30px;top:469.00px;font-size:3.1px;color:#3a3e45;font-weight:700;">TNT</div>
<div class="t" style="left:822.20px;top:470.00px;font-size:2.3px;color:#7a7f88;font-weight:400;">Components</div>
<div class="t" style="left:839.70px;top:470.00px;font-size:2.3px;color:#7a7f88;font-weight:400;">Chart</div>
<div class="t" style="left:852.20px;top:470.00px;font-size:2.3px;color:#7a7f88;font-weight:400;">My charts</div>
<div class="t" style="left:866.20px;top:470.00px;font-size:2.3px;color:#3b4049;font-weight:700;">Topology</div>
<div class="r" style="left:865.70px;top:473.60px;width:9.00px;height:0.40px;background:#a9aeb5;"></div>
<svg style="position:absolute;left:847.70px;top:468.80px;" width="2.4" height="2.4" viewBox="0 0 2.4 2.4"><circle cx="1.2" cy="1.2" r="1.2" fill="#707b8c"/></svg>
<div class="r" style="left:1022.60px;top:467.80px;width:16.00px;height:4.50px;background:#ffffff;border:0.3px solid #f0f1f3;border-radius:2px"></div>
<div class="t" style="left:1024.60px;top:471.00px;font-size:1.9px;color:#40454e;font-weight:700;">&#9679; CIM 257-2-1_1</div>
<div class="r" style="left:1043.60px;top:467.80px;width:28.00px;height:4.50px;background:#ffffff;border:0.3px solid #f0f1f3;border-radius:2px"></div>
<svg style="position:absolute;left:1044.00px;top:468.40px;" width="3.4" height="3.4" viewBox="0 0 3.4 3.4"><circle cx="1.7" cy="1.7" r="1.6" fill="#b8323a"/></svg>
<div class="t" style="left:1048.00px;top:471.00px;font-size:1.9px;color:#555a63;font-weight:400;">K3 Kraftsensitiv informasjon</div>
<svg style="position:absolute;left:1075.60px;top:468.20px;" width="3.8" height="3.8" viewBox="0 0 3.8 3.8"><circle cx="1.9" cy="1.9" r="1.6" fill="none" stroke="#9a9fa6" stroke-width="0.3"/></svg>
<div class="t" style="left:1081.10px;top:470.00px;font-size:2.0px;color:#555a63;font-weight:700;">About</div>
<div style="position:absolute;left:0;top:0;width:971px;height:630px;overflow:hidden"><svg style="position:absolute;left:0;top:0" width="1200" height="630" viewBox="0 0 1200 630"><rect x="795.7" y="474" width="175.3" height="150" fill="#ededed"/><path d="M795.7 474 H971 V476.5 H795.7 Z" fill="#d2d4d6"/><path d="M795.7 490 L803 492 L806 505 L802 522 L795.7 524 Z" fill="#d2d4d6"/><path d="M836 486 L852 481 L864 486 L861 500 L851 504 L849 520 L847 545 L838 548 L835 530 L840 505 Z" fill="#d2d4d6"/><path d="M808 528 L822 522 L831 532 L827 545 L812 546 Z" fill="#d2d4d6"/><path d="M826 545 L862 548 L866 560 L862 625 L826 625 L822 612 L827 600 L824 570 Z" fill="#d2d4d6"/><path d="M882 474 L918 474 L916 486 L898 488 L884 485 Z" fill="#d2d4d6"/><path d="M950 596 L965 591 L971 598 L971 613 L958 615 L949 606 Z" fill="#d2d4d6"/><path d="M903 612 L920 604 L931 614 L929 625 L902 625 Z" fill="#d2d4d6"/><path d="M862 548 L880 545 L893 552 L890 566 L876 564 L866 557 Z" fill="#d2d4d6"/><path d="M856 520 L868 515 L881 526 L873 541 L860 539 Z" fill="#d2d4d6"/><path d="M810 474 L830 474 L828 482 L814 484 Z" fill="#d2d4d6"/><path d="M958 520 L971 516 L971 545 L962 540 Z" fill="#d2d4d6"/><path d="M836 550 L851 548 L853 565 L848 576 L842 590 L835 587 L838 570 Z" fill="#ececec"/><path d="M901 562 L928 567 L957 594.5 L880 603 L878 580 Z" fill="#d9dadb" fill-opacity="0.7" stroke="#6b6e72" stroke-width="0.55"/><path d="M843 470 L823.3 510.6" stroke="#e3f1e3" stroke-width="1.6"/><path d="M795.7 519 L804.8 525.8" stroke="#e3f1e3" stroke-width="1.6"/><path d="M804.8 525.8 L823.3 510.6" stroke="#e3f1e3" stroke-width="1.6"/><path d="M804.8 525.8 L797 626" stroke="#e3f1e3" stroke-width="1.6"/><path d="M823.3 510.6 L857 508.1" stroke="#e3f1e3" stroke-width="1.6"/><path d="M857 508.1 L878.6 510.6" stroke="#e3f1e3" stroke-width="1.6"/><path d="M878.6 510.6 L895.8 488.9" stroke="#e3f1e3" stroke-width="1.6"/><path d="M895.8 488.9 L906.9 486" stroke="#e3f1e3" stroke-width="1.6"/><path d="M906.9 486 L930.2 503.2" stroke="#e3f1e3" stroke-width="1.6"/><path d="M917.2 470 L930.2 503.2" stroke="#e3f1e3" stroke-width="1.6"/><path d="M930.2 503.2 L944.2 502.5" stroke="#e3f1e3" stroke-width="1.6"/><path d="M878.6 510.6 L908.1 529" stroke="#e3f1e3" stroke-width="1.6"/><path d="M908.1 529 L937.6 525.3" stroke="#e3f1e3" stroke-width="1.6"/><path d="M930.2 503.2 L908.1 529" stroke="#e3f1e3" stroke-width="1.6"/><path d="M944.2 502.5 L951.1 547.5" stroke="#e3f1e3" stroke-width="1.6"/><path d="M975 478 L944.2 502.5" stroke="#e3f1e3" stroke-width="1.6"/><path d="M930.2 503.2 L951.1 547.5" stroke="#e3f1e3" stroke-width="1.6"/><path d="M937.6 525.3 L951.1 547.5" stroke="#e3f1e3" stroke-width="1.6"/><path d="M937.6 525.3 L931.5 590.5" stroke="#e3f1e3" stroke-width="1.6"/><path d="M944.2 502.5 L933 590.5" stroke="#e3f1e3" stroke-width="1.6"/><path d="M930.2 570.3 L931.5 590.5" stroke="#e3f1e3" stroke-width="1.6"/><path d="M894.6 574.5 L930.2 570.3" stroke="#e3f1e3" stroke-width="1.6"/><path d="M894.6 574.5 L882.3 595.4" stroke="#e3f1e3" stroke-width="1.6"/><path d="M882.3 595.4 L931.5 590.5" stroke="#e3f1e3" stroke-width="1.6"/><path d="M931.5 590.5 L955 626" stroke="#e3f1e3" stroke-width="1.6"/><path d="M931.5 590.5 L947 626" stroke="#e3f1e3" stroke-width="1.6"/><path d="M938 470 L944.2 502.5" stroke="#e3f1e3" stroke-width="1.6"/><path d="M897 470 L906.9 486" stroke="#e3f1e3" stroke-width="1.6"/><path d="M843 470 L823.3 510.6" stroke="#5aa55e" stroke-width="0.6"/><path d="M795.7 519 L804.8 525.8" stroke="#5aa55e" stroke-width="0.6"/><path d="M804.8 525.8 L823.3 510.6" stroke="#5aa55e" stroke-width="0.6"/><path d="M804.8 525.8 L797 626" stroke="#5aa55e" stroke-width="0.6"/><path d="M823.3 510.6 L857 508.1" stroke="#5aa55e" stroke-width="0.6"/><path d="M857 508.1 L878.6 510.6" stroke="#5aa55e" stroke-width="0.6"/><path d="M878.6 510.6 L895.8 488.9" stroke="#5aa55e" stroke-width="0.6"/><path d="M895.8 488.9 L906.9 486" stroke="#5aa55e" stroke-width="0.6"/><path d="M906.9 486 L930.2 503.2" stroke="#5aa55e" stroke-width="0.6"/><path d="M917.2 470 L930.2 503.2" stroke="#5aa55e" stroke-width="0.6"/><path d="M930.2 503.2 L944.2 502.5" stroke="#5aa55e" stroke-width="0.6"/><path d="M878.6 510.6 L908.1 529" stroke="#5aa55e" stroke-width="0.6"/><path d="M908.1 529 L937.6 525.3" stroke="#5aa55e" stroke-width="0.6"/><path d="M930.2 503.2 L908.1 529" stroke="#5aa55e" stroke-width="0.6"/><path d="M944.2 502.5 L951.1 547.5" stroke="#5aa55e" stroke-width="0.6"/><path d="M975 478 L944.2 502.5" stroke="#5aa55e" stroke-width="0.6"/><path d="M930.2 503.2 L951.1 547.5" stroke="#5aa55e" stroke-width="0.6"/><path d="M937.6 525.3 L951.1 547.5" stroke="#5aa55e" stroke-width="0.6"/><path d="M937.6 525.3 L931.5 590.5" stroke="#5aa55e" stroke-width="0.6"/><path d="M944.2 502.5 L933 590.5" stroke="#5aa55e" stroke-width="0.6"/><path d="M930.2 570.3 L931.5 590.5" stroke="#5aa55e" stroke-width="0.6"/><path d="M894.6 574.5 L930.2 570.3" stroke="#5aa55e" stroke-width="0.6"/><path d="M894.6 574.5 L882.3 595.4" stroke="#5aa55e" stroke-width="0.6"/><path d="M882.3 595.4 L931.5 590.5" stroke="#5aa55e" stroke-width="0.6"/><path d="M931.5 590.5 L955 626" stroke="#5aa55e" stroke-width="0.6"/><path d="M931.5 590.5 L947 626" stroke="#5aa55e" stroke-width="0.6"/><path d="M938 470 L944.2 502.5" stroke="#5aa55e" stroke-width="0.6"/><path d="M897 470 L906.9 486" stroke="#5aa55e" stroke-width="0.6"/><path d="M795.7 477 L823.3 510.6" stroke="#dde6f5" stroke-width="1.6"/><path d="M857 508.1 L931.5 590.5" stroke="#dde6f5" stroke-width="1.6"/><path d="M975 528 L931.5 590.5" stroke="#dde6f5" stroke-width="1.6"/><path d="M975 524 L929.5 590.5" stroke="#dde6f5" stroke-width="1.6"/><path d="M931.5 590.5 L975 575" stroke="#dde6f5" stroke-width="1.6"/><path d="M795.7 477 L823.3 510.6" stroke="#4b72c4" stroke-width="0.65"/><path d="M857 508.1 L931.5 590.5" stroke="#4b72c4" stroke-width="0.65"/><path d="M975 528 L931.5 590.5" stroke="#4b72c4" stroke-width="0.65"/><path d="M975 524 L929.5 590.5" stroke="#4b72c4" stroke-width="0.65"/><path d="M931.5 590.5 L975 575" stroke="#4b72c4" stroke-width="0.65"/><rect x="804.0" y="525.0" width="1.6" height="1.6" fill="#fff" stroke="#888" stroke-width="0.2"/><rect x="822.5" y="509.8" width="1.6" height="1.6" fill="#fff" stroke="#888" stroke-width="0.2"/><rect x="856.2" y="507.3" width="1.6" height="1.6" fill="#fff" stroke="#888" stroke-width="0.2"/><rect x="877.8000000000001" y="509.8" width="1.6" height="1.6" fill="#fff" stroke="#888" stroke-width="0.2"/><rect x="895.0" y="488.09999999999997" width="1.6" height="1.6" fill="#fff" stroke="#888" stroke-width="0.2"/><rect x="906.1" y="485.2" width="1.6" height="1.6" fill="#fff" stroke="#888" stroke-width="0.2"/><rect x="929.4000000000001" y="502.4" width="1.6" height="1.6" fill="#fff" stroke="#888" stroke-width="0.2"/><rect x="943.4000000000001" y="501.7" width="1.6" height="1.6" fill="#fff" stroke="#888" stroke-width="0.2"/><rect x="907.3000000000001" y="528.2" width="1.6" height="1.6" fill="#fff" stroke="#888" stroke-width="0.2"/><rect x="936.8000000000001" y="524.5" width="1.6" height="1.6" fill="#fff" stroke="#888" stroke-width="0.2"/><rect x="950.3000000000001" y="546.7" width="1.6" height="1.6" fill="#fff" stroke="#888" stroke-width="0.2"/><rect x="929.4000000000001" y="569.5" width="1.6" height="1.6" fill="#fff" stroke="#888" stroke-width="0.2"/><rect x="893.8000000000001" y="573.7" width="1.6" height="1.6" fill="#fff" stroke="#888" stroke-width="0.2"/><rect x="881.5" y="594.6" width="1.6" height="1.6" fill="#fff" stroke="#888" stroke-width="0.2"/><rect x="930.7" y="589.7" width="1.6" height="1.6" fill="#fff" stroke="#888" stroke-width="0.2"/></svg></div>
<div class="t" style="left:806.50px;top:527.00px;font-size:1.7px;color:#2d3036;font-weight:700;">Stokkeholmen</div>
<div class="t" style="left:825.00px;top:512.00px;font-size:1.7px;color:#2d3036;font-weight:700;">Lagunes</div>
<div class="t" style="left:859.00px;top:509.00px;font-size:1.7px;color:#2d3036;font-weight:700;">Mosvik</div>
<div class="t" style="left:880.50px;top:512.00px;font-size:1.7px;color:#2d3036;font-weight:700;">Lindenfjell</div>
<div class="t" style="left:897.50px;top:490.00px;font-size:1.7px;color:#2d3036;font-weight:700;">Hallevik</div>
<div class="t" style="left:908.50px;top:487.00px;font-size:1.7px;color:#2d3036;font-weight:700;">Sundet</div>
<div class="t" style="left:932.00px;top:504.00px;font-size:1.7px;color:#2d3036;font-weight:700;">Gullvik</div>
<div class="t" style="left:946.00px;top:503.00px;font-size:1.7px;color:#2d3036;font-weight:700;">Romsetangel</div>
<div class="t" style="left:910.00px;top:530.00px;font-size:1.7px;color:#2d3036;font-weight:700;">Hallingstrom</div>
<div class="t" style="left:939.50px;top:526.00px;font-size:1.7px;color:#2d3036;font-weight:700;">Mosland</div>
<div class="t" style="left:953.00px;top:549.00px;font-size:1.7px;color:#2d3036;font-weight:700;">Fjellet</div>
<div class="t" style="left:932.00px;top:571.00px;font-size:1.7px;color:#2d3036;font-weight:700;">Hagal</div>
<div class="t" style="left:896.50px;top:576.00px;font-size:1.7px;color:#2d3036;font-weight:700;">Hevik</div>
<div class="t" style="left:884.00px;top:597.00px;font-size:1.7px;color:#2d3036;font-weight:700;">Nestl</div>
<div class="t" style="left:925.00px;top:591.00px;font-size:1.7px;color:#2d3036;font-weight:700;">Rå</div>
<div class="t" style="left:918.00px;top:472.00px;font-size:1.7px;color:#2d3036;font-weight:700;">Breivang</div>
<div class="t" style="left:797.00px;top:610.00px;font-size:1.7px;color:#2d3036;font-weight:700;">Stornbildet</div>
<div class="r" style="left:800.00px;top:478.20px;width:56.30px;height:7.40px;background:#ffffff;border-radius:0.6px;box-shadow:0 0.3px 1px rgba(0,0,0,0.12)"></div>
<div class="t" style="left:805.00px;top:482.00px;font-size:1.9px;color:#8a8f98;font-weight:400;">Search for an asset</div>
<div class="r" style="left:965.00px;top:478.00px;width:4.50px;height:67.00px;background:#ffffff;border-radius:0.6px;opacity:0.8"></div>
<div class="r" style="left:971.00px;top:474.00px;width:117.60px;height:150.00px;background:#ffffff;border-left:0.4px solid #e3e5e9"></div>
<div class="t" style="left:974.00px;top:479.00px;font-size:2.3px;color:#30343b;font-weight:700;">Area Selection</div>
<div class="t" style="left:686.00px;width:400px;text-align:right;top:478.00px;font-size:3px;color:#555a63;font-weight:400;">&#215;</div>
<div class="t" style="left:977.00px;top:486.00px;font-size:2.0px;color:#6b7079;font-weight:400;">Overview</div>
<div class="t" style="left:993.50px;top:486.00px;font-size:2.0px;color:#40454e;font-weight:700;">Timeseries</div>
<div class="r" style="left:990.50px;top:489.50px;width:19.50px;height:0.50px;background:#6f7c93;"></div>
<div class="r" style="left:971.00px;top:490.00px;width:117.60px;height:0.30px;background:#eceef1;"></div>
<div class="r" style="left:974.20px;top:494.20px;width:16.60px;height:7.00px;background:#eef1f8;border:0.5px solid #7b8fc4;border-radius:0.8px"></div>
<div class="t" style="left:976.50px;top:498.00px;font-size:1.9px;color:#34406a;font-weight:700;">Production</div>
<div class="r" style="left:991.20px;top:494.20px;width:11.10px;height:7.00px;background:#ffffff;border:0.4px solid #e3e5e9;border-radius:0.8px"></div>
<div class="t" style="left:994.00px;top:498.00px;font-size:1.9px;color:#555a63;font-weight:400;">Load</div>
<div class="r" style="left:1002.70px;top:494.20px;width:13.80px;height:7.00px;background:#ffffff;border:0.4px solid #e3e5e9;border-radius:0.8px"></div>
<div class="t" style="left:1004.50px;top:498.00px;font-size:1.9px;color:#555a63;font-weight:400;">Exchange</div>
<div class="r" style="left:1073.50px;top:494.20px;width:14.00px;height:7.00px;background:#ffffff;border:0.4px solid #e3e5e9;border-radius:3px"></div>
<div class="t" style="left:1077.00px;top:498.00px;font-size:1.9px;color:#555a63;font-weight:400;">&#9719; Reset</div>
<svg style="position:absolute;left:0;top:0" width="1200" height="630" viewBox="0 0 1200 630"><path d="M983.5 507 V553 H1086" fill="none" stroke="#c5cbd2" stroke-width="0.35"/><path d="M982 507 H983.5" stroke="#c5cbd2" stroke-width="0.3"/><path d="M982 516 H983.5" stroke="#c5cbd2" stroke-width="0.3"/><path d="M982 525 H983.5" stroke="#c5cbd2" stroke-width="0.3"/><path d="M982 534 H983.5" stroke="#c5cbd2" stroke-width="0.3"/><path d="M982 543 H983.5" stroke="#c5cbd2" stroke-width="0.3"/><path d="M982 552 H983.5" stroke="#c5cbd2" stroke-width="0.3"/><path d="M984.0 521.4 L984.5 522.1 L985.0 522.4 L985.5 521.7 L986.0 521.3 L986.5 521.8 L987.0 522.0 L987.5 522.3 L988.0 521.2 L988.5 521.1 L989.0 522.0 L989.5 521.9 L990.0 522.3 L990.5 522.0 L991.0 521.5 L991.5 521.4 L992.0 522.7 L992.5 521.3 L993.0 521.1 L993.5 520.9 L994.0 521.4 L994.5 521.4 L995.0 521.2 L995.5 521.3 L996.0 521.4 L996.5 521.5 L997.0 521.7 L997.5 521.3 L998.0 520.3 L998.5 521.4 L999.0 520.4 L999.5 521.0 L1000.0 520.3 L1000.5 521.0 L1001.0 520.7 L1001.5 521.1 L1002.0 522.5 L1002.5 521.0 L1003.0 521.5 L1003.5 520.5 L1004.0 521.0 L1004.5 521.4 L1005.0 521.1 L1005.5 521.3 L1006.0 521.2 L1006.5 520.7 L1007.0 521.4 L1007.5 520.8 L1008.0 522.0 L1008.5 521.0 L1009.0 521.5 L1009.5 521.2 L1010.0 521.7 L1010.5 521.0 L1011.0 521.7 L1011.5 521.2 L1012.0 521.9 L1012.5 521.6 L1013.0 521.4 L1013.5 521.0 L1014.0 521.7 L1014.5 521.6 L1015.0 522.1 L1015.5 521.2 L1016.0 521.6 L1016.5 521.6 L1017.0 521.6 L1017.5 521.5 L1018.0 521.5 L1018.5 521.2 L1019.0 521.0 L1019.5 521.3 L1020.0 521.8 L1020.5 522.2 L1021.0 522.0 L1021.5 522.0 L1022.0 521.9 L1022.5 521.9 L1023.0 521.7 L1023.5 521.9 L1024.0 522.4 L1024.5 521.5 L1025.0 521.3 L1025.5 522.5 L1026.0 521.8 L1026.5 522.1 L1027.0 522.1 L1027.5 521.2 L1028.0 522.8 L1028.5 522.5 L1029.0 521.8 L1029.5 522.1 L1030.0 521.8 L1030.5 521.4 L1031.0 521.7 L1031.5 522.0 L1032.0 522.3 L1032.5 522.1 L1033.0 521.9 L1033.5 522.4 L1034.0 521.5 L1034.5 522.2 L1035.0 522.4 L1035.5 521.8 L1036.0 521.1 L1036.5 521.5 L1037.0 522.0 L1037.5 522.2 L1038.0 522.6 L1038.5 521.5 L1039.0 522.0 L1039.5 522.3 L1040.0 521.9 L1040.5 520.9 L1041.0 522.2 L1041.5 522.8 L1042.0 522.2 L1042.5 521.3 L1043.0 521.4 L1043.5 521.6 L1044.0 522.6 L1044.5 521.7 L1045.0 521.4 L1045.5 522.0 L1046.0 521.2 L1046.5 522.0 L1047.0 520.8 L1047.5 520.8 L1048.0 517.3 L1048.5 517.0 L1049.0 521.3 L1049.5 521.1 L1050.0 520.2 L1050.5 520.7 L1051.0 520.7 L1051.5 520.8 L1052.0 521.3 L1052.5 518.3 L1053.0 516.4 L1053.5 518.5 L1054.0 520.9 L1054.5 521.0 L1055.0 521.1 L1055.5 521.2 L1056.0 520.6 L1056.5 520.7 L1057.0 520.1 L1057.5 521.4 L1058.0 521.3 L1058.5 520.5 L1059.0 520.3 L1059.5 519.9 L1060.0 520.5 L1060.5 520.5 L1061.0 521.3 L1061.5 520.4 L1062.0 519.9 L1062.5 519.1 L1063.0 520.8 L1063.5 520.2 L1064.0 519.4 L1064.5 520.1 L1065.0 519.3 L1065.5 521.4 L1066.0 520.2 L1066.5 519.8 L1067.0 519.3 L1067.5 518.3 L1068.0 519.1 L1068.5 518.3 L1069.0 519.1 L1069.5 517.8 L1070.0 518.2 L1070.5 519.0 L1071.0 519.0 L1071.5 517.6 L1072.0 517.3 L1072.5 518.5 L1073.0 518.5 L1073.5 517.7 L1074.0 517.9 L1074.5 518.0 L1075.0 517.8 L1075.5 518.1 L1076.0 519.1 L1076.5 518.9 L1077.0 519.6 L1077.5 518.6 L1078.0 518.7 L1078.5 518.4 L1079.0 518.8 L1079.5 518.3 L1080.0 518.2 L1080.5 519.4 L1081.0 519.8 L1081.5 519.6 L1082.0 519.9 L1082.5 519.5 L1083.0 519.2 L1083.5 519.6 L1084.0 519.5 L1084.5 519.2 L1085.0 519.1 L1085.5 519.2 L1086.0 520.0" fill="none" stroke="#6d86c6" stroke-width="0.55"/></svg>
<div class="t" style="left:686.00px;width:400px;text-align:right;top:506.00px;font-size:1.8px;color:#6b7079;font-weight:400;">Zoom &#9906;</div>
<div class="t" style="left:788.00px;width:400px;text-align:center;top:556.00px;font-size:1.6px;color:#8a8f98;font-weight:400;">Jan</div>
<div class="t" style="left:796.50px;width:400px;text-align:center;top:556.00px;font-size:1.6px;color:#8a8f98;font-weight:400;">Feb</div>
<div class="t" style="left:805.00px;width:400px;text-align:center;top:556.00px;font-size:1.6px;color:#8a8f98;font-weight:400;">Mar</div>
<div class="t" style="left:813.50px;width:400px;text-align:center;top:556.00px;font-size:1.6px;color:#8a8f98;font-weight:400;">Apr</div>
<div class="t" style="left:822.00px;width:400px;text-align:center;top:556.00px;font-size:1.6px;color:#8a8f98;font-weight:400;">Mai</div>
<div class="t" style="left:830.50px;width:400px;text-align:center;top:556.00px;font-size:1.6px;color:#8a8f98;font-weight:400;">Jun</div>
<div class="t" style="left:839.00px;width:400px;text-align:center;top:556.00px;font-size:1.6px;color:#8a8f98;font-weight:400;">Jul</div>
<div class="t" style="left:847.50px;width:400px;text-align:center;top:556.00px;font-size:1.6px;color:#8a8f98;font-weight:400;">Aug</div>
<div class="t" style="left:856.00px;width:400px;text-align:center;top:556.00px;font-size:1.6px;color:#8a8f98;font-weight:400;">Sep</div>
<div class="t" style="left:864.50px;width:400px;text-align:center;top:556.00px;font-size:1.6px;color:#8a8f98;font-weight:400;">Okt</div>
<div class="t" style="left:873.00px;width:400px;text-align:center;top:556.00px;font-size:1.6px;color:#8a8f98;font-weight:400;">Nov</div>
<div class="t" style="left:881.50px;width:400px;text-align:center;top:556.00px;font-size:1.6px;color:#8a8f98;font-weight:400;">Des</div>
<div class="r" style="left:976.50px;top:560.30px;width:2.00px;height:1.30px;background:#4b72c4;"></div>
<div class="t" style="left:980.00px;top:562.00px;font-size:1.7px;color:#6b7079;font-weight:400;">Production & generation</div>
<div class="r" style="left:971.00px;top:566.00px;width:117.60px;height:0.30px;background:#eceef1;"></div>
<div class="t" style="left:974.00px;top:570.00px;font-size:2.2px;color:#30343b;font-weight:700;">Power generation in area (X)</div>
<div class="r" style="left:976.00px;top:575.80px;width:111.00px;height:8.60px;background:#f7f8fa;border-bottom:0.3px solid #e3e5e9"></div>
<div class="t" style="left:987.50px;top:581.00px;font-size:1.8px;color:#40454e;font-weight:700;">Name</div>
<div class="t" style="left:1020.50px;top:581.00px;font-size:1.8px;color:#40454e;font-weight:700;">Component Type</div>
<div class="t" style="left:1056.00px;top:581.00px;font-size:1.8px;color:#40454e;font-weight:700;">Turbine Type</div>
<svg style="position:absolute;left:979.30px;top:586.70px;" width="2.6" height="2.6" viewBox="0 0 2.6 2.6"><path d="M0.3 1.3L1 2L2.3 0.4" fill="none" stroke="#34406a" stroke-width="0.55"/></svg>
<div class="t" style="left:987.50px;top:589.00px;font-size:1.8px;color:#34406a;font-weight:700;">Andeby G1 Hydro</div>
<div class="t" style="left:1020.50px;top:589.00px;font-size:1.8px;color:#6b7079;font-weight:400;">HydroGeneratingUnit</div>
<div class="t" style="left:1056.00px;top:589.00px;font-size:1.8px;color:#6b7079;font-weight:400;">Francis</div>
<div class="r" style="left:976.00px;top:592.35px;width:111.00px;height:0.20px;background:#eef0f3;"></div>
<svg style="position:absolute;left:979.30px;top:595.45px;" width="2.6" height="2.6" viewBox="0 0 2.6 2.6"><path d="M0.3 1.3L1 2L2.3 0.4" fill="none" stroke="#34406a" stroke-width="0.55"/></svg>
<div class="t" style="left:987.50px;top:597.00px;font-size:1.8px;color:#34406a;font-weight:700;">Andeby G2 Hydro</div>
<div class="t" style="left:1020.50px;top:597.00px;font-size:1.8px;color:#6b7079;font-weight:400;">HydroGeneratingUnit</div>
<div class="t" style="left:1056.00px;top:597.00px;font-size:1.8px;color:#6b7079;font-weight:400;">Pelton</div>
<div class="r" style="left:976.00px;top:601.10px;width:111.00px;height:0.20px;background:#eef0f3;"></div>
<svg style="position:absolute;left:979.30px;top:604.20px;" width="2.6" height="2.6" viewBox="0 0 2.6 2.6"><path d="M0.3 1.3L1 2L2.3 0.4" fill="none" stroke="#34406a" stroke-width="0.55"/></svg>
<div class="t" style="left:987.50px;top:606.00px;font-size:1.8px;color:#34406a;font-weight:700;">Andeby G3 Hydro</div>
<div class="t" style="left:1020.50px;top:606.00px;font-size:1.8px;color:#6b7079;font-weight:400;">HydroGeneratingUnit</div>
<div class="r" style="left:976.00px;top:609.85px;width:111.00px;height:0.20px;background:#eef0f3;"></div>
<svg style="position:absolute;left:979.30px;top:612.95px;" width="2.6" height="2.6" viewBox="0 0 2.6 2.6"><path d="M0.3 1.3L1 2L2.3 0.4" fill="none" stroke="#34406a" stroke-width="0.55"/></svg>
<div class="t" style="left:987.50px;top:615.00px;font-size:1.8px;color:#34406a;font-weight:700;">Tiltvdy G1 Wind</div>
<div class="t" style="left:1020.50px;top:615.00px;font-size:1.8px;color:#6b7079;font-weight:400;">HydroGeneratingUnit</div>
<div class="r" style="left:976.00px;top:618.60px;width:111.00px;height:0.20px;background:#eef0f3;"></div>
<svg style="position:absolute;left:979.30px;top:621.70px;" width="2.6" height="2.6" viewBox="0 0 2.6 2.6"><path d="M0.3 1.3L1 2L2.3 0.4" fill="none" stroke="#34406a" stroke-width="0.55"/></svg>
<div class="t" style="left:987.50px;top:624.00px;font-size:1.8px;color:#34406a;font-weight:700;">Tiltvdy G2 Wind</div>
<div class="t" style="left:1020.50px;top:624.00px;font-size:1.8px;color:#6b7079;font-weight:400;">HydroGeneratingUnit</div>
</div>
</body></html>
